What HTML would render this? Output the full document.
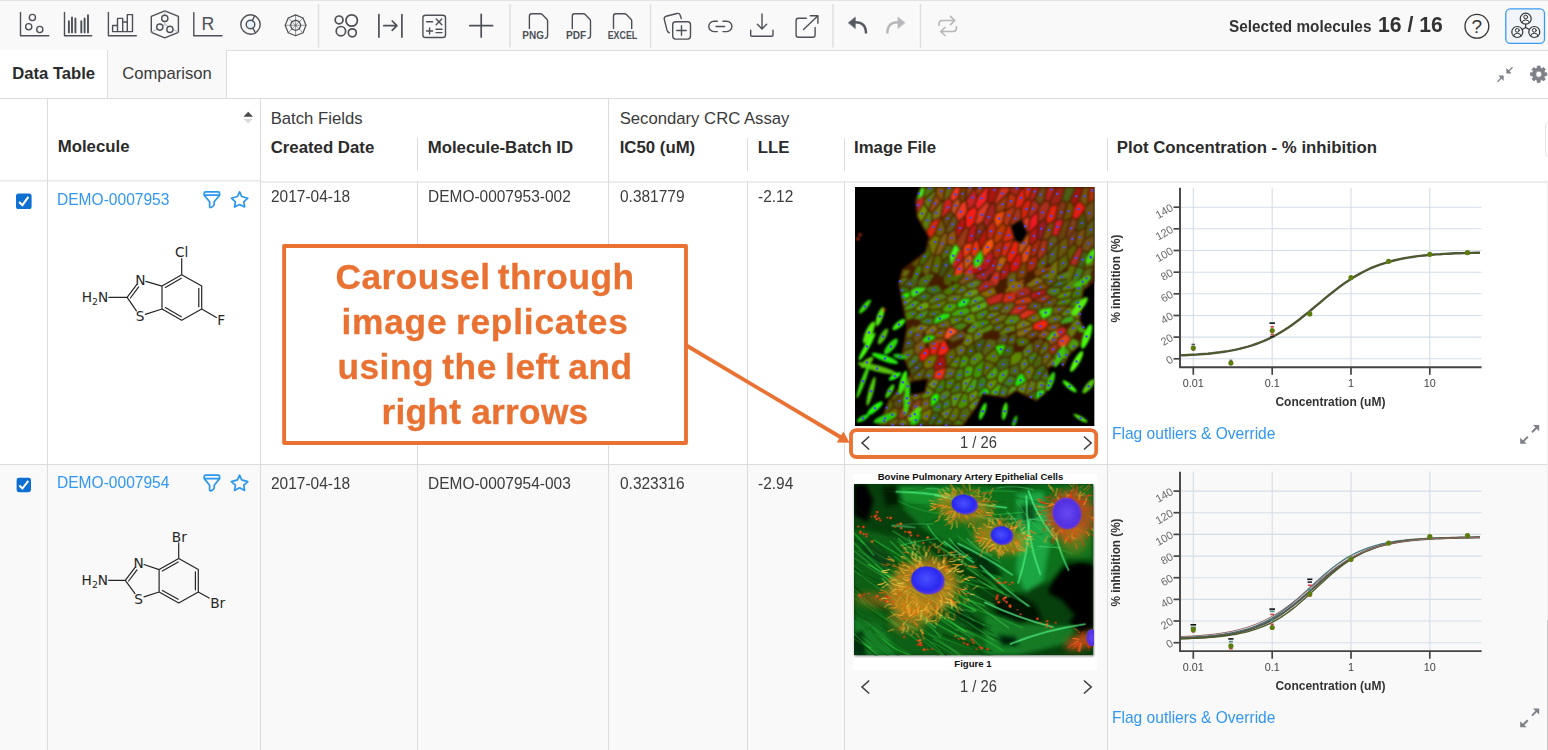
<!DOCTYPE html>
<html><head><meta charset="utf-8"><title>Data Table</title>
<style>
html,body{margin:0;padding:0;}
body{width:1548px;height:750px;overflow:hidden;position:relative;background:#fff;font-family:"Liberation Sans",sans-serif;color:#333;}
.abs{position:absolute;}
.t{position:absolute;white-space:nowrap;line-height:1;}
.vl{position:absolute;width:1px;background:#dcdcdc;}
.hl{position:absolute;height:1px;background:#dcdcdc;}
.hd{font-weight:bold;font-size:16.8px;color:#2b2b2b;}
.gh{font-size:16.7px;color:#3a3a3a;}
.dc{font-size:17px;color:#3c3c3c;transform:scaleX(0.91);transform-origin:0 0;}
.lk{font-size:17px;color:#3197f3;transform:scaleX(0.915);transform-origin:0 0;}
svg{position:absolute;overflow:visible;}
</style></head><body>
<!-- toolbar -->
<div class="abs" style="left:0;top:0;width:1548px;height:50px;background:#f9f9f9;"></div>
<div class="hl" style="left:0;top:0;width:1548px;background:#e3e3e3;"></div>
<!-- tabs -->
<div class="abs" style="left:0;top:50px;width:1548px;height:48px;background:#fff;"></div>
<div class="hl" style="left:226px;top:50px;width:1322px;background:#dedede;"></div>
<div class="abs" style="left:108px;top:50px;width:118px;height:48px;background:#f9f9f9;"></div>
<div class="vl" style="left:107px;top:50px;height:48px;"></div>
<div class="vl" style="left:226px;top:50px;height:48px;"></div>
<div class="hl" style="left:0;top:98px;width:1548px;"></div>
<div class="t hd" style="left:12.2px;top:66px;font-size:16.65px;">Data Table</div>
<div class="t" style="left:122.3px;top:66px;font-size:16.6px;color:#3a3a3a;">Comparison</div>
<!-- row backgrounds -->
<div class="abs" style="left:0;top:465px;width:1548px;height:285px;background:#f9f9f9;"></div>
<!-- grid lines -->
<div class="vl" style="left:47px;top:98px;height:652px;"></div>
<div class="vl" style="left:260px;top:98px;height:652px;"></div>
<div class="vl" style="left:608px;top:98px;height:652px;"></div>
<div class="vl" style="left:417px;top:138px;height:33px;"></div>
<div class="vl" style="left:417px;top:181px;height:569px;"></div>
<div class="vl" style="left:747px;top:138px;height:33px;"></div>
<div class="vl" style="left:747px;top:181px;height:569px;"></div>
<div class="vl" style="left:844px;top:138px;height:33px;"></div>
<div class="vl" style="left:844px;top:181px;height:569px;"></div>
<div class="vl" style="left:1107px;top:138px;height:33px;"></div>
<div class="vl" style="left:1107px;top:181px;height:569px;"></div>
<svg style="left:0;top:0;" width="1548" height="200" viewBox="0 0 1548 200"><path d="M0 180.9H260.5M260.5 182H1548" stroke="#dcdcdc" stroke-width="1" fill="none"/></svg>
<div class="hl" style="left:0;top:464px;width:1548px;"></div>
<div class="vl" style="left:1547px;top:183px;height:437px;background:#f0f0f0;"></div>
<!-- header texts -->
<div class="t hd" style="left:57.7px;top:139px;">Molecule</div>
<div class="t gh" style="left:270.7px;top:111px;">Batch Fields</div>
<div class="t hd" style="left:270.7px;top:140px;">Created Date</div>
<div class="t hd" style="left:427.7px;top:140px;">Molecule-Batch ID</div>
<div class="t gh" style="left:619.7px;top:111px;">Secondary CRC Assay</div>
<div class="t hd" style="left:619.7px;top:140px;">IC50 (uM)</div>
<div class="t hd" style="left:757.7px;top:140px;">LLE</div>
<div class="t hd" style="left:854px;top:140px;">Image File</div>
<div class="t hd" style="left:1116.8px;top:140px;">Plot Concentration - % inhibition</div>
<!-- row 1 texts -->
<div class="t lk" style="left:57px;top:191px;">DEMO-0007953</div>
<div class="t dc" style="left:270.5px;top:188px;">2017-04-18</div>
<div class="t dc" style="left:427.5px;top:188px;">DEMO-0007953-002</div>
<div class="t dc" style="left:619.5px;top:188px;">0.381779</div>
<div class="t dc" style="left:757.5px;top:188px;">-2.12</div>
<div class="t lk" style="left:1112px;top:425px;">Flag outliers &amp; Override</div>
<!-- row 2 texts -->
<div class="t lk" style="left:57px;top:474px;">DEMO-0007954</div>
<div class="t dc" style="left:270.5px;top:475px;">2017-04-18</div>
<div class="t dc" style="left:427.5px;top:475px;">DEMO-0007954-003</div>
<div class="t dc" style="left:619.5px;top:475px;">0.323316</div>
<div class="t dc" style="left:757.5px;top:475px;">-2.94</div>
<div class="t lk" style="left:1112px;top:709px;">Flag outliers &amp; Override</div>
<!-- selected -->
<div class="t" style="left:1229px;top:19.3px;font-size:16px;font-weight:bold;color:#333;transform:scaleX(0.959);transform-origin:0 0;">Selected molecules</div>
<div class="t" style="left:1378px;top:14px;font-size:22.4px;font-weight:bold;color:#333;transform:scaleX(0.945);transform-origin:0 0;">16 / 16</div>
<svg style="left:0;top:0;" width="1548" height="100" viewBox="0 0 1548 100" fill="none" stroke="#4d5056" stroke-width="1.4" stroke-linecap="round" stroke-linejoin="round">
<!-- separators -->
<g stroke="#dedede" stroke-width="1.4" stroke-linecap="butt">
<line x1="318.5" y1="4" x2="318.5" y2="47.6"/><line x1="510" y1="4" x2="510" y2="47.6"/><line x1="650.5" y1="4" x2="650.5" y2="47.6"/><line x1="833" y1="4" x2="833" y2="47.6"/><line x1="920.5" y1="4" x2="920.5" y2="47.6"/>
</g>
<!-- scatter -->
<path d="M20.5 12.5V35.7H48.8"/>
<circle cx="32.4" cy="17.5" r="3.1"/><circle cx="28.7" cy="26.7" r="3.1"/><circle cx="39.8" cy="29.5" r="3.1"/>
<!-- bars -->
<path d="M64.5 12.5V35.7H91.7"/>
<g stroke-width="1.9"><path d="M68.9 21.2V32.4M72 17.4V32.4M75.4 18.4V32.4M81.3 21.2V32.4M84.6 18.4V32.4M88 15.2V32.4"/></g>
<!-- histogram -->
<path d="M108.4 12.5V35.7H136.3"/>
<path d="M112.6 31.6V25.5H117.5V31.6M117.5 25.5V18.4H122.7V31.6M122.7 22H127.3V31.6M127.3 22V14.6H132.5V31.6H112.6"/>
<!-- hexagon -->
<path d="M164.8 10.8L178.4 16.4V32.3L164.8 37.8L151.3 32.3V16.4Z"/>
<g stroke="#aab4c0" stroke-width="0.9"><path d="M164.8 10.8V24.5M164.8 24.5L151.3 32.3M164.8 24.5L178.4 32.3"/></g>
<g fill="#f9f9f9"><circle cx="164.8" cy="18.4" r="3.1"/><circle cx="159.8" cy="27.1" r="3.1"/><circle cx="169.9" cy="29.4" r="3.1"/></g>
<!-- R -->
<path d="M193.8 12.6V35.8H222"/>
<text x="201.6" y="30" font-family="Liberation Sans, sans-serif" font-size="17.8" fill="#4d5056" stroke="none">R</text>
<!-- donut -->
<circle cx="250.5" cy="24.5" r="9.7"/><circle cx="250.5" cy="24.5" r="4.3" fill="#e6f2fb"/>
<path d="M252.4 20.6L254.6 15.8M252.7 28.2L255.6 33"/>
<!-- radar -->
<g stroke-width="1.2"><path d="M295.6 14.9L303 18L306 25.3L303 32.7L295.6 35.7L288.2 32.7L285.2 25.3L288.2 18Z"/>
<path d="M295.6 20.1L299.3 21.6L300.8 25.3L299.3 29L295.6 30.5L291.9 29L290.4 25.3L291.9 21.6Z"/></g>
<g stroke-width="0.6"><path d="M295.6 14.9V35.7M285.2 25.3H306M288.2 18L303 32.7M303 18L288.2 32.7"/></g>
<!-- four circles -->
<g stroke-width="1.7"><circle cx="339.1" cy="19.9" r="3.9"/><circle cx="351.7" cy="20.5" r="5.7"/><circle cx="340.9" cy="31.2" r="4.7"/><circle cx="352.3" cy="32.8" r="4"/></g>
<!-- |->| -->
<g stroke-width="1.7"><path d="M378.9 14.5V37.1M401.9 14.5V37.1M383.8 25.7H396.9M392.2 21L396.9 25.7L392.2 30.4"/></g>
<!-- calculator -->
<rect x="422.9" y="15.2" width="22.6" height="22.3" rx="2.6"/>
<path d="M426.6 21.8H432.6M436.2 18.9L441.8 24.7M441.8 18.9L436.2 24.7M426.6 31H432.6M429.6 28V34M436 29.3H442M436 32.6H442"/>
<!-- plus -->
<g stroke-width="1.7"><path d="M481.2 14.3V37.1M469.8 25.7H492.6"/></g>
<!-- file icons -->
<path d="M529.4 28.6V15.9Q529.4 13.7 531.6 13.7H540.6Q541.6 13.7 542.3 14.4L546.9 19.2Q547.6 19.9 547.6 21V35.6Q547.6 38.2 545.2 38.4"/>
<path d="M572.3 28.6V15.9Q572.3 13.7 574.5 13.7H583.5Q584.5 13.7 585.2 14.4L589.8 19.2Q590.5 19.9 590.5 21V35.6Q590.5 38.2 588.1 38.4"/>
<path d="M613.5 28.6V15.9Q613.5 13.7 615.7 13.7H624.7Q625.7 13.7 626.4 14.4L631 19.2Q631.7 19.9 631.7 21V28.6"/>
<g font-family="Liberation Sans, sans-serif" font-weight="bold" font-size="10.2" fill="#4d5056" stroke="none">
<text x="522.3" y="38.8" textLength="21.6" lengthAdjust="spacingAndGlyphs">PNG</text>
<text x="565.9" y="38.8" textLength="20.2" lengthAdjust="spacingAndGlyphs">PDF</text>
<text x="607.7" y="38.8" textLength="29.5" lengthAdjust="spacingAndGlyphs">EXCEL</text>
</g>
<!-- copy plus -->
<rect x="672.7" y="21.7" width="17.8" height="17.4" rx="3"/>
<path d="M681.5 25.8V35.2M676.8 30.5H686.2"/>
<path d="M669.4 32.8Q667.6 32.2 667 30.2L664.3 19.4Q663.7 17 666 16.3L677 13.5Q679.4 12.9 680.2 15.2L681.3 18.6"/>
<!-- link -->
<path d="M717.3 21.2H714A5.2 5.2 0 0 0 714 31.6H717.3M723 21.2H726.7A5.2 5.2 0 0 1 726.7 31.6H723M716 26.5H724.6"/>
<!-- download -->
<path d="M762 13.9V28.7M757.4 24.3L762 28.9L766.6 24.3M750.7 30.3V35.3Q750.7 36.3 751.7 36.3H772Q773 36.3 773 35.3V30.3"/>
<!-- external -->
<path d="M806.3 18.3H798.3Q796.1 18.3 796.1 20.5V35Q796.1 37.2 798.3 37.2H812.9Q815.1 37.2 815.1 35V27.4M803.5 29.4L817.7 15.9M810.3 15.8H817.9V23.3"/>
<!-- undo -->
<path d="M848.3 22.7L855.4 16.9V28.5Z" fill="#555960" stroke="#555960" stroke-width="0.4"/>
<path d="M855 22.2Q866 22 866 33.4" stroke="#555960" stroke-width="2.5" stroke-linecap="butt"/>
<!-- redo -->
<path d="M905 22.7L897.9 16.9V28.5Z" fill="#b6b8bb" stroke="#b6b8bb" stroke-width="0.4"/>
<path d="M898.3 22.2Q887.3 22 887.3 33.4" stroke="#b6b8bb" stroke-width="2.5" stroke-linecap="butt"/>
<!-- swap -->
<g stroke="#b6b8bb" stroke-width="1.7"><path d="M939 25.2V24Q939 20.5 942.5 20.5H954.6M950.5 16.4L954.8 20.5L950.5 24.6M956.4 26.9V28Q956.4 31.5 952.9 31.5H940.8M945 27.5L940.7 31.5L945 35.5"/></g>
<!-- help -->
<circle cx="1476.9" cy="26.3" r="11.9" stroke="#333" stroke-width="1.3"/>
<text x="1476.9" y="33" text-anchor="middle" font-family="Liberation Sans, sans-serif" font-size="19" fill="#333" stroke="none">?</text>
<!-- collab -->
<rect x="1505.8" y="8.8" width="38.7" height="34.6" rx="4.5" fill="#f1f5f9" stroke="#3a9bf0" stroke-width="1.3"/>
<g stroke="#333" stroke-width="1.2">
<path d="M1525.7 24.3V27.6M1525.7 27.6L1522.2 29.6M1525.7 27.6L1529.3 29.6"/>
<circle cx="1525.7" cy="18.7" r="5.5"/><circle cx="1517.3" cy="32" r="5.5"/><circle cx="1534.3" cy="32" r="5.5"/>
<g stroke-width="1"><circle cx="1525.7" cy="17" r="1.9"/><path d="M1522 22.6Q1522.4 19.9 1525.7 19.9Q1529 19.9 1529.4 22.6"/>
<circle cx="1517.3" cy="30.3" r="1.9"/><path d="M1513.6 35.9Q1514 33.2 1517.3 33.2Q1520.6 33.2 1521 35.9"/>
<circle cx="1534.3" cy="30.3" r="1.9"/><path d="M1530.6 35.9Q1531 33.2 1534.3 33.2Q1537.600 33.2 1538 35.9"/></g>
</g>
<!-- gear -->
<path d="M1537.20 68.08L1537.30 66.02L1540.10 66.02L1540.20 68.08L1541.97 68.81L1543.49 67.42L1545.48 69.41L1544.09 70.93L1544.82 72.70L1546.88 72.80L1546.88 75.60L1544.82 75.70L1544.09 77.47L1545.48 78.99L1543.49 80.98L1541.97 79.59L1540.20 80.32L1540.10 82.38L1537.30 82.38L1537.20 80.32L1535.43 79.59L1533.91 80.98L1531.92 78.99L1533.31 77.47L1532.58 75.70L1530.52 75.60L1530.52 72.80L1532.58 72.70L1533.31 70.93L1531.92 69.41L1533.91 67.42L1535.43 68.81ZM1535.60 74.20A3.1 3.1 0 1 0 1541.80 74.20A3.1 3.1 0 1 0 1535.60 74.20Z" fill="#7d8187" fill-rule="evenodd" stroke="#7d8187" stroke-width="0.8" stroke-linejoin="round"/>
<!-- collapse arrows -->
<g stroke="#7d8187" stroke-width="1.3" fill="#7d8187" stroke-linecap="butt">
<path d="M1512.5 67.3L1508 71.8M1497.5 81.7L1502 77.2"/>
<path d="M1506.6 68.6L1506.6 73.2L1511.2 73.2Z" stroke-width="0.5"/><path d="M1503.4 80.4L1503.4 75.8L1498.8 75.8Z" stroke-width="0.5"/>
</g>
</svg>
<svg style="left:0;top:0;" width="1548" height="750" viewBox="0 0 1548 750" fill="none">
<rect x="16" y="193.5" width="15.6" height="15.6" rx="2.6" fill="#0e6fd3" stroke="none"/>
<path d="M19.1 202L22.4 205.1L28.4 196.9" stroke="#fff" stroke-width="2.1" fill="none" stroke-linecap="butt" stroke-linejoin="miter"/>
<path d="M205.6 191.8H218.2Q219.6 191.8 219.6 193.2V195.2L214.2 201.8V204.6Q214.2 206 211.4 207.2Q209.6 208 209.6 206.4V201.8L204.2 195.2V193.2Q204.2 191.8 205.6 191.8ZM204.2 195.2H219.6" stroke="#2a97f0" stroke-width="1.7" fill="none" stroke-linejoin="round"/>
<path d="M239.6 191.8L241.7 196.5L247.8 198.2L243.8 201.8L244.6 207.0L239.6 204.4L234.6 207.0L235.4 201.8L231.4 198.2L237.5 196.5Z" stroke="#2a97f0" stroke-width="1.7" fill="none" stroke-linejoin="round"/>
<rect x="16.6" y="477.7" width="14.4" height="14.5" rx="2.4" fill="#0e6fd3" stroke="none"/>
<path d="M19.4 485.5L22.4 488.5L28.3 480.9" stroke="#fff" stroke-width="2" fill="none" stroke-linecap="butt" stroke-linejoin="miter"/>
<path d="M205.6 475.2H218.2Q219.6 475.2 219.6 476.59999999999997V478.59999999999997L214.2 485.2V488.0Q214.2 489.4 211.4 490.59999999999997Q209.6 491.4 209.6 489.79999999999995V485.2L204.2 478.59999999999997V476.59999999999997Q204.2 475.2 205.6 475.2ZM204.2 478.59999999999997H219.6" stroke="#2a97f0" stroke-width="1.7" fill="none" stroke-linejoin="round"/>
<path d="M239.6 475.2L241.7 479.9L247.8 481.6L243.8 485.2L244.6 490.4L239.6 487.8L234.6 490.4L235.4 485.2L231.4 481.6L237.5 479.9Z" stroke="#2a97f0" stroke-width="1.7" fill="none" stroke-linejoin="round"/>
<g stroke="#7d8187" fill="#7d8187" stroke-width="2" stroke-linecap="butt"><path d="M1532 432.2L1537 427.2M1527.8 436.8L1522.6 442"/><path d="M1533 425H1539.2V431.2Z" stroke="none"/><path d="M1520.2 437.8V443.8H1526.6Z" stroke="none"/></g>
<g stroke="#7d8187" fill="#7d8187" stroke-width="2" stroke-linecap="butt"><path d="M1532 715.6L1537 710.6M1527.8 720.2L1522.6 725.4"/><path d="M1533 708.4H1539.2V714.6Z" stroke="none"/><path d="M1520.2 721.2V727.2H1526.6Z" stroke="none"/></g>
<g stroke="#3a3a3a" stroke-width="1.5" fill="none" stroke-linecap="butt" stroke-linejoin="miter"><path d="M869.2 436.5L862 443L869.2 449.5"/><path d="M1084 436.5L1091.2 443L1084 449.5"/></g>
<g stroke="#3a3a3a" stroke-width="1.5" fill="none" stroke-linecap="butt" stroke-linejoin="miter"><path d="M869.2 680.5L862 687L869.2 693.5"/><path d="M1084 680.5L1091.2 687L1084 693.5"/></g>
<path d="M243.4 116.8L248.2 111.8L253 116.8Z" fill="#4a4a4a"/><path d="M243.6 119L248.2 123.4L252.8 119Z" fill="#dadada"/>
</svg>
<div class="t" style="left:960px;top:434.5px;font-size:15.6px;color:#3c3c3c;transform:scaleX(0.945);transform-origin:0 0;">1 / 26</div>
<div class="t" style="left:960px;top:678.5px;font-size:15.6px;color:#3c3c3c;transform:scaleX(0.945);transform-origin:0 0;">1 / 26</div>
<div class="abs" style="left:1545px;top:122px;width:10px;height:33px;border:1.5px solid #e4e4e4;border-radius:4px;"></div>
<div class="abs" style="left:1546.5px;top:620px;width:2px;height:130px;background:#c6c6c6;"></div>
<svg style="left:0;top:0;" width="300" height="750" viewBox="0 0 300 750">
<g fill="none" stroke="#262626" stroke-width="1.2" stroke-linecap="round">
<path d="M181.7 274.7L201.7 286.1M201.7 286.1L201.7 309.0M201.7 309.0L181.7 320.3M181.7 320.3L162.0 309.0M162.0 309.0L162.0 286.1M162.0 286.1L181.7 274.7M165.4 287.5L181.3 278.3M198.8 288.3L198.8 306.8M181.3 316.7L165.4 307.6M162.0 286.1L145.8 281.3M127.1 297.4L136.7 284.6M130.4 298.0L138.7 286.9M127.1 297.4L136.4 310.9M145.3 314.4L162.0 309.0M108.9 297.4L127.1 297.4M181.7 274.7L181.7 258.7M201.7 309.0L216.4 317.4"/>
<path d="M178.7 558.4L198.3 569.6M198.3 569.6L198.3 592.0M198.3 592.0L178.7 602.9M178.7 602.9L159.1 592.0M159.1 592.0L159.1 569.6M159.1 569.6L178.7 558.4M162.4 571.0L178.2 562.0M195.4 571.8L195.4 589.8M178.2 599.3L162.4 590.5M159.1 569.6L144.0 564.5M125.3 580.4L134.9 567.6M128.6 581.0L137.0 569.9M125.3 580.4L135.0 593.6M144.0 596.9L159.1 592.0M108.7 580.4L125.3 580.4M178.7 558.4L178.7 542.9M198.3 592.0L209.1 598.1"/>
</g>
<g font-family="DejaVu Sans, sans-serif" font-size="13.7" fill="#262626">
<text x="140.4" y="284.6" text-anchor="middle">N</text>
<text x="140.0" y="321.0" text-anchor="middle">S</text>
<text x="181.7" y="257.2" text-anchor="middle">Cl</text>
<text x="221.3" y="325.2" text-anchor="middle">F</text>
<text x="108.3" y="302.3" text-anchor="end">H<tspan font-size="9.4" dy="3">2</tspan><tspan dy="-3">N</tspan></text>
<text x="138.7" y="567.6" text-anchor="middle">N</text>
<text x="138.7" y="603.6" text-anchor="middle">S</text>
<text x="179.3" y="541.6" text-anchor="middle">Br</text>
<text x="217.7" y="608.2" text-anchor="middle">Br</text>
<text x="108.1" y="585.3" text-anchor="end">H<tspan font-size="9.4" dy="3">2</tspan><tspan dy="-3">N</tspan></text>
</g>
</svg>
<svg style="left:855.3px;top:186.6px;" width="239.6" height="239.2" viewBox="0 0 240 240" preserveAspectRatio="none" overflow="hidden">
<defs><filter id="b0" x="-5%" y="-5%" width="110%" height="110%"><feGaussianBlur stdDeviation="0.6"/></filter><filter id="b1" x="-5%" y="-5%" width="110%" height="110%"><feGaussianBlur stdDeviation="1.1"/></filter><clipPath id="c1"><rect x="0" y="0" width="240" height="240"/></clipPath></defs>
<g clip-path="url(#c1)">
<rect x="0" y="0" width="240" height="240" fill="#000"/>
<path d="M73.2 50.4L70.1 64.7L46.9 82.9L46.8 83.0L46.8 83.0L46.7 83.1L46.7 83.2L46.6 83.3L46.6 83.3L46.6 83.4L43.2 96.8L43.2 96.9L43.2 97.0L43.2 97.2L43.2 97.3L51.5 140.6L46.5 167.2L46.5 167.3L46.5 167.4L46.5 167.5L46.6 167.6L46.6 167.7L46.6 167.7L54.7 187.3L33.4 213.6L33.3 213.7L33.3 213.8L33.2 213.9L23.2 239.0L23.1 239.1L23.1 239.1L23.1 239.2L23.1 239.3L23.1 239.4L23.1 239.5L23.1 239.6L23.2 239.7L23.2 239.8L23.3 239.9L23.3 240.0L23.4 240.0L23.5 240.1L23.5 240.2L23.6 240.2L23.7 240.3L23.8 240.3L23.9 240.3L24.0 240.3L24.1 240.3L107.8 240.3L107.9 240.3L108.0 240.3L108.1 240.3L108.2 240.3L108.2 240.2L108.3 240.2L108.4 240.1L108.5 240.1L108.5 240.0L108.6 239.9L122.0 221.5L122.0 221.4L122.1 221.4L128.4 208.6L151.2 211.9L151.3 211.9L151.4 211.9L151.5 211.9L151.6 211.8L151.7 211.8L151.8 211.8L151.9 211.7L161.4 205.3L181.0 215.1L181.1 215.2L181.2 215.2L181.2 215.2L181.3 215.2L181.4 215.2L181.5 215.2L181.6 215.2L181.7 215.2L181.8 215.2L181.9 215.1L182.0 215.1L182.0 215.0L190.4 208.3L190.5 208.2L190.6 208.2L190.6 208.1L196.4 199.7L196.4 199.6L196.5 199.6L196.5 199.5L196.5 199.4L196.5 199.3L196.5 199.2L196.5 199.1L196.5 199.0L193.7 182.0L206.6 176.8L207.3 180.8L207.3 180.9L207.3 181.0L207.4 181.0L207.4 181.1L207.5 181.2L207.5 181.3L207.6 181.3L207.7 181.4L207.8 181.5L207.9 181.5L207.9 181.5L208.0 181.6L208.1 181.6L208.2 181.6L208.3 181.6L208.4 181.6L208.5 181.6L208.6 181.5L208.7 181.5L208.8 181.5L208.9 181.4L208.9 181.4L209.0 181.3L209.1 181.2L209.1 181.1L209.2 181.0L215.7 168.0L235.6 151.4L235.7 151.3L235.8 151.3L235.8 151.2L235.9 151.1L235.9 151.0L235.9 150.9L236.0 150.8L236.0 150.7L236.0 150.6L236.0 150.5L236.0 150.4L235.9 150.3L235.9 150.2L235.8 150.1L226.0 133.7L229.2 104.3L240.7 94.5L240.7 94.4L240.8 94.3L240.8 94.3L240.9 94.2L240.9 94.1L241.0 94.0L241.0 93.9L241.0 93.8L241.0 93.7L241.0 0.0L241.0 -0.1L241.0 -0.2L241.0 -0.3L240.9 -0.4L240.9 -0.5L240.8 -0.6L240.8 -0.6L240.7 -0.7L240.6 -0.8L240.6 -0.8L240.5 -0.9L240.4 -0.9L240.3 -1.0L240.2 -1.0L240.1 -1.0L240.0 -1.0L65.9 -1.0L65.8 -1.0L65.7 -1.0L65.6 -1.0L65.5 -0.9L65.5 -0.9L65.4 -0.8L65.3 -0.8L65.2 -0.7L65.2 -0.6L65.1 -0.5L65.0 -0.4L65.0 -0.4L60.0 13.0L60.0 13.1L59.9 13.2L59.9 13.3L59.9 13.4L59.9 13.5L61.6 30.2L61.6 30.3L61.6 30.4L61.7 30.5L61.7 30.6ZM166.5 55.2L161.0 53.3L157.0 39.4L166.4 33.7L171.8 46.7ZM71.8 193.2L69.3 205.8L53.4 208.4L55.9 195.9Z" fill="#451c06" fill-rule="evenodd" filter="url(#b1)"/>
<g filter="url(#b1)"><path d="M137.5 61.7L138.8 58.4L138.0 51.8L132.7 53.9L127.3 62.6L129.4 69.9Z" fill="#f3530c"/><path d="M220.8 56.2L223.5 59.9L226.4 58.4L229.3 52.1L230.5 41.7L223.6 45.5Z" fill="#71530b"/><path d="M140.1 59.0L138.9 62.2L139.2 70.4L143.8 70.5L144.8 69.4L148.0 56.0L147.1 53.8Z" fill="#b42c0d"/><path d="M77.0 67.2L79.1 67.2L85.2 50.6L79.7 48.4L74.0 54.9L73.9 55.1Z" fill="#6f7400"/><path d="M169.8 90.4L171.6 86.9L171.4 76.4L167.2 77.5L163.2 84.9L162.5 93.1Z" fill="#7b4501"/><path d="M66.3 85.4L66.9 79.9L64.3 78.3L61.0 81.9L56.5 93.3L58.8 98.1Z" fill="#467904"/><path d="M184.4 0.7L178.7 0.7L174.6 11.4L177.2 13.5L179.6 11.8Z" fill="#b0221b"/><path d="M167.4 76.0L171.6 74.9L174.0 71.1L176.3 58.7L174.2 57.9L167.3 67.6Z" fill="#dc4c12"/><path d="M69.3 8.6L70.0 11.1L80.6 1.5L80.8 0.7L70.9 0.7Z" fill="#4e7508"/><path d="M140.0 15.6L141.0 17.4L153.7 5.1L153.8 4.8L154.8 0.7L146.0 0.7Z" fill="#d23023"/><path d="M86.9 15.0L77.9 25.8L77.7 33.2L85.3 30.0L88.0 14.9L87.9 14.7Z" fill="#776e16"/><path d="M138.9 16.5L135.7 17.7L128.8 35.2L131.3 40.0L131.9 39.9L137.7 32.7L140.1 26.1L140.1 18.7Z" fill="#a42020"/><path d="M212.7 79.6L213.6 77.8L213.8 77.0L211.2 67.5L204.4 73.3L204.0 86.8L204.0 86.8Z" fill="#57630d"/><path d="M109.8 28.6L112.0 23.5L110.6 14.0L106.7 16.7L101.1 27.3L103.5 33.8Z" fill="#eb3921"/><path d="M95.5 10.0L98.0 14.6L102.6 10.3L105.4 0.7L100.2 0.7Z" fill="#f13824"/><path d="M187.8 52.3L192.9 52.3L196.5 47.8L199.1 35.1L192.8 38.3Z" fill="#7b490b"/><path d="M204.5 54.3L204.7 54.4L210.0 49.9L215.3 32.6L209.4 34.7L203.9 49.3Z" fill="#694510"/><path d="M238.2 80.4L230.2 83.4L227.4 90.6L229.7 101.6L232.8 99.0Z" fill="#596814"/><path d="M230.9 51.1L239.3 46.8L239.3 31.5L233.2 38.1L232.0 40.6Z" fill="#575915"/><path d="M196.3 19.4L191.5 31.3L192.7 36.8L199.6 33.3L203.0 18.1Z" fill="#e1210a"/><path d="M63.0 27.3L63.3 29.9L66.5 35.4L72.6 23.8L68.8 17.6Z" fill="#759301"/><path d="M62.0 12.6L68.0 8.2L69.4 0.7L66.4 0.7Z" fill="#44fc1b"/><path d="M154.2 39.0L152.7 40.4L148.2 52.6L149.1 55.1L158.8 51.9L155.3 39.6Z" fill="#d72a0f"/><path d="M85.0 68.6L80.5 69.4L76.3 84.9L83.1 86.8L86.7 74.9Z" fill="#556902"/><path d="M65.0 77.1L67.5 78.6L75.7 67.8L73.3 58.1L71.6 65.4L71.6 65.5L71.6 65.6L71.6 65.6L71.5 65.7L71.5 65.7L71.4 65.8L71.4 65.8L66.5 69.7Z" fill="#456d01"/><path d="M86.6 32.0L86.6 31.9L80.4 47.2L85.9 49.4L89.8 44.6L90.3 42.4Z" fill="#6f5c0b"/><path d="M86.3 67.9L87.8 73.7L93.3 69.2L97.6 59.5L92.1 58.2Z" fill="#536509"/><path d="M111.7 55.6L118.4 54.6L119.0 53.8L121.5 38.7L119.8 37.3L115.4 41.9Z" fill="#bf161e"/><path d="M152.8 91.4L152.3 98.9L157.1 102.5L161.0 93.9L161.8 85.5L155.2 86.9Z" fill="#645d16"/><path d="M74.5 23.4L77.1 24.7L85.6 14.4L81.0 8.9Z" fill="#964d12"/><path d="M216.1 97.5L220.3 97.1L226.1 90.2L228.9 82.8L228.9 82.4L222.6 80.6L216.0 97.1Z" fill="#407e1e"/><path d="M95.3 23.0L97.1 15.8L94.5 11.1L89.4 15.1L86.7 30.5L86.7 30.5L86.9 30.6Z" fill="#c9221e"/><path d="M212.4 66.4L214.7 75.1L222.4 60.9L220.0 57.4L214.3 62.0Z" fill="#5c5c05"/><path d="M123.1 22.5L131.6 14.0L133.3 0.7L131.4 0.7L123.0 10.8L120.4 18.6Z" fill="#f02226"/><path d="M96.9 79.6L96.3 79.9L88.7 90.9L89.5 97.1L95.1 99.4L98.1 92.8L99.2 82.9Z" fill="#4e5b03"/><path d="M155.7 38.2L165.6 32.2L165.8 21.6L161.3 22.7L155.0 37.8Z" fill="#a3341b"/><path d="M217.7 30.4L222.8 31.7L228.7 23.8L230.3 19.7L224.6 14.5L220.4 19.7Z" fill="#e31d15"/><path d="M77.5 34.8L72.2 45.2L74.9 49.9L74.9 49.9L75.0 50.0L75.0 50.0L75.0 50.1L75.0 50.2L75.0 50.2L75.0 50.3L75.0 50.4L74.6 52.0L78.9 47.2L85.2 31.5Z" fill="#d52811"/><path d="M151.2 22.7L159.2 18.4L161.2 9.9L154.9 6.1Z" fill="#ba3010"/><path d="M230.2 81.9L238.8 78.6L239.3 78.0L239.3 59.6L234.5 65.5L230.2 81.9Z" fill="#5a7208"/><path d="M183.3 53.3L177.8 58.6L175.6 70.2L181.7 67.6L186.0 53.5Z" fill="#a62c0a"/><path d="M139.6 84.3L143.2 71.9L139.0 71.8L134.1 81.8L136.5 88.3Z" fill="#ae1d1b"/><path d="M183.9 74.7L182.1 80.5L186.2 83.6L192.4 77.0L192.5 67.4L191.7 67.0Z" fill="#615a10"/><path d="M109.8 83.9L117.2 74.6L118.0 71.9L115.4 67.2L109.5 72.6Z" fill="#cb5b14"/><path d="M159.4 54.1L152.5 69.9L152.5 73.8L155.5 75.9L162.9 66.0L163.3 55.9L159.9 54.8L159.9 54.8L159.8 54.7L159.7 54.7L159.7 54.6L159.6 54.6L159.6 54.5L159.6 54.5L159.5 54.4L159.5 54.4L159.5 54.3Z" fill="#ea230c"/><path d="M183.7 38.0L183.7 51.9L186.3 52.2L191.5 37.8L190.3 32.5L184.1 37.3Z" fill="#971c28"/><path d="M187.4 53.8L183.0 68.1L183.8 72.9L190.9 65.8L192.4 53.7Z" fill="#a6341d"/><path d="M168.0 102.3L169.5 92.0L162.2 94.7L158.0 103.8L157.5 107.3L165.5 107.3Z" fill="#894c0a"/><path d="M88.8 13.7L88.9 13.8L94.2 9.6L98.6 0.7L91.5 0.7Z" fill="#65660d"/><path d="M105.7 62.6L97.9 78.7L100.0 81.5L107.7 71.9L107.0 62.1Z" fill="#cf1e24"/><path d="M227.0 64.0L226.4 60.0L223.8 61.4L215.1 77.3L215.1 77.4L221.7 78.3Z" fill="#b02d27"/><path d="M211.4 49.9L213.1 50.3L220.7 41.7L222.3 33.0L217.1 31.7L217.0 31.8Z" fill="#7d3f1c"/><path d="M212.6 15.0L214.6 13.4L220.5 0.7L210.9 0.7L207.6 13.1Z" fill="#4e5d13"/><path d="M204.6 17.5L201.2 32.7L207.7 31.5L211.9 16.2L207.0 14.3Z" fill="#7d3818"/><path d="M182.6 23.0L184.3 18.8L180.0 13.2L177.8 14.8L173.5 29.2L175.4 30.3Z" fill="#ac2d21"/><path d="M91.3 44.7L93.1 46.7L99.8 41.1L102.4 35.0L99.9 28.3L99.1 28.7L91.7 42.5Z" fill="#65541e"/><path d="M216.0 13.8L219.8 18.3L223.9 13.1L227.8 0.7L222.0 0.7Z" fill="#9d150f"/><path d="M214.8 96.3L221.5 79.7L214.7 78.8L213.9 80.2L212.2 95.7Z" fill="#606e04"/><path d="M167.0 31.6L167.0 31.6L167.0 31.6L167.1 31.6L167.2 31.6L167.2 31.6L167.3 31.7L167.3 31.7L167.4 31.8L167.4 31.8L167.5 31.9L167.5 31.9L167.5 32.0L167.7 32.4L172.1 29.1L176.4 14.6L173.7 12.5L171.3 14.2L167.2 20.9Z" fill="#d2230a"/><path d="M154.9 77.2L152.0 75.2L146.3 84.9L145.4 93.9L151.6 90.6L154.0 86.0Z" fill="#a91e0d"/><path d="M133.0 14.0L135.3 16.3L138.7 15.1L144.5 0.7L134.7 0.7Z" fill="#a91511"/><path d="M209.5 0.7L202.3 0.7L195.7 14.9L196.3 17.9L203.5 16.6L206.1 13.2Z" fill="#982017"/><path d="M145.8 70.4L144.7 71.6L141.1 83.9L145.2 84.0L151.1 74.0L151.1 70.5Z" fill="#b8600a"/><path d="M225.3 13.3L231.0 18.5L232.3 16.8L233.6 0.7L229.3 0.7Z" fill="#755308"/><path d="M90.5 46.0L86.7 50.5L80.4 67.9L80.4 68.0L85.1 67.2L91.1 57.2L92.3 47.9Z" fill="#815e16"/><path d="M164.3 65.8L166.3 66.5L173.3 56.8L174.1 46.5L173.4 46.1L173.6 46.5L173.6 46.6L173.6 46.6L173.6 46.7L173.6 46.8L173.6 46.8L173.6 46.9L173.6 47.0L173.6 47.0L173.6 47.1L173.5 47.1L167.5 56.7L167.5 56.8L167.4 56.9L167.4 56.9L167.3 56.9L167.3 57.0L167.2 57.0L167.2 57.0L167.1 57.1L167.0 57.1L167.0 57.1L166.9 57.1L166.8 57.1L166.8 57.1L166.7 57.0L164.7 56.4Z" fill="#c3571f"/><path d="M211.0 65.9L213.0 61.4L212.6 51.6L210.7 51.1L205.4 55.7L203.2 71.7L203.7 72.1Z" fill="#67590b"/><path d="M102.4 50.7L109.9 40.0L109.7 30.5L103.7 35.4L101.1 41.7Z" fill="#b2140e"/><path d="M230.5 52.8L227.7 59.1L228.3 63.5L233.5 64.5L239.3 57.4L239.3 48.3Z" fill="#6e5018"/><path d="M93.7 48.0L92.5 56.9L98.4 58.3L100.1 56.4L101.3 52.5L99.9 42.9Z" fill="#8e560c"/><path d="M190.5 12.9L194.6 14.0L200.8 0.7L192.8 0.7Z" fill="#b4221b"/><path d="M174.0 44.8L174.7 45.2L182.4 37.4L182.8 36.7L182.5 25.1L176.1 31.5Z" fill="#ee1721"/><path d="M141.5 25.3L149.8 22.6L153.1 7.7L141.5 18.8Z" fill="#a03c0d"/><path d="M93.4 70.9L88.1 75.3L84.3 87.7L84.4 89.5L87.6 89.9L95.1 79.2Z" fill="#435213"/><path d="M127.2 74.9L128.3 71.2L126.1 63.4L126.0 63.4L119.4 72.2L118.5 74.9L120.9 83.2Z" fill="#2be017"/><path d="M110.1 56.2L114.0 42.0L110.9 41.0L102.6 52.9L101.5 56.6L105.4 61.2L107.2 60.5Z" fill="#9a3818"/><path d="M151.3 40.2L147.9 36.9L142.5 42.4L139.4 51.0L140.1 57.2L146.9 52.2Z" fill="#be3805"/><path d="M166.7 0.7L156.2 0.7L155.3 4.7L161.7 8.6Z" fill="#aa251b"/><path d="M189.0 13.1L191.3 0.7L185.9 0.7L181.0 12.2L185.2 17.5Z" fill="#6f4714"/><path d="M111.8 13.0L113.2 22.4L119.0 18.3L121.7 10.4L120.0 2.2Z" fill="#c82426"/><path d="M111.3 39.7L114.6 40.8L119.2 35.9L122.2 23.7L119.5 19.7L113.3 24.1L111.0 29.1Z" fill="#f31f17"/><path d="M126.1 61.9L131.5 53.1L131.6 41.4L131.3 41.5L124.2 53.3Z" fill="#b6160b"/><path d="M239.3 29.4L239.3 13.8L233.5 17.5L231.8 19.9L230.0 24.2L233.0 36.3Z" fill="#694e13"/><path d="M193.9 53.2L192.3 65.8L193.0 66.1L203.1 54.4L202.6 49.8L197.4 48.9Z" fill="#5f5415"/><path d="M194.4 15.4L189.9 14.2L185.7 19.0L183.9 23.5L184.2 35.4L190.2 30.8L195.1 18.7Z" fill="#a62f1c"/><path d="M193.8 76.9L195.6 77.8L201.8 71.8L204.0 55.6L204.0 55.6L193.9 67.3Z" fill="#565f19"/><path d="M162.6 9.9L160.5 18.8L161.2 21.2L166.0 20.1L170.1 13.5L168.7 0.7L168.4 0.7Z" fill="#df2412"/><path d="M60.4 80.5L63.6 77.1L64.8 71.0L57.1 77.0Z" fill="#5b5601"/><path d="M122.3 37.6L127.5 34.7L134.3 17.3L132.3 15.3L123.6 23.9L120.6 36.0Z" fill="#dc3724"/><path d="M200.8 34.2L198.0 47.6L202.7 48.4L208.1 34.1L207.8 32.9Z" fill="#d71c26"/><path d="M226.3 92.1L221.4 98.0L220.8 107.3L227.2 107.3L227.6 103.7L227.6 103.6L227.6 103.6L227.6 103.5L227.7 103.4L227.7 103.4L227.7 103.3L227.8 103.3L227.8 103.2L228.5 102.7Z" fill="#418316"/><path d="M149.3 56.5L146.3 69.0L151.3 69.1L158.1 53.6Z" fill="#d42b18"/><path d="M76.8 68.6L68.3 79.8L67.7 85.3L72.0 88.8L74.8 85.1L79.2 68.8L79.1 68.6Z" fill="#61600d"/><path d="M179.8 81.8L180.7 80.5L182.6 74.3L181.7 69.1L175.1 71.9L172.8 75.7L173.0 85.9Z" fill="#a52a0b"/><path d="M73.4 22.4L80.1 7.4L80.3 3.6L70.3 12.8L69.6 16.1Z" fill="#617415"/><path d="M160.0 22.0L159.4 19.9L151.3 24.2L148.6 35.7L152.1 39.0L153.6 37.7Z" fill="#b43615"/><path d="M141.2 42.0L138.1 34.4L133.0 40.7L132.9 52.3L138.1 50.3Z" fill="#c02815"/><path d="M104.0 10.6L106.4 15.2L110.4 12.4L111.0 0.7L106.9 0.7Z" fill="#753d04"/><path d="M100.7 57.8L99.2 59.4L94.6 69.8L96.3 78.3L96.6 78.2L104.4 62.1Z" fill="#44f61c"/><path d="M233.8 15.7L239.3 12.2L239.3 0.7L235.0 0.7Z" fill="#b1300f"/><path d="M203.0 73.3L202.5 73.0L196.4 79.0L193.2 91.5L195.4 95.0L202.6 87.0Z" fill="#707208"/><path d="M162.1 84.0L166.0 76.8L165.9 67.8L163.8 67.1L156.3 77.1L155.5 85.4Z" fill="#d2190c"/><path d="M73.8 24.6L67.3 36.8L71.4 43.8L76.3 34.1L76.5 26.0Z" fill="#5a7d0d"/><path d="M213.4 16.2L209.0 32.1L209.3 33.3L216.0 30.8L216.2 30.6L219.0 19.6L215.0 14.8Z" fill="#6e4f06"/><path d="M86.7 13.6L87.5 13.4L90.1 0.7L82.3 0.7L81.8 2.0L81.5 7.4Z" fill="#885307"/><path d="M127.8 36.2L122.8 38.9L120.5 53.2L123.1 52.6L130.1 40.8Z" fill="#7f2d14"/><path d="M175.5 46.4L174.7 56.5L177.0 57.4L182.3 52.2L182.3 39.5Z" fill="#b61714"/><path d="M139.1 33.1L142.2 40.8L147.2 35.6L149.9 24.0L141.3 26.8Z" fill="#e94a0d"/><path d="M121.1 0.7L122.8 8.9L129.5 0.7Z" fill="#a93b0c"/><path d="M118.8 70.6L124.8 62.7L123.0 54.1L120.0 54.7L119.4 55.6L116.4 65.9Z" fill="#ef310c"/><path d="M117.5 76.4L110.2 85.6L110.2 94.2L119.7 85.5L119.9 84.8Z" fill="#e92a26"/><path d="M100.6 83.0L99.7 91.5L108.4 84.8L108.1 73.6Z" fill="#ee3823"/><path d="M99.8 26.8L105.4 16.3L103.1 11.9L98.4 16.1L96.7 23.3L98.8 27.3Z" fill="#bf5121"/><path d="M97.8 28.2L95.7 24.5L88.0 31.5L91.2 40.6Z" fill="#654807"/><path d="M221.2 43.2L214.0 51.3L214.4 60.1L219.5 56.0L222.2 45.2Z" fill="#73431b"/><path d="M230.8 39.9L231.9 37.6L229.0 25.7L223.8 32.8L222.1 41.9L223.3 44.1Z" fill="#4c5108"/><path d="M68.2 16.0L68.9 12.4L68.2 9.8L61.7 14.5L62.8 25.0Z" fill="#c42725"/><path d="M172.7 44.4L174.7 31.5L172.8 30.3L168.3 33.7Z" fill="#dc3b27"/><path d="M132.9 81.2L137.9 70.9L137.5 63.7L129.7 71.6L128.5 75.2L131.3 82.0Z" fill="#c51a28"/><path d="M111.9 10.5L119.3 0.7L112.4 0.7Z" fill="#92421c"/><path d="M135.4 94.5L141.0 99.7L143.9 94.9L144.8 85.4L140.5 85.3L136.9 90.1Z" fill="#cd3324"/><path d="M222.9 79.2L229.0 81.0L233.0 65.8L228.2 64.9Z" fill="#455f13"/><path d="M109.0 71.2L115.0 65.6L117.8 56.1L111.1 57.1L108.4 61.3Z" fill="#ef3a0f"/><path d="M171.3 12.4L173.1 11.2L177.2 0.7L170.1 0.7Z" fill="#e32a0c"/><path d="M91.4 152.5L92.8 152.4L103.2 144.7L96.2 140.7L93.5 142.1L88.4 151.0Z" fill="#ee5926"/><path d="M134.1 125.4L131.7 122.3L120.9 126.9L122.2 133.6L128.6 131.7Z" fill="#4a880a"/><path d="M70.3 105.5L60.4 111.9L60.4 112.2L67.1 114.7L71.9 113.8L77.3 108.9Z" fill="#3d6e0c"/><path d="M160.5 144.3L160.3 138.6L151.7 139.9L145.2 145.9L145.1 148.4Z" fill="#60820d"/><path d="M204.5 136.4L194.8 138.5L191.2 142.5L196.6 144.7L202.5 142.8L205.9 138.1Z" fill="#7b5309"/><path d="M150.0 116.2L158.5 114.6L161.1 112.5L160.3 105.4L150.7 107.2L147.4 115.2Z" fill="#cc2f17"/><path d="M113.0 149.5L113.5 149.1L107.5 144.4L104.8 145.2L94.2 153.1L96.6 155.0L98.7 154.9Z" fill="#63561e"/><path d="M56.9 132.1L63.4 125.4L58.1 123.4L50.4 125.6L51.9 133.5Z" fill="#468303"/><path d="M181.0 91.0L170.9 98.5L170.8 98.9L176.3 100.9L188.2 95.2L189.0 93.9L183.6 90.8Z" fill="#7b6e17"/><path d="M108.3 112.0L102.7 116.3L103.1 121.2L111.7 119.5L116.0 111.8Z" fill="#23e513"/><path d="M179.5 137.5L178.5 138.6L179.0 142.8L186.2 143.6L189.6 142.2L193.6 137.8L190.4 133.2L187.5 133.6Z" fill="#ef2610"/><path d="M167.8 159.9L172.9 157.2L175.4 153.5L168.6 150.9L162.9 152.1L161.7 153.0L163.3 159.5Z" fill="#4f6d01"/><path d="M90.8 111.9L92.4 109.5L86.5 106.3L78.9 109.3L73.2 114.5L75.7 117.6Z" fill="#537a1e"/><path d="M198.5 79.8L182.6 82.2L179.4 84.4L181.2 89.6L183.6 89.3L196.0 83.0Z" fill="#7b4a0f"/><path d="M130.6 114.3L115.4 121.2L116.5 125.7L120.0 125.8L131.5 120.9L133.0 119.2Z" fill="#5aa619"/><path d="M110.4 98.0L114.4 102.1L121.6 100.5L127.2 94.7L120.2 93.0Z" fill="#5c7d1b"/><path d="M159.7 115.4L161.0 118.2L174.0 116.6L177.7 113.8L177.7 113.8L174.2 109.5L162.2 113.4Z" fill="#be3c10"/><path d="M171.2 132.7L179.1 136.2L186.3 132.6L182.8 125.9Z" fill="#726f06"/><path d="M134.2 120.0L132.8 121.5L135.3 124.7L143.8 124.0L148.8 117.2L146.4 116.3Z" fill="#5b6c10"/><path d="M60.9 99.3L63.5 92.1L54.6 92.6L47.7 98.7L57.0 101.2Z" fill="#4a5f1a"/><path d="M195.0 101.4L193.8 102.4L192.3 106.6L198.5 109.3L200.7 109.0L205.9 105.0L206.0 101.3Z" fill="#4d7c1e"/><path d="M190.8 106.5L192.1 102.9L177.4 105.8L175.4 108.6L178.7 112.8Z" fill="#a91c1c"/><path d="M109.8 129.0L115.2 126.0L114.0 121.3L112.1 120.8L102.7 122.7L96.7 126.7L96.3 129.7Z" fill="#43a50a"/><path d="M216.7 94.1L207.4 100.9L207.3 104.5L218.5 102.7L219.4 102.1L221.0 93.9Z" fill="#558010"/><path d="M80.3 137.3L93.6 131.4L94.9 130.1L95.2 126.9L88.5 126.6L80.3 131.3L78.9 137.4Z" fill="#28e017"/><path d="M161.6 105.0L162.4 111.8L174.1 108.1L176.3 105.0L175.7 102.2L170.0 100.1Z" fill="#a12c1e"/><path d="M71.1 100.7L61.6 100.5L57.5 102.5L55.6 104.5L56.2 109.9L59.5 110.7L69.7 104.2Z" fill="#37d915"/><path d="M186.5 121.4L187.2 117.1L178.4 115.1L174.8 117.7L173.0 122.0L183.5 123.3Z" fill="#5e5714"/><path d="M102.2 96.7L100.3 97.1L88.2 104.3L87.6 105.3L93.4 108.5L97.3 107.1L105.8 98.3Z" fill="#4b7c01"/><path d="M84.6 142.1L92.8 140.9L95.6 139.4L93.6 132.9L81.6 138.3Z" fill="#66690a"/><path d="M77.5 87.1L71.0 88.4L65.0 91.8L62.4 99.1L71.9 99.3L72.2 99.2L79.0 89.1Z" fill="#486b0e"/><path d="M78.8 131.6L71.5 131.3L65.9 134.4L65.5 136.8L76.2 138.1L77.4 137.6Z" fill="#427913"/><path d="M107.3 98.7L99.3 107.0L107.1 107.0L113.1 102.7L109.0 98.5Z" fill="#5c790f"/><path d="M97.8 108.4L93.8 109.8L92.0 112.6L92.9 115.5L101.7 115.3L107.3 111.0L106.8 108.4Z" fill="#5f7816"/><path d="M197.8 127.8L204.6 126.7L213.1 119.4L200.0 120.1L199.2 120.6Z" fill="#66650f"/><path d="M202.6 93.5L213.7 91.4L214.5 83.8L214.5 83.7L201.3 89.9Z" fill="#557e1d"/><path d="M219.1 113.3L214.5 118.8L214.5 119.0L224.0 121.1L225.7 120.5L226.8 111.0Z" fill="#3e830b"/><path d="M114.1 84.7L120.6 86.9L133.7 81.2L134.5 76.7L127.4 76.7Z" fill="#b21719"/><path d="M54.8 110.0L54.3 105.2L47.0 107.9L47.9 112.7Z" fill="#23f000"/><path d="M65.6 115.7L59.8 113.5L49.6 121.5L50.1 124.2L57.8 122.0Z" fill="#48a019"/><path d="M153.4 128.4L146.3 128.1L136.0 133.9L135.8 136.6L140.1 137.4L147.8 134.8Z" fill="#646e0f"/><path d="M79.5 130.2L87.4 125.6L85.8 123.1L75.5 124.0L72.4 130.0Z" fill="#497404"/><path d="M129.1 133.0L121.9 135.1L120.2 136.6L124.7 142.0L134.4 136.8L134.6 134.1Z" fill="#458b04"/><path d="M190.4 94.2L189.6 95.6L194.8 99.7L201.3 94.0L199.9 90.2L199.5 90.2Z" fill="#5d590d"/><path d="M149.3 107.0L148.7 106.7L142.7 107.5L132.3 112.5L131.7 113.4L134.2 118.5L145.9 115.0Z" fill="#c1251b"/><path d="M155.0 127.5L163.3 127.2L171.5 122.1L173.1 118.1L160.9 119.6Z" fill="#c42e24"/><path d="M64.9 138.2L57.5 144.0L60.5 146.1L68.6 144.9L74.7 139.4Z" fill="#747c1b"/><path d="M159.8 93.9L156.1 95.8L149.8 105.6L150.3 105.9L160.6 103.9L169.4 98.8L169.5 98.4Z" fill="#8a6910"/><path d="M216.7 127.7L222.6 122.2L214.2 120.4L206.0 127.3L209.4 129.8Z" fill="#5a830d"/><path d="M125.4 106.9L125.1 107.4L131.8 111.2L141.6 106.5L139.0 100.4Z" fill="#876805"/><path d="M149.1 135.4L151.7 138.4L160.7 137.1L165.8 133.1L163.1 128.6L154.8 128.9Z" fill="#55860a"/><path d="M187.7 132.2L190.4 131.7L196.3 128.2L197.7 121.0L187.4 122.5L184.2 124.6L183.9 124.9Z" fill="#39e718"/><path d="M110.9 85.9L93.1 90.6L92.8 91.2L100.2 95.7L102.0 95.3Z" fill="#496601"/><path d="M81.9 152.5L73.5 157.0L75.5 162.8L89.9 153.3L87.3 152.1Z" fill="#8b4d11"/><path d="M216.5 135.8L220.3 132.8L216.8 129.1L209.7 131.2L205.7 135.7L207.1 137.4Z" fill="#3ea41d"/><path d="M161.8 145.2L163.1 150.6L168.4 149.5L177.7 143.1L177.2 139.4Z" fill="#806e19"/><path d="M130.8 112.2L124.2 108.5L117.7 111.6L113.2 119.7L114.5 120.0L130.4 112.9Z" fill="#569c1b"/><path d="M103.5 95.7L107.1 97.3L109.1 97.1L119.4 91.8L119.8 88.2L113.0 85.8Z" fill="#75591e"/><path d="M114.4 103.5L108.1 108.0L108.7 110.6L117.1 110.3L123.7 107.2L124.1 106.3L121.6 101.9Z" fill="#689415"/><path d="M120.8 91.7L128.5 93.6L131.7 92.5L137.2 84.0L134.3 82.4L121.3 88.2Z" fill="#9d2521"/><path d="M150.3 117.5L145.1 124.7L146.5 126.7L153.6 127.0L159.7 118.9L158.4 116.0Z" fill="#65641a"/><path d="M139.8 94.6L132.2 93.8L129.0 94.9L122.9 101.3L125.2 105.4L138.9 98.9L140.8 96.6Z" fill="#a52a1d"/><path d="M216.3 110.3L218.8 112.0L226.9 109.5L227.6 103.7L227.6 103.6L227.6 103.6L227.6 103.5L227.7 103.4L227.7 103.4L227.7 103.3L227.8 103.3L227.8 103.2L228.9 102.3L220.3 103.2L219.3 103.8Z" fill="#447506"/><path d="M78.1 148.4L71.2 149.3L66.9 153.9L68.2 156.2L72.4 156.0L80.7 151.6Z" fill="#2adf07"/><path d="M179.6 113.9L187.8 115.8L196.9 110.1L191.4 107.8Z" fill="#973c16"/><path d="M52.3 89.4L55.4 83.8L49.4 83.1L48.2 84.1L46.6 90.4Z" fill="#63690c"/><path d="M150.4 139.1L147.9 136.2L140.6 138.7L138.1 143.4L144.3 144.8Z" fill="#556d11"/><path d="M182.6 150.4L191.0 151.7L195.5 145.8L190.0 143.6L186.7 144.9Z" fill="#835d13"/><path d="M72.9 100.4L72.6 100.5L71.2 104.4L78.5 107.9L86.1 105.0L86.8 103.8L83.1 98.7Z" fill="#3d7017"/><path d="M206.8 106.0L201.9 109.8L203.9 112.4L215.0 110.0L217.5 104.2Z" fill="#588a06"/><path d="M170.2 150.0L176.4 152.4L180.9 150.3L185.0 144.9L178.6 144.2Z" fill="#6b5108"/><path d="M213.4 118.0L217.6 112.9L215.3 111.3L204.1 113.8L201.1 118.6Z" fill="#4c8304"/><path d="M70.8 130.1L74.2 123.5L73.7 123.1L65.0 125.7L58.8 132.3L65.2 133.3Z" fill="#468c1e"/><path d="M107.9 134.5L114.8 137.3L118.8 135.9L120.9 134.2L119.6 127.1L116.1 127.1L110.5 130.2Z" fill="#589005"/><path d="M208.3 130.7L204.7 128.1L197.1 129.3L191.7 132.6L194.8 137.1L204.4 135.0Z" fill="#606e18"/><path d="M87.1 122.5L88.8 125.2L95.8 125.6L101.7 121.7L101.3 116.7L92.7 116.9Z" fill="#47a206"/><path d="M182.3 124.6L172.2 123.3L164.5 128.1L167.1 132.5L169.4 132.1Z" fill="#d8301d"/><path d="M224.7 146.1L231.1 145.5L227.2 138.9L222.9 141.5Z" fill="#43a90a"/><path d="M91.7 142.5L84.5 143.5L79.4 147.8L82.0 151.1L87.0 150.7Z" fill="#7d6104"/><path d="M85.9 121.7L91.6 116.0L90.8 113.4L76.0 118.9L74.7 122.1L75.3 122.6Z" fill="#5a7f04"/><path d="M198.3 119.5L199.3 118.9L202.8 113.2L200.6 110.4L198.6 110.7L188.6 117.0L188.0 121.0Z" fill="#60550b"/><path d="M169.5 133.5L167.0 133.9L161.7 138.1L161.9 143.7L177.4 137.8L177.9 137.2Z" fill="#747e0c"/><path d="M74.7 118.5L71.9 115.2L67.3 116.1L59.5 122.5L64.7 124.4L73.3 121.7Z" fill="#65a207"/><path d="M197.0 146.1L192.1 152.6L192.4 153.3L195.6 153.8L206.9 148.9L207.8 146.5L202.9 144.1Z" fill="#34d819"/><path d="M97.6 139.9L104.6 143.8L107.3 143.0L113.4 138.3L106.9 135.6Z" fill="#458316"/><path d="M185.2 90.1L190.0 92.8L198.4 89.1L196.2 84.5Z" fill="#647104"/><path d="M76.7 139.5L69.8 145.7L71.3 147.9L78.1 147.0L83.3 142.7L80.1 138.7L78.2 138.8Z" fill="#827519"/><path d="M217.8 140.4L221.9 140.5L226.4 137.7L224.3 134.3L224.3 134.2L224.3 134.1L224.3 134.1L224.2 134.0L224.2 133.9L224.2 133.9L224.2 133.8L224.3 132.9L221.6 133.5L217.6 136.8Z" fill="#61ad19"/><path d="M224.4 122.4L218.1 128.3L221.5 132.1L224.5 131.4L225.5 122.0Z" fill="#65780e"/><path d="M54.5 103.7L55.7 102.3L46.3 99.8L45.5 100.1L46.7 106.5Z" fill="#38780a"/><path d="M96.8 138.7L106.4 134.3L108.7 130.5L95.8 131.1L94.9 132.2Z" fill="#578c02"/><path d="M139.1 138.6L135.2 137.9L125.1 143.4L123.9 145.4L128.0 146.9L136.6 143.4Z" fill="#52880e"/><path d="M177.6 104.4L192.9 101.3L193.7 100.6L188.6 96.6L177.1 102.1Z" fill="#7d5501"/><path d="M135.3 126.1L130.4 131.8L135.2 132.7L145.1 127.1L143.9 125.4Z" fill="#64880a"/><path d="M59.0 112.4L59.0 112.0L55.6 111.2L48.2 114.1L49.3 119.9Z" fill="#5a9f17"/><path d="M45.9 98.5L53.3 91.8L52.5 90.8L46.2 91.9L44.9 97.1L45.2 98.7Z" fill="#577513"/><path d="M196.5 100.0L206.5 99.9L215.2 93.5L214.1 92.7L202.4 94.9Z" fill="#3f6f0a"/><path d="M188.8 154.9L186.2 151.6L178.6 155.7L179.3 164.7L183.0 165.4Z" fill="#5b500d"/><path d="M166.6 165.4L159.7 166.5L156.1 170.9L155.7 179.3L163.7 176.7L167.4 171.4Z" fill="#5a8905"/><path d="M108.8 205.6L117.8 191.5L117.1 190.5L108.7 193.1L107.5 194.5L107.2 204.9L108.4 205.7Z" fill="#5ea10a"/><path d="M112.2 143.7L113.0 146.2L117.9 146.9L123.8 140.7L124.0 134.7L120.2 134.7Z" fill="#568d14"/><path d="M158.5 159.1L152.3 159.3L147.1 170.5L155.1 169.9L158.6 165.6Z" fill="#406510"/><path d="M139.6 162.8L130.2 171.4L130.1 171.8L130.7 173.0L140.8 176.8L144.8 171.4Z" fill="#567a06"/><path d="M74.7 221.1L74.7 212.0L67.7 213.9L65.5 224.8L66.7 225.4Z" fill="#716207"/><path d="M129.9 190.6L127.4 190.7L124.1 192.8L121.8 202.7L124.2 204.9L130.2 200.1L132.1 194.5Z" fill="#397b13"/><path d="M216.7 151.3L217.8 150.7L226.4 137.7L224.6 134.7L220.2 134.7L213.1 143.2L212.6 146.5Z" fill="#65780b"/><path d="M92.4 179.6L92.7 179.5L101.2 169.2L99.6 161.7L95.5 163.9L91.1 168.9Z" fill="#5e6203"/><path d="M106.4 206.0L96.7 209.0L96.1 210.2L96.9 219.7L98.8 220.5L101.1 219.7L107.4 206.8Z" fill="#549014"/><path d="M204.7 152.4L202.9 156.4L204.8 160.3L210.7 159.8L211.3 159.3L215.7 152.2L211.7 147.6Z" fill="#dd411d"/><path d="M128.8 171.1L126.3 166.1L121.4 166.4L115.7 171.7L114.2 177.7L119.5 179.6L128.7 171.5Z" fill="#538611"/><path d="M204.7 161.8L198.5 169.7L198.3 170.6L204.9 172.8L204.9 172.7L209.9 161.3Z" fill="#486708"/><path d="M35.4 213.8L34.8 214.6L29.5 227.7L31.9 227.1L37.6 220.6L37.3 215.4Z" fill="#526502"/><path d="M168.5 186.0L173.1 193.6L174.3 193.6L175.9 192.6L180.1 182.7L176.6 179.2L175.3 179.4Z" fill="#5e7607"/><path d="M61.0 142.9L59.2 138.6L52.6 143.9L51.2 151.4L56.9 150.2Z" fill="#5b6d11"/><path d="M168.5 172.2L164.9 177.4L166.5 185.4L167.2 185.2L174.1 178.6L172.0 172.0Z" fill="#5b8114"/><path d="M48.6 165.5L48.3 167.3L51.7 175.6L58.9 167.1L58.4 161.3Z" fill="#596f08"/><path d="M84.8 228.1L84.9 227.1L78.1 226.6L73.2 236.7L73.4 238.6L77.6 238.6Z" fill="#3b6413"/><path d="M119.0 190.9L123.4 191.6L126.5 189.6L129.5 173.7L129.1 173.0L120.3 180.8L118.2 189.6Z" fill="#3c9406"/><path d="M102.4 220.1L106.0 222.7L112.5 219.6L113.2 218.2L112.8 208.0L109.3 206.9L108.8 207.1Z" fill="#4a9100"/><path d="M176.5 193.9L175.1 194.8L170.6 208.0L171.4 208.4L180.2 203.4L181.3 195.8Z" fill="#627614"/><path d="M67.4 153.6L60.9 158.3L59.7 160.4L60.3 166.8L63.6 167.7L70.2 160.5L69.8 154.4Z" fill="#765c19"/><path d="M85.4 193.1L87.8 191.6L91.1 181.3L80.6 185.0L78.8 191.3Z" fill="#e9301b"/><path d="M192.1 180.8L192.1 180.8L192.2 180.8L192.3 180.8L192.3 180.7L203.0 176.5L204.1 174.0L197.7 171.8L191.8 179.1Z" fill="#667617"/><path d="M153.4 188.3L154.0 181.6L144.8 185.7L142.5 191.6L143.9 196.5L146.9 196.9Z" fill="#4ea108"/><path d="M64.3 173.5L63.2 169.1L59.9 168.1L52.3 177.0L54.6 182.4Z" fill="#47711e"/><path d="M56.9 151.6L51.0 152.9L48.9 163.9L58.5 159.7L59.6 157.8Z" fill="#495616"/><path d="M66.9 232.7L72.2 235.6L77.0 225.9L75.9 222.4L75.5 222.3L67.4 226.6Z" fill="#717802"/><path d="M143.5 185.2L140.7 179.6L131.2 190.0L133.1 193.5L141.2 191.0Z" fill="#49a011"/><path d="M162.4 190.6L159.9 198.3L162.8 200.2L171.7 194.1L167.2 186.6L166.2 186.8Z" fill="#1ee30d"/><path d="M77.3 191.4L79.3 184.5L77.7 181.8L71.8 184.0L68.6 192.1L72.9 191.3L73.0 191.3L73.1 191.3L73.1 191.3L73.2 191.3L73.3 191.4L73.3 191.4L73.4 191.4L73.4 191.4L73.5 191.5L73.5 191.5L73.6 191.6L73.6 191.6L73.7 191.7L73.7 191.8L73.7 191.8L73.7 191.9L73.7 192.0L73.7 192.0L73.7 192.1L73.7 192.2L73.0 196.0Z" fill="#55650f"/><path d="M59.6 216.0L55.9 222.6L55.9 223.1L61.9 225.8L64.1 224.7L66.3 213.5L65.9 212.9Z" fill="#804b1e"/><path d="M85.0 156.0L82.4 154.9L75.2 162.0L75.5 168.1L81.4 167.7Z" fill="#e2230d"/><path d="M177.7 178.3L181.0 181.6L186.8 178.0L186.9 169.1L184.1 168.2Z" fill="#4b6510"/><path d="M112.8 221.0L106.5 224.0L103.8 232.0L109.7 235.5L116.2 226.5Z" fill="#506a0b"/><path d="M91.6 194.5L90.8 202.6L95.0 203.3L100.4 195.4L98.7 191.2Z" fill="#477f03"/><path d="M193.7 154.6L195.7 158.6L201.6 155.9L203.3 152.0L200.1 147.1Z" fill="#8f511c"/><path d="M160.8 154.8L161.1 146.5L155.1 149.6L152.3 157.8L152.3 157.9L158.8 157.7Z" fill="#556207"/><path d="M201.8 157.3L195.9 160.0L194.3 164.0L197.8 168.2L203.5 161.0Z" fill="#9b3b17"/><path d="M216.8 164.9L224.3 158.6L224.0 154.7L218.3 152.0L217.1 152.7L212.7 159.7Z" fill="#4e9a0a"/><path d="M146.5 198.3L143.6 197.9L136.3 205.2L135.5 207.9L142.7 208.9Z" fill="#46b30a"/><path d="M112.4 160.0L118.2 155.6L117.5 148.3L112.8 147.6L107.7 156.9Z" fill="#6a8107"/><path d="M191.9 182.6L185.7 193.1L191.9 193.8L193.7 192.3L192.1 182.7Z" fill="#487605"/><path d="M91.0 179.8L89.7 169.5L83.6 170.8L78.8 180.9L80.4 183.6Z" fill="#a3140a"/><path d="M121.0 203.8L114.2 207.9L114.5 216.9L122.8 209.8L123.4 206.0Z" fill="#61940a"/><path d="M112.8 177.7L114.2 171.6L109.7 168.6L107.2 170.5L104.0 181.3L109.0 180.8Z" fill="#469300"/><path d="M70.5 183.6L68.2 181.5L57.6 190.7L59.2 193.6L67.0 192.3Z" fill="#59620d"/><path d="M49.5 231.5L54.6 223.4L54.5 223.1L46.7 222.0L45.4 223.1L43.4 230.9L44.5 232.9Z" fill="#86471b"/><path d="M93.7 232.6L97.9 235.9L102.3 231.9L105.1 223.8L101.4 221.1L99.3 221.8Z" fill="#5a7304"/><path d="M200.9 145.9L204.3 150.9L211.2 146.3L211.6 143.2L207.7 140.2L201.4 144.1Z" fill="#c12623"/><path d="M102.4 181.5L105.7 170.6L102.2 170.1L94.4 179.7Z" fill="#558401"/><path d="M148.2 197.6L154.6 200.8L158.4 198.2L160.9 190.8L154.3 189.4Z" fill="#3d7c1e"/><path d="M43.3 238.6L53.2 238.6L53.4 237.6L49.7 232.9L44.8 234.3Z" fill="#64750b"/><path d="M83.5 169.4L90.0 168.1L94.2 163.2L89.9 154.1L86.5 156.1L82.7 168.3Z" fill="#f32018"/><path d="M87.5 223.9L95.5 219.7L94.8 211.4L88.3 216.3Z" fill="#41860e"/><path d="M140.2 178.0L130.7 174.5L128.0 189.3L130.0 189.2Z" fill="#576f03"/><path d="M80.0 205.7L84.9 206.5L89.3 202.8L90.2 194.4L88.4 192.9L86.0 194.3L80.0 204.5Z" fill="#3d7e03"/><path d="M118.8 180.8L113.5 178.9L110.0 181.8L109.1 191.5L116.8 189.1Z" fill="#42aa05"/><path d="M103.0 233.2L98.5 237.2L98.1 238.6L107.4 238.6L108.9 236.6Z" fill="#467a0d"/><path d="M82.3 170.3L81.6 169.1L75.1 169.5L69.1 175.4L69.0 180.2L71.5 182.6L77.5 180.4Z" fill="#757102"/><path d="M66.8 211.8L67.3 212.5L75.1 210.5L78.6 206.1L78.6 204.7L72.1 200.1L70.8 206.8L70.8 206.9L70.8 206.9L70.7 207.0L70.7 207.1L70.7 207.1L70.6 207.2L70.6 207.2L70.5 207.2L70.4 207.3L70.4 207.3L70.3 207.3L70.2 207.3L67.7 207.8Z" fill="#608a0b"/><path d="M146.2 171.9L146.2 171.9L141.7 177.9L141.7 178.2L144.6 184.3L154.2 180.0L154.7 171.4Z" fill="#426616"/><path d="M134.0 152.6L132.3 153.6L127.5 165.4L129.8 169.8L139.2 161.3L141.0 157.9L141.3 154.1Z" fill="#566314"/><path d="M65.5 232.8L66.0 226.6L64.7 226.0L62.4 227.1L54.8 237.6L54.6 238.6L60.8 238.6Z" fill="#1fd708"/><path d="M47.5 220.7L54.8 221.7L58.3 215.6L53.9 210.1L52.8 210.3Z" fill="#72511c"/><path d="M106.0 195.1L101.6 196.1L96.1 204.2L96.7 207.5L105.8 204.8Z" fill="#457408"/><path d="M56.3 191.1L54.2 190.7L47.4 199.1L49.3 206.7L51.8 207.7L54.4 194.9L54.4 194.8L54.4 194.7L54.5 194.7L54.5 194.6L54.5 194.6L54.6 194.5L54.6 194.5L54.7 194.4L54.8 194.4L54.8 194.4L54.9 194.3L55.0 194.3L57.8 193.9Z" fill="#59630f"/><path d="M56.5 189.7L67.6 180.2L67.7 175.6L65.2 174.6L55.1 183.8L56.5 187.2L56.6 187.2L56.6 187.3L56.6 187.4L56.6 187.4L56.6 187.5L56.6 187.6L56.6 187.6L56.5 187.7L56.5 187.8L56.5 187.8L56.4 187.9L55.2 189.4Z" fill="#475712"/><path d="M84.3 215.4L77.2 222.0L78.2 225.2L85.3 225.7L86.0 224.8L86.9 216.4Z" fill="#3a801a"/><path d="M177.2 156.2L172.1 159.2L167.9 164.8L168.7 170.8L172.2 170.6L178.0 165.0Z" fill="#587613"/><path d="M33.4 235.2L31.8 228.6L28.9 229.3L25.1 238.6L31.4 238.6Z" fill="#536508"/><path d="M192.7 194.9L189.9 202.4L191.2 204.3L194.8 199.0L194.0 193.9Z" fill="#5e7209"/><path d="M153.7 201.9L147.7 198.9L144.1 209.1L150.5 210.1Z" fill="#467a1b"/><path d="M123.4 211.1L114.5 218.8L113.8 220.1L117.1 225.3L120.6 220.6L124.7 212.3Z" fill="#5e9317"/><path d="M181.6 203.7L181.9 204.0L188.6 201.9L191.2 195.1L184.7 194.4L182.7 195.8Z" fill="#599511"/><path d="M152.2 209.4L161.0 203.6L161.0 203.6L161.1 203.5L161.1 203.5L161.2 203.5L161.3 203.5L161.3 203.5L161.4 203.5L161.5 203.5L161.5 203.5L161.6 203.5L161.7 203.6L161.9 203.7L162.1 201.4L159.0 199.5L155.2 202.0Z" fill="#5a981a"/><path d="M73.8 162.2L71.1 161.6L64.6 168.7L65.6 173.3L68.3 174.3L74.1 168.6Z" fill="#f01b0f"/><path d="M148.7 145.8L142.7 153.7L142.4 157.4L151.0 157.2L153.7 149.4Z" fill="#535b1d"/><path d="M184.0 193.2L190.9 181.5L190.4 179.5L187.7 179.1L181.5 183.0L177.4 192.7L181.9 194.6Z" fill="#3e6819"/><path d="M211.7 160.8L211.6 160.9L206.6 172.5L211.5 172.6L214.3 167.1L214.3 167.0L214.3 166.9L214.4 166.9L214.4 166.8L215.7 165.8Z" fill="#47990a"/><path d="M119.8 156.3L121.7 165.0L126.3 164.7L130.9 153.4L128.1 151.9Z" fill="#405b15"/><path d="M51.5 209.8L51.5 209.8L51.4 209.7L51.4 209.7L51.4 209.6L51.5 209.5L51.5 209.1L48.8 208.0L38.7 215.4L39.0 220.3L44.6 221.9L45.9 220.8Z" fill="#544e15"/><path d="M59.3 214.6L65.4 211.5L66.2 208.0L55.5 209.8Z" fill="#6d6c01"/><path d="M89.4 234.1L85.5 229.5L79.3 238.6L86.4 238.6Z" fill="#427506"/><path d="M184.3 166.8L187.4 167.8L192.9 163.7L194.6 159.5L192.4 155.3L190.0 155.5L184.2 166.3Z" fill="#606a08"/><path d="M205.8 173.8L205.6 174.0L204.9 175.7L207.2 174.8L207.2 174.8L207.3 174.8L207.4 174.8L207.4 174.7L207.5 174.8L207.6 174.8L207.6 174.8L207.7 174.8L207.8 174.8L207.8 174.9L207.9 174.9L207.9 175.0L208.0 175.0L208.0 175.1L208.0 175.1L208.1 175.2L208.1 175.3L208.1 175.3L208.6 178.4L210.8 174.0Z" fill="#3b831d"/><path d="M46.3 200.4L36.3 212.7L38.0 214.2L47.9 207.0Z" fill="#516106"/><path d="M102.5 168.8L106.4 169.3L109.2 167.3L111.6 161.2L106.7 157.9L100.9 161.2Z" fill="#616d18"/><path d="M118.9 147.9L119.5 154.9L127.4 150.6L128.4 142.8L124.7 141.8Z" fill="#607e15"/><path d="M68.7 142.8L62.3 143.6L58.1 150.8L60.6 156.7L66.6 152.4Z" fill="#665216"/><path d="M44.0 223.2L38.5 221.7L33.0 227.9L34.6 234.3L42.0 230.5Z" fill="#686305"/><path d="M79.1 203.3L84.4 194.3L78.2 192.6L72.4 198.6L72.4 198.6Z" fill="#678e1b"/><path d="M90.2 203.9L85.7 207.6L84.9 214.1L87.5 215.1L94.9 209.6L95.5 208.3L94.7 204.7Z" fill="#4d811d"/><path d="M173.5 195.0L172.9 195.0L163.5 201.4L163.2 204.3L169.3 207.4Z" fill="#638d0a"/><path d="M101.7 182.8L93.2 180.8L92.6 181.1L89.2 191.8L91.0 193.2L98.5 189.8Z" fill="#5d6d1a"/><path d="M155.5 180.9L154.8 188.0L161.6 189.5L165.2 185.9L163.6 178.2Z" fill="#4c6918"/><path d="M142.5 197.0L141.3 192.4L133.4 194.9L131.6 200.2L135.7 203.9Z" fill="#5e9303"/><path d="M113.3 206.7L120.4 202.5L122.7 192.9L118.9 192.3L110.3 205.8Z" fill="#45a416"/><path d="M43.4 233.8L42.4 231.9L34.7 235.8L33.0 238.6L41.8 238.6Z" fill="#666007"/><path d="M118.5 157.1L113.0 161.3L110.6 167.5L115.0 170.5L120.4 165.5Z" fill="#446106"/><path d="M76.1 221.0L76.2 221.1L83.5 214.3L84.3 207.8L79.6 207.1L76.2 211.4Z" fill="#1ff105"/><path d="M180.9 205.0L180.7 204.8L172.9 209.2L179.8 212.6Z" fill="#3a6a11"/><path d="M181.1 213.3L181.3 213.4L189.3 207.0L190.3 205.5L188.8 203.3L182.3 205.3Z" fill="#20eb1a"/><path d="M178.9 166.0L173.3 171.4L175.4 178.0L176.4 177.8L183.0 167.3L182.9 166.8Z" fill="#458600"/><path d="M50.8 232.0L54.1 236.2L60.9 226.8L55.6 224.5Z" fill="#845607"/><path d="M86.3 226.7L86.2 228.1L90.4 233.1L92.3 232.2L97.8 221.6L96.3 220.9L87.1 225.6Z" fill="#5f8319"/><path d="M97.1 237.1L92.7 233.6L90.7 234.6L88.0 238.6L96.6 238.6Z" fill="#3e5d19"/><path d="M108.5 182.3L103.3 182.7L103.3 182.7L99.8 190.3L101.6 194.7L106.4 193.6L107.7 192.2Z" fill="#438411"/><path d="M134.9 205.0L130.7 201.4L124.8 206.2L124.2 209.9L125.3 211.0L127.2 207.2L127.3 207.2L127.3 207.1L127.4 207.1L127.4 207.0L127.5 207.0L127.5 206.9L127.6 206.9L127.6 206.9L127.7 206.9L127.8 206.8L127.8 206.8L127.9 206.8L128.0 206.8L134.1 207.7Z" fill="#1fde12"/><path d="M145.7 170.1L151.1 158.6L142.1 158.8L140.6 161.7Z" fill="#2be301"/><path d="M188.3 169.0L188.2 177.8L190.7 178.1L196.9 170.7L197.1 169.6L193.4 165.1Z" fill="#626409"/><path d="M71.9 237.0L66.4 234.0L62.6 238.6L72.0 238.6Z" fill="#3f5a15"/><ellipse cx="22" cy="182" rx="20" ry="3.2" fill="#58c010" transform="rotate(15 22 182)"/><ellipse cx="14" cy="146" rx="12" ry="3.5" fill="#58e910" transform="rotate(-65 14 146)"/><ellipse cx="36" cy="160" rx="10" ry="3.5" fill="#2ada10" transform="rotate(-50 36 160)"/><ellipse cx="30" cy="232" rx="12" ry="3.5" fill="#28cf10" transform="rotate(-20 30 232)"/><ellipse cx="48" cy="196" rx="12" ry="3" fill="#38f110" transform="rotate(-75 48 196)"/><ellipse cx="12" cy="176" rx="8" ry="3" fill="#59c810" transform="rotate(-40 12 176)"/><ellipse cx="12" cy="160" rx="16" ry="2.5" fill="#45fe10" transform="rotate(-60 12 160)"/><ellipse cx="30" cy="172" rx="14" ry="3" fill="#25ed10" transform="rotate(20 30 172)"/><ellipse cx="25" cy="130" rx="10" ry="3" fill="#51e910" transform="rotate(-70 25 130)"/><ellipse cx="10" cy="120" rx="9" ry="2.5" fill="#37de10" transform="rotate(-50 10 120)"/><ellipse cx="44" cy="138" rx="8" ry="3" fill="#3bef10" transform="rotate(-40 44 138)"/><ellipse cx="52" cy="212" rx="17" ry="2.6" fill="#32df10" transform="rotate(-85 52 212)"/><ellipse cx="28" cy="150" rx="9" ry="3" fill="#4ebe10" transform="rotate(-60 28 150)"/><ellipse cx="8" cy="195" rx="18" ry="2.2" fill="#3edd10" transform="rotate(-70 8 195)"/><ellipse cx="16" cy="205" rx="15" ry="2.5" fill="#55cd10" transform="rotate(-75 16 205)"/><ellipse cx="40" cy="190" rx="7" ry="2.5" fill="#29f810" transform="rotate(-30 40 190)"/><ellipse cx="20" cy="222" rx="10" ry="3" fill="#24fc10" transform="rotate(-40 20 222)"/><ellipse cx="60" cy="228" rx="9" ry="3" fill="#4ee310" transform="rotate(-50 60 228)"/><ellipse cx="8" cy="232" rx="7" ry="2.5" fill="#20dd10" transform="rotate(-30 8 232)"/><ellipse cx="45" cy="170" rx="7" ry="2.5" fill="#1fc310" transform="rotate(10 45 170)"/><ellipse cx="35" cy="205" rx="8" ry="2.5" fill="#43d310" transform="rotate(-60 35 205)"/><ellipse cx="225" cy="120" rx="12" ry="3.5" fill="#55ee10" transform="rotate(-50 225 120)"/><ellipse cx="232" cy="150" rx="13" ry="3.5" fill="#44fa10" transform="rotate(-70 232 150)"/><ellipse cx="222" cy="175" rx="12" ry="3" fill="#58fd10" transform="rotate(-60 222 175)"/><ellipse cx="234" cy="200" rx="9" ry="3" fill="#56c910" transform="rotate(-50 234 200)"/><ellipse cx="215" cy="200" rx="9" ry="2.5" fill="#3ff910" transform="rotate(40 215 200)"/><ellipse cx="228" cy="95" rx="10" ry="3" fill="#3fc410" transform="rotate(-30 228 95)"/><ellipse cx="236" cy="70" rx="8" ry="3" fill="#3fe510" transform="rotate(-60 236 70)"/><ellipse cx="205" cy="170" rx="12" ry="3" fill="#3ec610" transform="rotate(-65 205 170)"/><ellipse cx="196" cy="195" rx="10" ry="3" fill="#36d010" transform="rotate(-70 196 195)"/><ellipse cx="226" cy="232" rx="8" ry="2" fill="#4fe310" transform="rotate(30 226 232)"/><ellipse cx="150" cy="225" rx="9" ry="2.5" fill="#3de910" transform="rotate(-80 150 225)"/><ellipse cx="128" cy="225" rx="9" ry="2.5" fill="#36eb10" transform="rotate(-70 128 225)"/><ellipse cx="160" cy="235" rx="6" ry="2" fill="#2cc010" transform="rotate(-70 160 235)"/><circle cx="3" cy="52" r="1.6" fill="#c03010"/><circle cx="5" cy="48" r="1.6" fill="#c03010"/><circle cx="29" cy="123" r="1.6" fill="#c03010"/><circle cx="90" cy="150" r="1.6" fill="#c03010"/></g>
<g fill="#4848e8" filter="url(#b0)"><circle cx="132.8" cy="60.5" r="1.25"/><circle cx="225.2" cy="50.3" r="1.25"/><circle cx="143.6" cy="63.4" r="1.25"/><circle cx="80.3" cy="55.3" r="1.25"/><circle cx="167.5" cy="85.6" r="1.25"/><circle cx="61.9" cy="87.4" r="1.25"/><circle cx="180.0" cy="4.5" r="1.25"/><circle cx="172.2" cy="66.5" r="1.25"/><circle cx="75.0" cy="1.6" r="1.25"/><circle cx="147.6" cy="6.4" r="1.25"/><circle cx="81.4" cy="26.1" r="1.25"/><circle cx="133.7" cy="30.0" r="1.25"/><circle cx="208.7" cy="76.4" r="1.25"/><circle cx="105.9" cy="24.8" r="1.25"/><circle cx="100.8" cy="7.6" r="1.25"/><circle cx="194.2" cy="43.2" r="1.25"/><circle cx="231.8" cy="91.5" r="1.25"/><circle cx="236.2" cy="42.9" r="1.25"/><circle cx="196.6" cy="29.1" r="1.25"/><circle cx="67.3" cy="26.6" r="1.25"/><circle cx="64.0" cy="6.5" r="1.25"/><circle cx="153.7" cy="48.3" r="1.25"/><circle cx="81.5" cy="79.0" r="1.25"/><circle cx="69.8" cy="69.5" r="1.25"/><circle cx="85.4" cy="42.6" r="1.25"/><circle cx="91.8" cy="64.9" r="1.25"/><circle cx="117.0" cy="48.9" r="1.25"/><circle cx="156.7" cy="93.6" r="1.25"/><circle cx="80.0" cy="16.6" r="1.25"/><circle cx="222.1" cy="88.3" r="1.25"/><circle cx="93.0" cy="20.5" r="1.25"/><circle cx="126.7" cy="11.2" r="1.25"/><circle cx="94.5" cy="89.0" r="1.25"/><circle cx="161.0" cy="31.7" r="1.25"/><circle cx="223.8" cy="22.0" r="1.25"/><circle cx="78.7" cy="39.8" r="1.25"/><circle cx="156.2" cy="14.2" r="1.25"/><circle cx="236.2" cy="70.9" r="1.25"/><circle cx="179.5" cy="63.1" r="1.25"/><circle cx="138.6" cy="78.9" r="1.25"/><circle cx="188.5" cy="76.0" r="1.25"/><circle cx="113.1" cy="74.0" r="1.25"/><circle cx="158.3" cy="65.8" r="1.25"/><circle cx="186.8" cy="42.0" r="1.25"/><circle cx="188.1" cy="62.7" r="1.25"/><circle cx="164.5" cy="99.4" r="1.25"/><circle cx="94.3" cy="1.2" r="1.25"/><circle cx="103.1" cy="73.2" r="1.25"/><circle cx="221.5" cy="71.3" r="1.25"/><circle cx="216.6" cy="41.5" r="1.25"/><circle cx="206.6" cy="25.6" r="1.25"/><circle cx="178.2" cy="21.5" r="1.25"/><circle cx="97.5" cy="37.3" r="1.25"/><circle cx="221.6" cy="9.4" r="1.25"/><circle cx="171.7" cy="22.1" r="1.25"/><circle cx="149.3" cy="85.4" r="1.25"/><circle cx="139.6" cy="3.1" r="1.25"/><circle cx="202.6" cy="6.9" r="1.25"/><circle cx="145.3" cy="78.1" r="1.25"/><circle cx="230.0" cy="9.3" r="1.25"/><circle cx="87.5" cy="56.9" r="1.25"/><circle cx="169.3" cy="56.5" r="1.25"/><circle cx="209.4" cy="60.5" r="1.25"/><circle cx="105.2" cy="41.2" r="1.25"/><circle cx="233.8" cy="56.6" r="1.25"/><circle cx="96.9" cy="51.1" r="1.25"/><circle cx="196.8" cy="2.5" r="1.25"/><circle cx="147.8" cy="17.3" r="1.25"/><circle cx="91.1" cy="78.5" r="1.25"/><circle cx="123.1" cy="74.0" r="1.25"/><circle cx="145.1" cy="46.4" r="1.25"/><circle cx="161.9" cy="1.4" r="1.25"/><circle cx="185.7" cy="7.6" r="1.25"/><circle cx="117.7" cy="10.6" r="1.25"/><circle cx="115.8" cy="30.9" r="1.25"/><circle cx="234.7" cy="26.3" r="1.25"/><circle cx="196.5" cy="57.3" r="1.25"/><circle cx="188.0" cy="25.7" r="1.25"/><circle cx="197.8" cy="67.5" r="1.25"/><circle cx="166.2" cy="11.1" r="1.25"/><circle cx="127.3" cy="27.9" r="1.25"/><circle cx="202.8" cy="39.8" r="1.25"/><circle cx="224.1" cy="101.5" r="1.25"/><circle cx="150.7" cy="61.3" r="1.25"/><circle cx="72.4" cy="80.5" r="1.25"/><circle cx="176.9" cy="76.5" r="1.25"/><circle cx="74.9" cy="13.4" r="1.25"/><circle cx="153.9" cy="28.6" r="1.25"/><circle cx="136.2" cy="44.4" r="1.25"/><circle cx="107.8" cy="6.8" r="1.25"/><circle cx="98.4" cy="69.1" r="1.25"/><circle cx="237.6" cy="3.6" r="1.25"/><circle cx="198.2" cy="85.4" r="1.25"/><circle cx="161.1" cy="77.2" r="1.25"/><circle cx="72.8" cy="33.6" r="1.25"/><circle cx="213.8" cy="24.4" r="1.25"/><circle cx="86.4" cy="4.4" r="1.25"/><circle cx="124.7" cy="44.9" r="1.25"/><circle cx="179.3" cy="48.9" r="1.25"/><circle cx="144.5" cy="31.7" r="1.25"/><circle cx="125.1" cy="1.2" r="1.25"/><circle cx="120.3" cy="62.0" r="1.25"/><circle cx="115.2" cy="85.0" r="1.25"/><circle cx="104.8" cy="82.2" r="1.25"/><circle cx="100.7" cy="18.5" r="1.25"/><circle cx="92.9" cy="31.6" r="1.25"/><circle cx="217.6" cy="52.2" r="1.25"/><circle cx="227.4" cy="36.2" r="1.25"/><circle cx="62.9" cy="18.3" r="1.25"/><circle cx="170.4" cy="39.4" r="1.25"/><circle cx="133.3" cy="74.0" r="1.25"/><circle cx="115.3" cy="0.5" r="1.25"/><circle cx="141.2" cy="91.1" r="1.25"/><circle cx="228.0" cy="72.8" r="1.25"/><circle cx="113.1" cy="62.7" r="1.25"/><circle cx="173.8" cy="2.5" r="1.25"/><circle cx="95.7" cy="145.5" r="1.25"/><circle cx="127.8" cy="128.0" r="1.25"/><circle cx="68.9" cy="109.9" r="1.25"/><circle cx="153.2" cy="143.0" r="1.25"/><circle cx="199.0" cy="140.8" r="1.25"/><circle cx="155.2" cy="110.9" r="1.25"/><circle cx="105.5" cy="149.4" r="1.25"/><circle cx="57.5" cy="127.3" r="1.25"/><circle cx="182.4" cy="95.6" r="1.25"/><circle cx="109.3" cy="115.4" r="1.25"/><circle cx="185.7" cy="139.7" r="1.25"/><circle cx="167.9" cy="155.5" r="1.25"/><circle cx="82.2" cy="112.7" r="1.25"/><circle cx="188.5" cy="84.2" r="1.25"/><circle cx="124.0" cy="120.0" r="1.25"/><circle cx="117.2" cy="97.9" r="1.25"/><circle cx="168.4" cy="114.7" r="1.25"/><circle cx="178.9" cy="131.1" r="1.25"/><circle cx="141.1" cy="121.6" r="1.25"/><circle cx="55.0" cy="96.8" r="1.25"/><circle cx="199.7" cy="104.4" r="1.25"/><circle cx="184.1" cy="106.9" r="1.25"/><circle cx="106.4" cy="126.5" r="1.25"/><circle cx="213.6" cy="100.5" r="1.25"/><circle cx="85.0" cy="131.9" r="1.25"/><circle cx="167.5" cy="106.8" r="1.25"/><circle cx="61.9" cy="105.6" r="1.25"/><circle cx="180.5" cy="119.5" r="1.25"/><circle cx="98.0" cy="102.2" r="1.25"/><circle cx="88.7" cy="138.5" r="1.25"/><circle cx="70.9" cy="94.2" r="1.25"/><circle cx="73.3" cy="134.4" r="1.25"/><circle cx="106.8" cy="103.3" r="1.25"/><circle cx="100.3" cy="112.1" r="1.25"/><circle cx="204.4" cy="122.8" r="1.25"/><circle cx="207.1" cy="90.2" r="1.25"/><circle cx="223.4" cy="115.9" r="1.25"/><circle cx="125.2" cy="81.9" r="1.25"/><circle cx="48.6" cy="110.0" r="1.25"/><circle cx="57.9" cy="118.3" r="1.25"/><circle cx="142.4" cy="133.3" r="1.25"/><circle cx="79.1" cy="127.2" r="1.25"/><circle cx="128.0" cy="137.2" r="1.25"/><circle cx="195.8" cy="94.6" r="1.25"/><circle cx="165.2" cy="121.7" r="1.25"/><circle cx="66.3" cy="141.7" r="1.25"/><circle cx="158.5" cy="99.8" r="1.25"/><circle cx="213.2" cy="125.2" r="1.25"/><circle cx="135.1" cy="105.1" r="1.25"/><circle cx="156.8" cy="134.3" r="1.25"/><circle cx="191.0" cy="125.9" r="1.25"/><circle cx="79.1" cy="157.2" r="1.25"/><circle cx="170.8" cy="144.5" r="1.25"/><circle cx="120.7" cy="114.5" r="1.25"/><circle cx="112.1" cy="92.1" r="1.25"/><circle cx="115.1" cy="106.9" r="1.25"/><circle cx="128.6" cy="87.9" r="1.25"/><circle cx="151.9" cy="121.5" r="1.25"/><circle cx="131.3" cy="99.7" r="1.25"/><circle cx="222.9" cy="106.8" r="1.25"/><circle cx="73.9" cy="152.0" r="1.25"/><circle cx="188.9" cy="112.1" r="1.25"/><circle cx="143.5" cy="141.1" r="1.25"/><circle cx="189.2" cy="148.1" r="1.25"/><circle cx="78.9" cy="103.0" r="1.25"/><circle cx="210.7" cy="108.4" r="1.25"/><circle cx="177.9" cy="148.0" r="1.25"/><circle cx="209.2" cy="115.2" r="1.25"/><circle cx="66.5" cy="128.4" r="1.25"/><circle cx="113.9" cy="132.8" r="1.25"/><circle cx="200.8" cy="132.6" r="1.25"/><circle cx="94.9" cy="120.0" r="1.25"/><circle cx="228.7" cy="140.7" r="1.25"/><circle cx="85.3" cy="146.4" r="1.25"/><circle cx="83.9" cy="118.4" r="1.25"/><circle cx="195.0" cy="116.0" r="1.25"/><circle cx="168.9" cy="138.3" r="1.25"/><circle cx="66.1" cy="120.8" r="1.25"/><circle cx="200.0" cy="148.2" r="1.25"/><circle cx="192.7" cy="88.9" r="1.25"/><circle cx="77.4" cy="144.0" r="1.25"/><circle cx="223.4" cy="136.9" r="1.25"/><circle cx="225.2" cy="127.5" r="1.25"/><circle cx="46.8" cy="103.8" r="1.25"/><circle cx="101.9" cy="133.5" r="1.25"/><circle cx="185.9" cy="100.3" r="1.25"/><circle cx="137.1" cy="128.7" r="1.25"/><circle cx="50.5" cy="115.7" r="1.25"/><circle cx="45.1" cy="94.6" r="1.25"/><circle cx="205.0" cy="96.9" r="1.25"/><circle cx="183.1" cy="159.5" r="1.25"/><circle cx="111.1" cy="197.2" r="1.25"/><circle cx="119.0" cy="140.5" r="1.25"/><circle cx="153.1" cy="164.1" r="1.25"/><circle cx="139.0" cy="169.8" r="1.25"/><circle cx="71.0" cy="217.5" r="1.25"/><circle cx="126.9" cy="198.4" r="1.25"/><circle cx="218.5" cy="141.8" r="1.25"/><circle cx="96.7" cy="170.6" r="1.25"/><circle cx="100.5" cy="212.4" r="1.25"/><circle cx="207.6" cy="154.5" r="1.25"/><circle cx="119.9" cy="172.8" r="1.25"/><circle cx="203.8" cy="167.5" r="1.25"/><circle cx="31.7" cy="221.6" r="1.25"/><circle cx="174.1" cy="185.6" r="1.25"/><circle cx="55.8" cy="145.9" r="1.25"/><circle cx="169.8" cy="177.7" r="1.25"/><circle cx="53.0" cy="168.6" r="1.25"/><circle cx="79.0" cy="231.7" r="1.25"/><circle cx="124.5" cy="183.5" r="1.25"/><circle cx="109.3" cy="214.5" r="1.25"/><circle cx="175.7" cy="202.5" r="1.25"/><circle cx="65.9" cy="161.1" r="1.25"/><circle cx="84.2" cy="187.9" r="1.25"/><circle cx="198.6" cy="177.0" r="1.25"/><circle cx="148.4" cy="188.7" r="1.25"/><circle cx="58.7" cy="175.0" r="1.25"/><circle cx="53.5" cy="156.9" r="1.25"/><circle cx="71.6" cy="230.0" r="1.25"/><circle cx="137.5" cy="188.1" r="1.25"/><circle cx="165.8" cy="193.9" r="1.25"/><circle cx="73.6" cy="189.2" r="1.25"/><circle cx="61.0" cy="220.0" r="1.25"/><circle cx="79.2" cy="161.9" r="1.25"/><circle cx="109.2" cy="229.4" r="1.25"/><circle cx="95.3" cy="196.8" r="1.25"/><circle cx="199.0" cy="153.2" r="1.25"/><circle cx="156.9" cy="153.0" r="1.25"/><circle cx="198.7" cy="162.7" r="1.25"/><circle cx="219.2" cy="160.1" r="1.25"/><circle cx="140.9" cy="206.0" r="1.25"/><circle cx="113.0" cy="154.1" r="1.25"/><circle cx="190.9" cy="189.4" r="1.25"/><circle cx="85.3" cy="177.6" r="1.25"/><circle cx="117.9" cy="209.9" r="1.25"/><circle cx="109.0" cy="174.7" r="1.25"/><circle cx="64.6" cy="188.5" r="1.25"/><circle cx="49.5" cy="226.8" r="1.25"/><circle cx="98.5" cy="229.6" r="1.25"/><circle cx="206.0" cy="145.7" r="1.25"/><circle cx="101.2" cy="175.4" r="1.25"/><circle cx="155.3" cy="194.4" r="1.25"/><circle cx="47.7" cy="238.1" r="1.25"/><circle cx="88.9" cy="161.2" r="1.25"/><circle cx="91.2" cy="217.8" r="1.25"/><circle cx="132.5" cy="181.4" r="1.25"/><circle cx="85.6" cy="200.4" r="1.25"/><circle cx="112.8" cy="185.6" r="1.25"/><circle cx="74.9" cy="175.5" r="1.25"/><circle cx="73.0" cy="206.5" r="1.25"/><circle cx="148.8" cy="177.8" r="1.25"/><circle cx="134.2" cy="159.4" r="1.25"/><circle cx="60.9" cy="234.1" r="1.25"/><circle cx="53.8" cy="217.1" r="1.25"/><circle cx="102.2" cy="201.2" r="1.25"/><circle cx="52.8" cy="199.9" r="1.25"/><circle cx="61.7" cy="181.4" r="1.25"/><circle cx="83.4" cy="220.6" r="1.25"/><circle cx="173.8" cy="164.8" r="1.25"/><circle cx="29.1" cy="234.8" r="1.25"/><circle cx="194.0" cy="199.1" r="1.25"/><circle cx="148.1" cy="205.9" r="1.25"/><circle cx="120.9" cy="217.3" r="1.25"/><circle cx="186.9" cy="198.9" r="1.25"/><circle cx="70.0" cy="166.9" r="1.25"/><circle cx="149.4" cy="153.2" r="1.25"/><circle cx="184.7" cy="186.8" r="1.25"/><circle cx="211.7" cy="168.5" r="1.25"/><circle cx="124.5" cy="158.6" r="1.25"/><circle cx="44.6" cy="214.6" r="1.25"/><circle cx="60.8" cy="209.3" r="1.25"/><circle cx="84.7" cy="235.4" r="1.25"/><circle cx="189.8" cy="161.9" r="1.25"/><circle cx="208.0" cy="178.1" r="1.25"/><circle cx="42.8" cy="207.2" r="1.25"/><circle cx="106.3" cy="163.9" r="1.25"/><circle cx="123.9" cy="147.8" r="1.25"/><circle cx="62.9" cy="148.6" r="1.25"/><circle cx="37.4" cy="228.6" r="1.25"/><circle cx="79.2" cy="197.7" r="1.25"/><circle cx="89.2" cy="210.2" r="1.25"/><circle cx="167.6" cy="202.8" r="1.25"/><circle cx="95.5" cy="187.2" r="1.25"/><circle cx="160.1" cy="184.4" r="1.25"/><circle cx="136.1" cy="198.1" r="1.25"/><circle cx="116.9" cy="200.3" r="1.25"/><circle cx="37.7" cy="238.5" r="1.25"/><circle cx="116.0" cy="164.6" r="1.25"/><circle cx="79.8" cy="213.3" r="1.25"/><circle cx="176.3" cy="210.7" r="1.25"/><circle cx="185.6" cy="207.8" r="1.25"/><circle cx="177.4" cy="171.6" r="1.25"/><circle cx="55.2" cy="229.7" r="1.25"/><circle cx="91.5" cy="227.6" r="1.25"/><circle cx="91.4" cy="239.3" r="1.25"/><circle cx="104.8" cy="188.7" r="1.25"/><circle cx="129.7" cy="206.5" r="1.25"/><circle cx="146.1" cy="162.7" r="1.25"/><circle cx="192.1" cy="170.2" r="1.25"/><circle cx="65.9" cy="238.9" r="1.25"/><circle cx="22.0" cy="182.0" r="1.25"/><circle cx="14.0" cy="146.0" r="1.25"/><circle cx="36.0" cy="160.0" r="1.25"/><circle cx="30.0" cy="232.0" r="1.25"/><circle cx="48.0" cy="196.0" r="1.25"/><circle cx="12.0" cy="176.0" r="1.25"/><circle cx="12.0" cy="160.0" r="1.25"/><circle cx="30.0" cy="172.0" r="1.25"/><circle cx="25.0" cy="130.0" r="1.25"/><circle cx="10.0" cy="120.0" r="1.25"/><circle cx="44.0" cy="138.0" r="1.25"/><circle cx="52.0" cy="212.0" r="1.25"/><circle cx="28.0" cy="150.0" r="1.25"/><circle cx="8.0" cy="195.0" r="1.25"/><circle cx="16.0" cy="205.0" r="1.25"/><circle cx="40.0" cy="190.0" r="1.25"/><circle cx="20.0" cy="222.0" r="1.25"/><circle cx="60.0" cy="228.0" r="1.25"/><circle cx="8.0" cy="232.0" r="1.25"/><circle cx="45.0" cy="170.0" r="1.25"/><circle cx="35.0" cy="205.0" r="1.25"/><circle cx="225.0" cy="120.0" r="1.25"/><circle cx="232.0" cy="150.0" r="1.25"/><circle cx="222.0" cy="175.0" r="1.25"/><circle cx="234.0" cy="200.0" r="1.25"/><circle cx="215.0" cy="200.0" r="1.25"/><circle cx="228.0" cy="95.0" r="1.25"/><circle cx="236.0" cy="70.0" r="1.25"/><circle cx="205.0" cy="170.0" r="1.25"/><circle cx="196.0" cy="195.0" r="1.25"/><circle cx="226.0" cy="232.0" r="1.25"/><circle cx="150.0" cy="225.0" r="1.25"/><circle cx="128.0" cy="225.0" r="1.25"/><circle cx="160.0" cy="235.0" r="1.25"/></g>
</g></svg>
<svg style="left:0;top:0;" width="1548" height="750" viewBox="0 0 1548 750"><rect x="853.3" y="474" width="243.6" height="196.1" fill="#fff"/><rect x="854.5" y="485" width="239.4" height="171.2" fill="#555" opacity="0.7" filter="url(#sh)"/><defs><filter id="sh" x="-5%" y="-5%" width="110%" height="110%"><feGaussianBlur stdDeviation="0.9"/></filter></defs></svg>
<div class="t" style="left:848px;width:245px;text-align:center;top:472.2px;font-size:9.6px;font-weight:bold;color:#111;">Bovine Pulmonary Artery Epithelial Cells</div>
<div class="t" style="left:850.5px;width:245px;text-align:center;top:659px;font-size:9.6px;font-weight:bold;color:#111;">Figure 1</div>
<svg style="left:853.5px;top:484px;" width="239.4" height="171.2" viewBox="0 0 995 710" preserveAspectRatio="none" overflow="hidden">
<defs><filter id="g2" x="-5%" y="-5%" width="110%" height="110%"><feGaussianBlur stdDeviation="1.8"/></filter><filter id="g3" x="-20%" y="-20%" width="140%" height="140%"><feGaussianBlur stdDeviation="3"/></filter><filter id="g8" x="-10%" y="-10%" width="120%" height="120%"><feGaussianBlur stdDeviation="9"/></filter><filter id="g12" x="-20%" y="-20%" width="140%" height="140%"><feGaussianBlur stdDeviation="16"/></filter><radialGradient id="n1" cx="45%" cy="45%" r="60%"><stop offset="0" stop-color="#4a50ff"/><stop offset="0.7" stop-color="#2a28f0"/><stop offset="1" stop-color="#7a40d0"/></radialGradient><radialGradient id="n2" cx="50%" cy="50%" r="60%"><stop offset="0" stop-color="#6848f0"/><stop offset="0.7" stop-color="#5030e0"/><stop offset="1" stop-color="#a040c0"/></radialGradient><clipPath id="c2"><rect x="0" y="0" width="995" height="710"/></clipPath></defs>
<g clip-path="url(#c2)">
<rect x="0" y="0" width="995" height="710" fill="#07400c"/>
<g filter="url(#g8)"><path d="M185 7L505 2L685 22L745 2L995 2L995 312L885 312L815 402L685 452L585 402L465 312L405 262L285 182L205 102Z" fill="#0f7a22" opacity="0.85"/><path d="M0 182L285 242L465 402L585 542L685 710L0 710Z" fill="#0c6418" opacity="0.85"/><path d="M675 42L785 32L825 182L785 402L715 452L675 362L685 182Z" fill="#2cd060" opacity="0.55"/><path d="M185 12L405 12L425 62L315 92L205 72Z" fill="#24b840" opacity="0.5"/><path d="M545 542L745 582L925 592L885 662L685 710L545 710Z" fill="#158a2c" opacity="0.8"/><path d="M0 542L105 582L185 710L0 710Z" fill="#188a2a" opacity="0.75"/><path d="M0 0L50 0L80 67L57 157L0 132Z" fill="#000"/><path d="M115 12L175 7L190 82L135 92Z" fill="#021a04" opacity="0.9"/><path d="M820 402L865 344L945 322L995 337L995 594L947 622L890 582L917 544L865 482L807 452Z" fill="#000"/><path d="M580 482L675 452L755 502L785 572L685 582L595 542Z" fill="#021204" opacity="0.9"/><path d="M485 317L585 327L625 382L545 387Z" fill="#04280a" opacity="0.85"/><path d="M685 92L745 77L760 152L705 162Z" fill="#063a10" opacity="0.8"/><path d="M0 622L35 602L55 710L0 710Z" fill="#021a04" opacity="0.8"/><path d="M595 622L675 632L685 672L615 672Z" fill="#021204" opacity="0.85"/><path d="M405 232L505 282L585 312L545 332L415 282Z" fill="#032008" opacity="0.8"/><path d="M45 232L165 312L145 362L25 282Z" fill="#053010" opacity="0.6"/><path d="M435 502L545 582L525 622L415 552Z" fill="#042408" opacity="0.7"/></g>
<g fill="none" stroke-linecap="round" filter="url(#g2)"><path d="M266 454Q368 570 488 668" stroke="#052a08" stroke-width="2.6" opacity="0.51"/><path d="M291 620Q395 646 494 685" stroke="#30e040" stroke-width="3.5" opacity="0.39"/><path d="M304 319Q446 358 581 417" stroke="#063a0a" stroke-width="2.9" opacity="0.63"/><path d="M-68 592Q-6 647 70 679" stroke="#30e040" stroke-width="4.7" opacity="0.45"/><path d="M196 442Q329 519 457 606" stroke="#30e040" stroke-width="4.9" opacity="0.66"/><path d="M161 194Q217 230 276 262" stroke="#60ff70" stroke-width="4.5" opacity="0.56"/><path d="M157 256Q205 320 273 361" stroke="#063a0a" stroke-width="4.3" opacity="0.37"/><path d="M-30 522Q24 555 58 609" stroke="#063a0a" stroke-width="3.4" opacity="0.55"/><path d="M-26 178Q32 233 82 295" stroke="#30e040" stroke-width="4.8" opacity="0.68"/><path d="M163 387Q205 445 266 484" stroke="#60ff70" stroke-width="4.6" opacity="0.36"/><path d="M-61 231Q63 320 171 427" stroke="#60ff70" stroke-width="3.2" opacity="0.60"/><path d="M314 239Q423 298 516 379" stroke="#60ff70" stroke-width="5.0" opacity="0.41"/><path d="M521 405Q595 444 673 476" stroke="#052a08" stroke-width="3.4" opacity="0.44"/><path d="M-18 606Q84 703 194 789" stroke="#60ff70" stroke-width="4.6" opacity="0.40"/><path d="M517 456Q576 494 633 537" stroke="#063a0a" stroke-width="3.4" opacity="0.37"/><path d="M27 615Q81 670 144 715" stroke="#052a08" stroke-width="3.6" opacity="0.52"/><path d="M229 256Q295 292 350 344" stroke="#063a0a" stroke-width="4.6" opacity="0.54"/><path d="M464 597Q568 630 670 670" stroke="#052a08" stroke-width="4.5" opacity="0.65"/><path d="M369 512Q479 574 582 648" stroke="#60ff70" stroke-width="3.4" opacity="0.60"/><path d="M227 517Q304 566 360 637" stroke="#60ff70" stroke-width="4.1" opacity="0.55"/><path d="M251 207Q334 273 411 347" stroke="#052a08" stroke-width="4.1" opacity="0.63"/><path d="M313 503Q381 570 467 614" stroke="#30e040" stroke-width="4.7" opacity="0.59"/><path d="M511 395Q576 437 646 468" stroke="#60ff70" stroke-width="4.8" opacity="0.52"/><path d="M305 509Q437 549 566 600" stroke="#052a08" stroke-width="3.8" opacity="0.68"/><path d="M201 545Q332 637 468 721" stroke="#30e040" stroke-width="2.9" opacity="0.50"/><path d="M84 487Q125 537 181 570" stroke="#063a0a" stroke-width="4.9" opacity="0.41"/><path d="M-24 621Q65 694 158 762" stroke="#063a0a" stroke-width="3.7" opacity="0.48"/><path d="M315 226Q349 277 399 313" stroke="#063a0a" stroke-width="4.9" opacity="0.65"/><path d="M328 376Q420 445 506 521" stroke="#60ff70" stroke-width="2.7" opacity="0.54"/><path d="M279 615Q359 678 424 757" stroke="#052a08" stroke-width="4.1" opacity="0.48"/><path d="M254 343Q357 461 467 573" stroke="#052a08" stroke-width="2.7" opacity="0.64"/><path d="M152 238Q234 318 310 403" stroke="#60ff70" stroke-width="4.1" opacity="0.66"/><path d="M131 175Q267 254 392 350" stroke="#063a0a" stroke-width="3.5" opacity="0.65"/><path d="M289 513Q359 560 430 608" stroke="#40ff50" stroke-width="3.3" opacity="0.69"/><path d="M68 346Q179 398 279 470" stroke="#063a0a" stroke-width="3.1" opacity="0.36"/><path d="M172 356Q242 404 303 463" stroke="#063a0a" stroke-width="4.5" opacity="0.44"/><path d="M-7 636Q87 713 194 771" stroke="#063a0a" stroke-width="3.8" opacity="0.65"/><path d="M-14 214Q73 299 166 377" stroke="#052a08" stroke-width="2.6" opacity="0.47"/><path d="M-51 405Q-4 459 55 499" stroke="#052a08" stroke-width="3.0" opacity="0.50"/><path d="M275 439Q355 535 445 622" stroke="#063a0a" stroke-width="3.7" opacity="0.59"/><path d="M469 350Q547 396 619 451" stroke="#40ff50" stroke-width="4.2" opacity="0.50"/><path d="M370 624Q472 659 575 693" stroke="#052a08" stroke-width="4.7" opacity="0.69"/><path d="M141 380Q255 449 374 509" stroke="#60ff70" stroke-width="4.5" opacity="0.63"/><path d="M-92 432Q22 544 123 668" stroke="#063a0a" stroke-width="2.6" opacity="0.64"/><path d="M329 643Q396 674 452 722" stroke="#60ff70" stroke-width="4.3" opacity="0.50"/><path d="M41 556Q118 584 183 635" stroke="#052a08" stroke-width="2.8" opacity="0.48"/><path d="M-74 364Q31 469 143 565" stroke="#30e040" stroke-width="2.5" opacity="0.38"/><path d="M182 237Q294 339 410 436" stroke="#30e040" stroke-width="4.2" opacity="0.40"/><path d="M211 581Q300 666 401 735" stroke="#60ff70" stroke-width="2.7" opacity="0.43"/><path d="M66 594Q167 700 276 798" stroke="#063a0a" stroke-width="4.3" opacity="0.41"/><path d="M-49 395Q75 476 200 555" stroke="#063a0a" stroke-width="4.9" opacity="0.39"/><path d="M219 245Q336 346 437 463" stroke="#063a0a" stroke-width="4.2" opacity="0.43"/><path d="M528 473Q592 511 649 559" stroke="#052a08" stroke-width="3.4" opacity="0.64"/><path d="M483 484Q564 538 643 596" stroke="#60ff70" stroke-width="4.1" opacity="0.63"/><path d="M413 373Q522 419 617 489" stroke="#30e040" stroke-width="3.5" opacity="0.38"/><path d="M488 376Q531 421 588 444" stroke="#063a0a" stroke-width="3.3" opacity="0.68"/><path d="M89 333Q190 409 302 465" stroke="#40ff50" stroke-width="3.4" opacity="0.48"/><path d="M29 237Q85 289 155 321" stroke="#60ff70" stroke-width="4.2" opacity="0.36"/><path d="M154 530Q201 578 263 604" stroke="#40ff50" stroke-width="4.2" opacity="0.52"/><path d="M-35 447Q70 520 177 589" stroke="#30e040" stroke-width="2.6" opacity="0.60"/><path d="M294 409Q405 479 500 569" stroke="#60ff70" stroke-width="3.0" opacity="0.48"/><path d="M537 359Q602 401 665 446" stroke="#30e040" stroke-width="4.9" opacity="0.58"/><path d="M-15 544Q36 584 89 621" stroke="#052a08" stroke-width="4.6" opacity="0.64"/><path d="M437 496Q571 539 699 596" stroke="#40ff50" stroke-width="4.8" opacity="0.37"/><path d="M-44 320Q25 371 105 403" stroke="#063a0a" stroke-width="3.6" opacity="0.57"/><path d="M342 474Q416 516 499 530" stroke="#60ff70" stroke-width="4.5" opacity="0.38"/><path d="M8 93Q97 177 188 258" stroke="#063a0a" stroke-width="3.8" opacity="0.52"/><path d="M116 391Q218 504 339 596" stroke="#60ff70" stroke-width="4.2" opacity="0.66"/><path d="M209 528Q297 576 376 638" stroke="#30e040" stroke-width="2.8" opacity="0.38"/><path d="M-14 326Q47 384 116 434" stroke="#40ff50" stroke-width="3.7" opacity="0.44"/><path d="M428 602Q491 630 535 683" stroke="#60ff70" stroke-width="3.4" opacity="0.62"/><path d="M119 643Q166 687 227 708" stroke="#30e040" stroke-width="4.5" opacity="0.58"/><path d="M309 485Q443 532 572 589" stroke="#063a0a" stroke-width="3.9" opacity="0.46"/><path d="M31 384Q91 408 135 456" stroke="#052a08" stroke-width="4.4" opacity="0.55"/><path d="M-89 123Q37 198 150 291" stroke="#052a08" stroke-width="2.5" opacity="0.53"/><path d="M18 276Q121 340 226 402" stroke="#30e040" stroke-width="4.3" opacity="0.38"/><path d="M-19 450Q96 552 227 634" stroke="#063a0a" stroke-width="2.8" opacity="0.46"/><path d="M169 301Q277 385 388 465" stroke="#30e040" stroke-width="3.8" opacity="0.69"/><path d="M10 564Q63 602 115 641" stroke="#40ff50" stroke-width="2.6" opacity="0.55"/><path d="M451 328Q531 366 616 390" stroke="#30e040" stroke-width="3.3" opacity="0.53"/><path d="M360 262Q481 335 591 425" stroke="#40ff50" stroke-width="4.0" opacity="0.49"/><path d="M429 394Q500 427 577 436" stroke="#40ff50" stroke-width="4.4" opacity="0.45"/><path d="M386 520Q484 565 577 617" stroke="#052a08" stroke-width="4.1" opacity="0.63"/><path d="M-54 378Q4 430 66 478" stroke="#063a0a" stroke-width="2.6" opacity="0.59"/><path d="M210 341Q303 432 411 503" stroke="#063a0a" stroke-width="5.0" opacity="0.64"/><path d="M296 453Q415 526 542 586" stroke="#60ff70" stroke-width="4.9" opacity="0.36"/><path d="M4 232Q122 303 246 363" stroke="#052a08" stroke-width="4.0" opacity="0.62"/><path d="M76 596Q178 681 295 742" stroke="#40ff50" stroke-width="2.6" opacity="0.38"/><path d="M72 229Q182 335 292 442" stroke="#052a08" stroke-width="4.0" opacity="0.42"/><path d="M535 421Q589 447 644 472" stroke="#063a0a" stroke-width="3.4" opacity="0.61"/><path d="M49 471Q130 517 202 576" stroke="#052a08" stroke-width="4.2" opacity="0.69"/><path d="M-40 205Q58 305 161 399" stroke="#40ff50" stroke-width="4.7" opacity="0.41"/><path d="M-67 355Q37 460 143 563" stroke="#063a0a" stroke-width="3.5" opacity="0.50"/><path d="M116 424Q169 483 223 540" stroke="#40ff50" stroke-width="2.9" opacity="0.45"/><path d="M283 343Q341 382 399 423" stroke="#60ff70" stroke-width="4.3" opacity="0.37"/><path d="M371 629Q503 691 638 742" stroke="#063a0a" stroke-width="4.8" opacity="0.43"/><path d="M433 384Q510 404 584 431" stroke="#30e040" stroke-width="2.8" opacity="0.47"/><path d="M377 424Q454 477 543 505" stroke="#30e040" stroke-width="4.3" opacity="0.67"/><path d="M317 655Q383 681 439 725" stroke="#40ff50" stroke-width="3.0" opacity="0.46"/><path d="M469 656Q531 715 609 750" stroke="#052a08" stroke-width="3.7" opacity="0.35"/><path d="M-108 276Q5 347 112 429" stroke="#063a0a" stroke-width="4.4" opacity="0.60"/><path d="M-39 332Q71 409 180 486" stroke="#60ff70" stroke-width="3.5" opacity="0.45"/><path d="M344 544Q423 586 500 632" stroke="#60ff70" stroke-width="4.9" opacity="0.37"/><path d="M23 629Q134 701 243 775" stroke="#30e040" stroke-width="3.2" opacity="0.38"/><path d="M456 381Q601 434 735 509" stroke="#40ff50" stroke-width="3.6" opacity="0.40"/><path d="M293 637Q351 675 388 733" stroke="#30e040" stroke-width="3.0" opacity="0.63"/><path d="M204 592Q316 682 424 777" stroke="#063a0a" stroke-width="3.8" opacity="0.37"/><path d="M341 309Q478 371 601 458" stroke="#052a08" stroke-width="4.1" opacity="0.36"/><path d="M352 285Q472 363 580 456" stroke="#063a0a" stroke-width="2.5" opacity="0.64"/><path d="M83 232Q206 305 327 383" stroke="#40ff50" stroke-width="5.0" opacity="0.43"/><path d="M59 333Q171 393 269 474" stroke="#40ff50" stroke-width="4.4" opacity="0.62"/><path d="M311 522Q386 575 474 606" stroke="#063a0a" stroke-width="2.8" opacity="0.43"/><path d="M-1 306Q115 375 225 454" stroke="#60ff70" stroke-width="3.3" opacity="0.43"/><path d="M465 605Q544 644 620 691" stroke="#40ff50" stroke-width="4.1" opacity="0.48"/><path d="M232 406Q300 458 346 530" stroke="#052a08" stroke-width="2.9" opacity="0.36"/><path d="M184 226Q233 269 282 313" stroke="#40ff50" stroke-width="4.4" opacity="0.50"/><path d="M273 537Q365 598 465 644" stroke="#40ff50" stroke-width="4.2" opacity="0.66"/><path d="M275 350Q336 388 400 422" stroke="#60ff70" stroke-width="3.9" opacity="0.45"/><path d="M242 274Q360 356 477 442" stroke="#052a08" stroke-width="4.8" opacity="0.38"/><path d="M307 374Q447 435 584 501" stroke="#60ff70" stroke-width="4.5" opacity="0.48"/><path d="M-47 418Q5 455 52 499" stroke="#40ff50" stroke-width="2.8" opacity="0.66"/><path d="M147 558Q204 606 265 649" stroke="#40ff50" stroke-width="3.2" opacity="0.64"/><path d="M163 449Q234 498 308 542" stroke="#063a0a" stroke-width="4.8" opacity="0.64"/><path d="M283 612Q342 653 401 695" stroke="#063a0a" stroke-width="2.6" opacity="0.64"/><path d="M365 444Q435 488 507 527" stroke="#40ff50" stroke-width="4.3" opacity="0.60"/><path d="M-67 483Q23 549 119 609" stroke="#052a08" stroke-width="4.3" opacity="0.37"/><path d="M366 -47Q433 -8 482 52" stroke="#0a4a14" stroke-width="3.7" opacity="0.35"/><path d="M350 298Q395 292 442 293" stroke="#70ffa0" stroke-width="5.0" opacity="0.49"/><path d="M496 132Q600 128 703 117" stroke="#38e858" stroke-width="4.2" opacity="0.43"/><path d="M840 45Q915 43 989 49" stroke="#38e858" stroke-width="3.9" opacity="0.50"/><path d="M765 258Q812 262 860 264" stroke="#70ffa0" stroke-width="3.6" opacity="0.55"/><path d="M480 244Q576 228 669 200" stroke="#50ff70" stroke-width="3.3" opacity="0.33"/><path d="M757 212Q864 195 964 153" stroke="#0a4a14" stroke-width="2.9" opacity="0.40"/><path d="M226 220Q251 280 304 316" stroke="#70ffa0" stroke-width="4.3" opacity="0.42"/><path d="M130 106Q234 82 341 85" stroke="#0a4a14" stroke-width="2.8" opacity="0.42"/><path d="M159 174Q207 175 254 180" stroke="#70ffa0" stroke-width="4.8" opacity="0.58"/><path d="M191 255Q266 234 343 226" stroke="#50ff70" stroke-width="4.1" opacity="0.50"/><path d="M183 70Q271 117 370 124" stroke="#50ff70" stroke-width="3.0" opacity="0.45"/><path d="M453 148Q473 212 528 249" stroke="#50ff70" stroke-width="2.8" opacity="0.32"/><path d="M510 75Q568 132 606 204" stroke="#70ffa0" stroke-width="3.2" opacity="0.52"/><path d="M518 214Q555 249 605 261" stroke="#38e858" stroke-width="3.6" opacity="0.59"/><path d="M456 75Q541 83 626 75" stroke="#0a4a14" stroke-width="3.1" opacity="0.44"/><path d="M725 145Q826 154 928 158" stroke="#70ffa0" stroke-width="4.2" opacity="0.46"/><path d="M284 -23Q348 14 416 42" stroke="#0a4a14" stroke-width="4.7" opacity="0.46"/><path d="M593 16Q670 1 746 24" stroke="#70ffa0" stroke-width="3.5" opacity="0.59"/><path d="M678 212Q704 243 741 261" stroke="#38e858" stroke-width="3.3" opacity="0.56"/><path d="M469 226Q513 274 574 297" stroke="#70ffa0" stroke-width="4.3" opacity="0.48"/><path d="M223 188Q313 157 402 123" stroke="#0a4a14" stroke-width="4.6" opacity="0.31"/><path d="M460 46Q567 19 676 32" stroke="#38e858" stroke-width="4.2" opacity="0.42"/><path d="M430 215Q513 280 608 324" stroke="#38e858" stroke-width="4.1" opacity="0.47"/><path d="M497 130Q587 152 679 144" stroke="#70ffa0" stroke-width="3.9" opacity="0.47"/><path d="M764 167Q832 212 861 287" stroke="#50ff70" stroke-width="2.9" opacity="0.32"/><path d="M730 15Q805 12 866 55" stroke="#0a4a14" stroke-width="3.7" opacity="0.46"/><path d="M736 191Q809 261 907 289" stroke="#38e858" stroke-width="2.6" opacity="0.57"/><path d="M299 17Q347 17 393 28" stroke="#70ffa0" stroke-width="4.7" opacity="0.35"/><path d="M111 29Q214 40 312 11" stroke="#0a4a14" stroke-width="2.9" opacity="0.59"/><path d="M666 54Q736 70 806 84" stroke="#0a4a14" stroke-width="4.9" opacity="0.38"/><path d="M306 172Q335 225 386 258" stroke="#50ff70" stroke-width="4.7" opacity="0.58"/><path d="M432 152Q516 210 604 261" stroke="#0a4a14" stroke-width="4.3" opacity="0.36"/><path d="M664 298Q759 276 851 243" stroke="#38e858" stroke-width="3.4" opacity="0.33"/><path d="M434 44Q474 59 515 49" stroke="#38e858" stroke-width="4.3" opacity="0.58"/><path d="M675 72Q728 164 817 221" stroke="#50ff70" stroke-width="3.7" opacity="0.41"/><path d="M726 71Q745 131 800 162" stroke="#0a4a14" stroke-width="4.7" opacity="0.40"/><path d="M416 79Q508 138 613 169" stroke="#50ff70" stroke-width="3.1" opacity="0.39"/><path d="M155 172Q242 164 328 165" stroke="#70ffa0" stroke-width="2.7" opacity="0.52"/><path d="M396 226Q433 277 487 309" stroke="#50ff70" stroke-width="4.8" opacity="0.57"/><path d="M810 230Q881 210 954 196" stroke="#0a4a14" stroke-width="3.0" opacity="0.39"/><path d="M637 115Q696 168 719 244" stroke="#70ffa0" stroke-width="4.6" opacity="0.48"/><path d="M403 141Q484 116 569 120" stroke="#0a4a14" stroke-width="2.7" opacity="0.40"/><path d="M632 166Q733 155 829 124" stroke="#70ffa0" stroke-width="2.6" opacity="0.59"/><path d="M891 138Q936 182 968 234" stroke="#0a4a14" stroke-width="4.6" opacity="0.45"/><path d="M716 50Q715 217 774 374" stroke="#58ff90" stroke-width="7.0" opacity="0.70"/><path d="M728 154Q725 285 682 410" stroke="#58ff90" stroke-width="7.0" opacity="0.70"/><path d="M725 28Q763 144 845 236" stroke="#58ff90" stroke-width="7.0" opacity="0.70"/><path d="M525 338Q619 430 725 506" stroke="#58ff90" stroke-width="7.0" opacity="0.70"/><path d="M432 247Q550 303 658 377" stroke="#58ff90" stroke-width="7.0" opacity="0.70"/><path d="M544 491Q680 556 826 593" stroke="#58ff90" stroke-width="7.0" opacity="0.70"/><path d="M650 663Q800 603 960 581" stroke="#58ff90" stroke-width="7.0" opacity="0.70"/><path d="M337 46Q483 82 633 98" stroke="#58ff90" stroke-width="7.0" opacity="0.70"/><path d="M175 32Q286 34 395 52" stroke="#58ff90" stroke-width="7.0" opacity="0.70"/><path d="M838 207Q856 285 892 357" stroke="#58ff90" stroke-width="7.0" opacity="0.70"/><path d="M374 239Q432 286 496 325" stroke="#58ff90" stroke-width="7.0" opacity="0.70"/></g>
<g filter="url(#g12)"><ellipse cx="455" cy="97" rx="115" ry="62" fill="#d88a18" opacity="0.55" transform="rotate(10 455 97)"/><ellipse cx="605" cy="227" rx="110" ry="58" fill="#e09018" opacity="0.6" transform="rotate(15 605 227)"/><ellipse cx="900" cy="132" rx="100" ry="105" fill="#e04818" opacity="0.7"/><ellipse cx="285" cy="432" rx="150" ry="120" fill="#e08a18" opacity="0.7" transform="rotate(-20 285 432)"/><ellipse cx="235" cy="542" rx="90" ry="70" fill="#d09020" opacity="0.45" transform="rotate(-30 235 542)"/><ellipse cx="95" cy="482" rx="90" ry="30" fill="#d07018" opacity="0.45" transform="rotate(5 95 482)"/><ellipse cx="945" cy="652" rx="70" ry="30" fill="#e05018" opacity="0.8" transform="rotate(-20 945 652)"/><ellipse cx="915" cy="232" rx="60" ry="60" fill="#c89020" opacity="0.35"/></g>
<g fill="none" stroke-linecap="round" filter="url(#g2)"><path d="M342 84Q333 84 320 81" stroke="#ffc040" stroke-width="4.1"/><path d="M503 112Q513 114 514 118" stroke="#e86010" stroke-width="2.7"/><path d="M526 89Q539 89 549 83" stroke="#ff9a20" stroke-width="2.6"/><path d="M549 117Q555 118 575 121" stroke="#ffb030" stroke-width="3.7"/><path d="M332 73Q322 70 312 68" stroke="#ff9a20" stroke-width="2.8"/><path d="M382 95Q381 92 368 94" stroke="#f07818" stroke-width="4.1"/><path d="M538 68Q549 76 572 75" stroke="#e86010" stroke-width="3.3"/><path d="M448 127Q446 140 447 160" stroke="#e86010" stroke-width="2.8"/><path d="M539 57Q539 43 547 39" stroke="#ffc040" stroke-width="2.9"/><path d="M361 87Q350 84 330 87" stroke="#f07818" stroke-width="3.1"/><path d="M392 145Q386 153 394 161" stroke="#ffb030" stroke-width="2.6"/><path d="M481 163Q478 164 476 180" stroke="#ff9a20" stroke-width="3.8"/><path d="M543 128Q561 133 575 130" stroke="#e86010" stroke-width="4.1"/><path d="M518 28Q516 14 521 13" stroke="#ffb030" stroke-width="2.9"/><path d="M575 71Q581 66 597 75" stroke="#e86010" stroke-width="2.9"/><path d="M428 55Q413 38 414 32" stroke="#ff9a20" stroke-width="4.1"/><path d="M429 127Q429 124 422 137" stroke="#f07818" stroke-width="3.4"/><path d="M415 123Q413 137 409 153" stroke="#ff9a20" stroke-width="3.5"/><path d="M499 157Q496 162 502 171" stroke="#e86010" stroke-width="2.9"/><path d="M496 54Q504 52 509 45" stroke="#e86010" stroke-width="3.3"/><path d="M531 43Q532 39 543 36" stroke="#e86010" stroke-width="3.6"/><path d="M414 32Q416 9 403 1" stroke="#ff9a20" stroke-width="3.5"/><path d="M378 49Q369 47 361 42" stroke="#f07818" stroke-width="2.7"/><path d="M368 106Q371 104 359 117" stroke="#ffc040" stroke-width="2.8"/><path d="M393 75Q391 66 379 64" stroke="#f07818" stroke-width="3.0"/><path d="M516 116Q531 126 537 141" stroke="#f07818" stroke-width="2.6"/><path d="M359 134Q355 153 337 157" stroke="#ff9a20" stroke-width="3.8"/><path d="M557 71Q566 58 570 51" stroke="#ffb030" stroke-width="3.1"/><path d="M385 46Q379 36 367 19" stroke="#ffb030" stroke-width="3.5"/><path d="M483 26Q480 9 479 -7" stroke="#ffb030" stroke-width="3.8"/><path d="M337 102Q333 103 314 109" stroke="#ffb030" stroke-width="4.1"/><path d="M558 121Q571 135 575 138" stroke="#ffb030" stroke-width="2.5"/><path d="M426 27Q413 26 415 18" stroke="#ffc040" stroke-width="3.2"/><path d="M486 122Q498 135 513 133" stroke="#e86010" stroke-width="3.6"/><path d="M532 38Q543 40 555 36" stroke="#e86010" stroke-width="3.0"/><path d="M472 28Q457 15 452 1" stroke="#f07818" stroke-width="3.0"/><path d="M425 153Q428 173 428 180" stroke="#ffc040" stroke-width="2.9"/><path d="M399 109Q396 110 384 120" stroke="#f07818" stroke-width="3.8"/><path d="M536 70Q545 63 550 57" stroke="#ff9a20" stroke-width="3.4"/><path d="M420 62Q406 45 406 34" stroke="#ffb030" stroke-width="3.4"/><path d="M515 53Q528 52 528 52" stroke="#ff9a20" stroke-width="2.7"/><path d="M508 38Q504 29 513 25" stroke="#e86010" stroke-width="3.3"/><path d="M564 47Q572 29 578 17" stroke="#ff9a20" stroke-width="3.2"/><path d="M514 79Q536 69 541 72" stroke="#e86010" stroke-width="3.8"/><path d="M463 139Q476 148 474 153" stroke="#e86010" stroke-width="2.8"/><path d="M418 39Q417 24 410 24" stroke="#e86010" stroke-width="3.2"/><path d="M565 91Q571 89 582 88" stroke="#ffb030" stroke-width="2.9"/><path d="M386 90Q382 97 363 101" stroke="#ffc040" stroke-width="2.6"/><path d="M556 39Q561 41 568 33" stroke="#e86010" stroke-width="2.8"/><path d="M397 138Q383 151 378 149" stroke="#ffc040" stroke-width="3.5"/><path d="M518 47Q513 37 521 27" stroke="#ff9a20" stroke-width="4.2"/><path d="M405 154Q395 156 378 172" stroke="#f07818" stroke-width="3.6"/><path d="M406 121Q394 135 386 141" stroke="#ffb030" stroke-width="3.1"/><path d="M375 119Q359 123 351 138" stroke="#ff9a20" stroke-width="3.1"/><path d="M569 106Q576 121 582 123" stroke="#ff9a20" stroke-width="3.2"/><path d="M484 127Q497 138 495 135" stroke="#f07818" stroke-width="2.8"/><path d="M402 148Q395 164 397 167" stroke="#ff9a20" stroke-width="3.8"/><path d="M431 120Q417 129 415 149" stroke="#f07818" stroke-width="3.4"/><path d="M354 92Q337 99 322 96" stroke="#e86010" stroke-width="4.0"/><path d="M573 98Q584 101 587 103" stroke="#e86010" stroke-width="3.1"/><path d="M458 121Q465 130 476 141" stroke="#ff9a20" stroke-width="3.7"/><path d="M485 163Q495 169 501 182" stroke="#ffb030" stroke-width="3.5"/><path d="M444 49Q448 44 449 31" stroke="#f07818" stroke-width="3.7"/><path d="M437 119Q438 134 436 139" stroke="#ffb030" stroke-width="2.9"/><path d="M516 104Q534 114 537 119" stroke="#f07818" stroke-width="4.2"/><path d="M373 88Q367 90 353 90" stroke="#ff9a20" stroke-width="3.9"/><path d="M574 83Q589 87 590 85" stroke="#ffc040" stroke-width="2.7"/><path d="M450 39Q444 32 431 16" stroke="#ffc040" stroke-width="2.7"/><path d="M402 99Q385 99 382 92" stroke="#ff9a20" stroke-width="3.5"/><path d="M485 29Q496 24 499 21" stroke="#e86010" stroke-width="3.3"/><path d="M511 112Q521 124 526 124" stroke="#ff9a20" stroke-width="3.6"/><path d="M401 50Q387 37 376 39" stroke="#ffb030" stroke-width="4.2"/><path d="M385 58Q371 58 366 48" stroke="#ffc040" stroke-width="3.8"/><path d="M423 40Q424 39 425 28" stroke="#ff9a20" stroke-width="2.8"/><path d="M493 34Q504 31 510 24" stroke="#ff9a20" stroke-width="3.1"/><path d="M411 112Q410 109 398 117" stroke="#ffb030" stroke-width="4.0"/><path d="M537 62Q549 57 557 63" stroke="#ffb030" stroke-width="2.6"/><path d="M393 22Q387 22 383 13" stroke="#ffc040" stroke-width="2.9"/><path d="M362 39Q352 35 352 27" stroke="#ff9a20" stroke-width="3.9"/><path d="M409 26Q403 9 399 5" stroke="#f07818" stroke-width="2.8"/><path d="M480 54Q478 48 491 47" stroke="#ff9a20" stroke-width="3.9"/><path d="M339 99Q324 94 317 90" stroke="#ff9a20" stroke-width="3.7"/><path d="M415 114Q401 115 389 123" stroke="#f07818" stroke-width="4.1"/><path d="M369 63Q368 69 353 63" stroke="#ff9a20" stroke-width="3.7"/><path d="M391 122Q385 121 375 130" stroke="#ffb030" stroke-width="2.5"/><path d="M458 12Q459 -2 447 -5" stroke="#e86010" stroke-width="2.7"/><path d="M408 158Q413 176 402 187" stroke="#ffb030" stroke-width="3.8"/><path d="M445 33Q455 34 450 20" stroke="#e86010" stroke-width="3.0"/><path d="M458 126Q457 136 470 144" stroke="#f07818" stroke-width="3.8"/><path d="M422 114Q421 129 404 139" stroke="#ffc040" stroke-width="3.8"/><path d="M621 253Q633 268 639 278" stroke="#ffb030" stroke-width="3.7"/><path d="M570 230Q560 239 555 245" stroke="#ff9a20" stroke-width="3.7"/><path d="M606 164Q607 147 597 142" stroke="#f07818" stroke-width="3.8"/><path d="M534 229Q525 221 512 219" stroke="#e86010" stroke-width="3.3"/><path d="M727 192Q735 192 757 206" stroke="#f07818" stroke-width="3.2"/><path d="M534 270Q534 282 525 302" stroke="#ff9a20" stroke-width="2.8"/><path d="M661 265Q677 278 688 279" stroke="#e86010" stroke-width="3.7"/><path d="M606 264Q614 273 608 284" stroke="#ff9a20" stroke-width="2.7"/><path d="M688 210Q695 208 710 218" stroke="#f07818" stroke-width="3.2"/><path d="M697 192Q704 179 710 178" stroke="#ffc040" stroke-width="3.9"/><path d="M579 165Q578 144 573 135" stroke="#e86010" stroke-width="3.0"/><path d="M709 227Q715 221 721 229" stroke="#f07818" stroke-width="3.1"/><path d="M622 273Q621 281 621 291" stroke="#f07818" stroke-width="4.0"/><path d="M555 254Q540 259 534 271" stroke="#ffb030" stroke-width="3.7"/><path d="M649 259Q660 271 655 286" stroke="#e86010" stroke-width="2.6"/><path d="M678 264Q689 277 691 275" stroke="#ffb030" stroke-width="3.9"/><path d="M706 205Q721 204 728 219" stroke="#ffc040" stroke-width="2.9"/><path d="M677 160Q683 148 695 147" stroke="#e86010" stroke-width="3.7"/><path d="M719 213Q732 222 740 218" stroke="#ffc040" stroke-width="3.3"/><path d="M529 186Q527 178 516 184" stroke="#ff9a20" stroke-width="3.7"/><path d="M542 238Q537 253 523 260" stroke="#ffc040" stroke-width="3.9"/><path d="M714 245Q715 254 731 247" stroke="#ffb030" stroke-width="2.5"/><path d="M653 183Q667 179 677 176" stroke="#e86010" stroke-width="3.1"/><path d="M529 228Q524 219 505 219" stroke="#ffc040" stroke-width="3.2"/><path d="M659 275Q667 283 664 291" stroke="#ff9a20" stroke-width="4.2"/><path d="M575 263Q570 279 565 279" stroke="#f07818" stroke-width="3.0"/><path d="M578 166Q568 160 562 145" stroke="#ffc040" stroke-width="3.5"/><path d="M694 170Q688 168 694 151" stroke="#f07818" stroke-width="3.2"/><path d="M622 284Q615 291 614 299" stroke="#ffb030" stroke-width="3.4"/><path d="M561 169Q560 154 558 141" stroke="#ff9a20" stroke-width="3.6"/><path d="M599 278Q599 296 602 309" stroke="#ff9a20" stroke-width="3.7"/><path d="M616 173Q618 157 606 156" stroke="#f07818" stroke-width="4.1"/><path d="M655 195Q649 176 657 171" stroke="#e86010" stroke-width="3.7"/><path d="M525 234Q514 229 505 239" stroke="#f07818" stroke-width="3.7"/><path d="M666 239Q676 253 677 259" stroke="#ffb030" stroke-width="3.5"/><path d="M672 238Q680 256 687 262" stroke="#f07818" stroke-width="2.6"/><path d="M652 188Q660 178 656 174" stroke="#e86010" stroke-width="2.8"/><path d="M559 231Q553 227 536 224" stroke="#ffc040" stroke-width="3.4"/><path d="M593 181Q604 160 604 150" stroke="#e86010" stroke-width="3.9"/><path d="M586 265Q575 266 567 278" stroke="#ffb030" stroke-width="4.2"/><path d="M556 181Q549 173 537 164" stroke="#ff9a20" stroke-width="3.8"/><path d="M600 158Q589 144 586 140" stroke="#ffb030" stroke-width="2.8"/><path d="M585 249Q575 253 576 267" stroke="#f07818" stroke-width="3.7"/><path d="M553 246Q554 257 541 268" stroke="#ff9a20" stroke-width="3.3"/><path d="M616 277Q614 287 610 290" stroke="#ffb030" stroke-width="3.7"/><path d="M679 176Q692 175 691 159" stroke="#ffb030" stroke-width="2.8"/><path d="M528 234Q527 239 519 250" stroke="#ffc040" stroke-width="3.5"/><path d="M721 241Q724 257 734 266" stroke="#ff9a20" stroke-width="2.7"/><path d="M729 198Q730 196 745 204" stroke="#e86010" stroke-width="2.8"/><path d="M587 247Q584 269 595 279" stroke="#ffc040" stroke-width="3.0"/><path d="M708 218Q723 207 733 212" stroke="#f07818" stroke-width="3.7"/><path d="M649 187Q653 166 663 157" stroke="#ffb030" stroke-width="3.9"/><path d="M654 190Q665 184 664 177" stroke="#f07818" stroke-width="3.1"/><path d="M523 224Q513 221 502 208" stroke="#e86010" stroke-width="3.5"/><path d="M623 154Q629 146 644 133" stroke="#f07818" stroke-width="3.1"/><path d="M697 205Q710 200 717 195" stroke="#ffc040" stroke-width="3.8"/><path d="M583 169Q576 164 575 146" stroke="#ffb030" stroke-width="3.7"/><path d="M574 179Q568 185 557 175" stroke="#ffc040" stroke-width="3.9"/><path d="M656 151Q649 148 654 136" stroke="#ffb030" stroke-width="3.0"/><path d="M604 168Q598 158 596 143" stroke="#ff9a20" stroke-width="3.4"/><path d="M710 227Q727 228 737 233" stroke="#ffc040" stroke-width="3.1"/><path d="M694 230Q705 228 717 217" stroke="#f07818" stroke-width="3.7"/><path d="M565 269Q565 275 554 282" stroke="#e86010" stroke-width="4.1"/><path d="M521 207Q522 209 509 202" stroke="#ffc040" stroke-width="3.4"/><path d="M553 269Q548 281 553 285" stroke="#ffc040" stroke-width="3.2"/><path d="M579 250Q576 251 558 263" stroke="#ffc040" stroke-width="4.2"/><path d="M504 197Q502 183 493 178" stroke="#ff9a20" stroke-width="3.9"/><path d="M539 239Q523 233 511 237" stroke="#e86010" stroke-width="3.0"/><path d="M609 256Q611 270 599 281" stroke="#ffc040" stroke-width="3.8"/><path d="M666 230Q671 237 689 242" stroke="#e86010" stroke-width="2.5"/><path d="M606 171Q605 154 618 143" stroke="#f07818" stroke-width="3.5"/><path d="M725 214Q732 225 747 230" stroke="#ffc040" stroke-width="2.7"/><path d="M690 268Q698 280 711 279" stroke="#ffb030" stroke-width="3.5"/><path d="M677 242Q681 250 692 261" stroke="#ff9a20" stroke-width="3.4"/><path d="M665 196Q676 175 672 169" stroke="#ffc040" stroke-width="4.0"/><path d="M677 239Q686 243 683 251" stroke="#f07818" stroke-width="4.0"/><path d="M538 214Q531 226 522 224" stroke="#e86010" stroke-width="4.1"/><path d="M571 234Q557 235 557 249" stroke="#ff9a20" stroke-width="4.0"/><path d="M651 241Q648 244 651 257" stroke="#ffb030" stroke-width="2.6"/><path d="M621 177Q631 168 639 156" stroke="#e86010" stroke-width="4.0"/><path d="M676 180Q672 171 682 153" stroke="#f07818" stroke-width="4.1"/><path d="M618 150Q607 145 606 126" stroke="#f07818" stroke-width="2.8"/><path d="M532 202Q526 192 516 191" stroke="#e86010" stroke-width="2.6"/><path d="M692 180Q694 168 711 166" stroke="#e86010" stroke-width="2.9"/><path d="M696 263Q702 273 712 271" stroke="#ff9a20" stroke-width="4.0"/><path d="M546 205Q542 208 533 201" stroke="#e86010" stroke-width="3.6"/><path d="M638 178Q648 171 645 164" stroke="#ffb030" stroke-width="2.9"/><path d="M656 184Q674 180 678 181" stroke="#ffc040" stroke-width="3.0"/><path d="M600 270Q603 278 608 296" stroke="#ff9a20" stroke-width="3.9"/><path d="M634 179Q635 171 629 168" stroke="#ffc040" stroke-width="3.1"/><path d="M802 218Q798 223 793 242" stroke="#ff9a20" stroke-width="4.0"/><path d="M908 61Q902 43 902 28" stroke="#e83010" stroke-width="3.3"/><path d="M784 65Q780 70 768 64" stroke="#f03810" stroke-width="4.0"/><path d="M900 34Q898 35 909 24" stroke="#ffb030" stroke-width="2.7"/><path d="M955 110Q957 98 963 100" stroke="#f03810" stroke-width="3.7"/><path d="M870 189Q871 207 881 209" stroke="#f03810" stroke-width="4.1"/><path d="M809 148Q799 154 795 170" stroke="#e83010" stroke-width="4.1"/><path d="M853 68Q852 68 845 54" stroke="#ffb030" stroke-width="4.1"/><path d="M801 84Q789 83 774 75" stroke="#e83010" stroke-width="3.2"/><path d="M822 229Q817 240 812 242" stroke="#e83010" stroke-width="3.0"/><path d="M880 62Q890 46 892 43" stroke="#ff9a20" stroke-width="3.8"/><path d="M968 29Q981 12 983 8" stroke="#ff4a18" stroke-width="3.1"/><path d="M955 86Q966 70 967 57" stroke="#ffb030" stroke-width="4.0"/><path d="M815 94Q795 95 787 94" stroke="#ff6a20" stroke-width="3.2"/><path d="M1013 110Q1031 120 1035 119" stroke="#ff9a20" stroke-width="3.0"/><path d="M829 35Q831 33 825 23" stroke="#ff6a20" stroke-width="4.1"/><path d="M797 79Q787 83 778 75" stroke="#f03810" stroke-width="3.9"/><path d="M844 222Q832 231 833 228" stroke="#ff9a20" stroke-width="3.4"/><path d="M925 79Q924 79 925 64" stroke="#f03810" stroke-width="3.3"/><path d="M1014 136Q1027 138 1029 126" stroke="#ffb030" stroke-width="3.8"/><path d="M775 77Q762 72 763 60" stroke="#ff6a20" stroke-width="3.7"/><path d="M770 102Q760 98 755 85" stroke="#ff4a18" stroke-width="3.3"/><path d="M879 222Q878 237 875 237" stroke="#f03810" stroke-width="3.6"/><path d="M826 26Q825 11 816 10" stroke="#ff9a20" stroke-width="3.6"/><path d="M983 204Q995 217 1009 224" stroke="#f03810" stroke-width="2.8"/><path d="M829 67Q814 59 814 43" stroke="#e83010" stroke-width="2.7"/><path d="M996 173Q1013 188 1017 191" stroke="#ff4a18" stroke-width="3.5"/><path d="M921 247Q927 250 925 267" stroke="#ff6a20" stroke-width="3.9"/><path d="M881 220Q898 233 900 242" stroke="#e83010" stroke-width="4.2"/><path d="M927 45Q920 30 930 13" stroke="#ff6a20" stroke-width="2.6"/><path d="M795 77Q782 69 775 77" stroke="#e83010" stroke-width="3.4"/><path d="M910 6Q929 -12 932 -15" stroke="#ff6a20" stroke-width="3.7"/><path d="M902 58Q899 51 902 32" stroke="#e83010" stroke-width="3.4"/><path d="M939 15Q945 10 952 7" stroke="#ff6a20" stroke-width="2.7"/><path d="M981 175Q988 184 985 187" stroke="#e83010" stroke-width="3.9"/><path d="M858 189Q845 200 838 211" stroke="#ff9a20" stroke-width="3.7"/><path d="M830 183Q820 183 822 196" stroke="#ffb030" stroke-width="3.8"/><path d="M988 186Q1005 200 1008 202" stroke="#ffb030" stroke-width="4.0"/><path d="M961 51Q971 43 993 49" stroke="#f03810" stroke-width="3.3"/><path d="M935 54Q953 42 959 37" stroke="#ff9a20" stroke-width="3.4"/><path d="M897 64Q891 61 900 43" stroke="#ff4a18" stroke-width="3.2"/><path d="M813 70Q803 72 799 59" stroke="#ff4a18" stroke-width="2.9"/><path d="M962 62Q961 64 974 51" stroke="#e83010" stroke-width="2.8"/><path d="M936 66Q936 61 936 47" stroke="#ff9a20" stroke-width="3.5"/><path d="M854 60Q853 45 855 42" stroke="#e83010" stroke-width="2.7"/><path d="M908 13Q893 3 894 -13" stroke="#ff9a20" stroke-width="2.7"/><path d="M854 46Q849 32 860 20" stroke="#f03810" stroke-width="3.6"/><path d="M864 188Q859 188 866 203" stroke="#ff6a20" stroke-width="3.8"/><path d="M832 87Q812 82 799 81" stroke="#ff6a20" stroke-width="3.8"/><path d="M930 75Q944 75 956 73" stroke="#e83010" stroke-width="3.9"/><path d="M835 87Q833 88 820 78" stroke="#ff9a20" stroke-width="4.0"/><path d="M886 57Q888 52 878 31" stroke="#ff6a20" stroke-width="2.8"/><path d="M846 207Q843 214 844 235" stroke="#ff9a20" stroke-width="2.7"/><path d="M909 207Q911 220 922 218" stroke="#e83010" stroke-width="2.5"/><path d="M830 194Q835 210 828 225" stroke="#ff9a20" stroke-width="4.0"/><path d="M834 217Q826 241 826 248" stroke="#f03810" stroke-width="3.6"/><path d="M927 31Q924 16 926 -3" stroke="#e83010" stroke-width="3.4"/><path d="M935 46Q945 41 942 32" stroke="#ffb030" stroke-width="3.9"/><path d="M788 99Q777 91 764 92" stroke="#ff9a20" stroke-width="3.4"/><path d="M818 21Q808 11 807 -11" stroke="#ffb030" stroke-width="3.5"/><path d="M824 87Q824 86 811 89" stroke="#ff9a20" stroke-width="4.0"/><path d="M814 55Q795 57 790 52" stroke="#f03810" stroke-width="2.9"/><path d="M833 165Q828 159 814 169" stroke="#f03810" stroke-width="2.7"/><path d="M912 221Q919 223 923 229" stroke="#ff9a20" stroke-width="3.1"/><path d="M844 78Q834 70 824 65" stroke="#e83010" stroke-width="2.5"/><path d="M943 89Q950 77 966 70" stroke="#e83010" stroke-width="3.2"/><path d="M963 197Q978 203 977 214" stroke="#ff9a20" stroke-width="3.8"/><path d="M907 203Q904 214 909 233" stroke="#ff9a20" stroke-width="2.6"/><path d="M945 169Q954 164 958 166" stroke="#ff4a18" stroke-width="2.5"/><path d="M994 152Q1003 144 1013 140" stroke="#ff6a20" stroke-width="3.8"/><path d="M818 167Q816 163 803 170" stroke="#ff9a20" stroke-width="2.7"/><path d="M927 182Q932 184 946 199" stroke="#ff6a20" stroke-width="2.7"/><path d="M823 200Q816 204 823 214" stroke="#ff9a20" stroke-width="3.9"/><path d="M819 140Q806 133 797 126" stroke="#f03810" stroke-width="2.8"/><path d="M977 132Q983 140 997 148" stroke="#ff6a20" stroke-width="3.9"/><path d="M956 24Q969 14 977 3" stroke="#ff6a20" stroke-width="3.8"/><path d="M781 126Q770 129 758 124" stroke="#ff9a20" stroke-width="2.7"/><path d="M780 119Q778 122 764 112" stroke="#e83010" stroke-width="3.5"/><path d="M965 198Q972 213 971 226" stroke="#f03810" stroke-width="2.8"/><path d="M890 219Q881 224 876 245" stroke="#ff9a20" stroke-width="3.1"/><path d="M906 191Q918 192 929 208" stroke="#ff4a18" stroke-width="3.9"/><path d="M992 140Q1003 143 1017 132" stroke="#ff9a20" stroke-width="4.1"/><path d="M837 49Q840 33 845 18" stroke="#ff9a20" stroke-width="3.9"/><path d="M792 184Q783 195 788 198" stroke="#e83010" stroke-width="3.7"/><path d="M968 52Q987 33 991 28" stroke="#f03810" stroke-width="2.5"/><path d="M974 110Q989 102 998 89" stroke="#f03810" stroke-width="2.7"/><path d="M942 230Q956 243 955 258" stroke="#f03810" stroke-width="3.3"/><path d="M811 107Q798 113 779 111" stroke="#ff4a18" stroke-width="3.0"/><path d="M915 183Q928 193 926 191" stroke="#ff6a20" stroke-width="3.2"/><path d="M921 41Q910 29 913 15" stroke="#f03810" stroke-width="4.2"/><path d="M439 510Q438 525 451 525" stroke="#ffc040" stroke-width="2.6"/><path d="M171 340Q160 338 162 332" stroke="#e86010" stroke-width="3.6"/><path d="M460 395Q472 385 493 388" stroke="#ffc040" stroke-width="3.2"/><path d="M255 516Q259 523 250 543" stroke="#e86010" stroke-width="3.8"/><path d="M353 284Q352 267 345 261" stroke="#f07818" stroke-width="3.4"/><path d="M214 310Q210 299 199 300" stroke="#ffb030" stroke-width="3.9"/><path d="M454 307Q457 303 474 292" stroke="#ffc040" stroke-width="3.1"/><path d="M244 363Q241 348 240 342" stroke="#f07818" stroke-width="4.1"/><path d="M194 466Q187 482 177 488" stroke="#ff9a20" stroke-width="3.3"/><path d="M381 490Q400 491 409 501" stroke="#ffd850" stroke-width="4.1"/><path d="M335 512Q325 521 330 526" stroke="#e86010" stroke-width="3.3"/><path d="M222 443Q216 438 208 449" stroke="#ffc040" stroke-width="3.4"/><path d="M421 345Q435 335 451 332" stroke="#ffc040" stroke-width="4.2"/><path d="M427 513Q426 514 433 528" stroke="#f07818" stroke-width="2.6"/><path d="M393 287Q405 278 407 283" stroke="#ff9a20" stroke-width="3.6"/><path d="M205 410Q196 411 181 414" stroke="#ffd850" stroke-width="3.6"/><path d="M459 394Q472 397 472 392" stroke="#ffb030" stroke-width="4.1"/><path d="M408 492Q422 500 428 512" stroke="#ff9a20" stroke-width="3.7"/><path d="M413 284Q425 283 428 275" stroke="#ff9a20" stroke-width="3.1"/><path d="M427 466Q426 476 438 487" stroke="#ff9a20" stroke-width="2.6"/><path d="M459 475Q461 474 473 486" stroke="#ff9a20" stroke-width="3.0"/><path d="M466 455Q475 453 482 455" stroke="#e86010" stroke-width="3.5"/><path d="M398 322Q402 324 421 319" stroke="#ffd850" stroke-width="3.3"/><path d="M201 436Q179 437 169 439" stroke="#ff9a20" stroke-width="3.0"/><path d="M366 521Q366 535 356 547" stroke="#ffb030" stroke-width="3.3"/><path d="M428 363Q445 364 454 360" stroke="#ffd850" stroke-width="4.1"/><path d="M466 418Q467 421 474 426" stroke="#ffb030" stroke-width="2.9"/><path d="M389 365Q398 350 407 348" stroke="#f07818" stroke-width="3.6"/><path d="M260 349Q259 338 258 336" stroke="#ffc040" stroke-width="2.9"/><path d="M380 474Q392 481 408 482" stroke="#ffd850" stroke-width="2.9"/><path d="M351 343Q356 341 354 328" stroke="#ffc040" stroke-width="3.3"/><path d="M147 355Q129 359 116 361" stroke="#ffd850" stroke-width="4.0"/><path d="M371 333Q366 322 375 308" stroke="#f07818" stroke-width="3.3"/><path d="M194 446Q177 441 167 450" stroke="#f07818" stroke-width="3.0"/><path d="M355 458Q365 463 364 470" stroke="#ffc040" stroke-width="4.1"/><path d="M236 437Q235 429 223 437" stroke="#ff9a20" stroke-width="3.2"/><path d="M140 452Q129 441 110 439" stroke="#f07818" stroke-width="3.9"/><path d="M288 274Q291 263 293 259" stroke="#f07818" stroke-width="4.0"/><path d="M176 397Q163 398 149 404" stroke="#ffc040" stroke-width="3.1"/><path d="M274 331Q276 320 276 302" stroke="#ffd850" stroke-width="3.1"/><path d="M341 507Q345 519 345 521" stroke="#e86010" stroke-width="4.0"/><path d="M455 485Q466 495 464 497" stroke="#ffb030" stroke-width="3.2"/><path d="M360 469Q369 471 367 481" stroke="#ffb030" stroke-width="4.1"/><path d="M379 323Q380 315 384 301" stroke="#ff9a20" stroke-width="3.7"/><path d="M236 399Q226 401 219 398" stroke="#e86010" stroke-width="4.0"/><path d="M122 410Q108 417 104 415" stroke="#e86010" stroke-width="4.2"/><path d="M138 366Q133 368 116 364" stroke="#ffc040" stroke-width="4.2"/><path d="M474 475Q475 486 478 487" stroke="#ffd850" stroke-width="3.4"/><path d="M408 350Q417 344 421 348" stroke="#ffd850" stroke-width="3.4"/><path d="M233 545Q241 558 232 574" stroke="#e86010" stroke-width="2.9"/><path d="M215 501Q204 503 196 511" stroke="#e86010" stroke-width="3.4"/><path d="M350 344Q344 334 350 324" stroke="#ff9a20" stroke-width="2.7"/><path d="M206 536Q203 549 183 547" stroke="#ffb030" stroke-width="4.0"/><path d="M130 407Q122 418 99 418" stroke="#ffd850" stroke-width="3.7"/><path d="M271 343Q277 341 270 329" stroke="#ffb030" stroke-width="3.8"/><path d="M282 526Q281 540 277 557" stroke="#ffd850" stroke-width="3.3"/><path d="M417 362Q428 347 426 337" stroke="#ffb030" stroke-width="2.7"/><path d="M224 402Q207 399 202 390" stroke="#ffd850" stroke-width="2.6"/><path d="M294 300Q304 291 310 272" stroke="#ffb030" stroke-width="2.8"/><path d="M401 471Q408 487 412 490" stroke="#e86010" stroke-width="3.6"/><path d="M244 296Q246 292 244 278" stroke="#ffd850" stroke-width="3.8"/><path d="M126 451Q115 454 104 451" stroke="#e86010" stroke-width="4.1"/><path d="M150 333Q137 337 137 328" stroke="#ff9a20" stroke-width="2.6"/><path d="M478 341Q487 342 504 340" stroke="#ffb030" stroke-width="3.1"/><path d="M311 518Q308 533 297 539" stroke="#ff9a20" stroke-width="2.8"/><path d="M141 415Q132 417 116 432" stroke="#ffc040" stroke-width="3.9"/><path d="M287 343Q279 329 268 318" stroke="#ffd850" stroke-width="3.4"/><path d="M382 348Q383 345 399 337" stroke="#e86010" stroke-width="3.9"/><path d="M436 315Q438 307 439 288" stroke="#f07818" stroke-width="3.0"/><path d="M394 419Q404 432 405 428" stroke="#f07818" stroke-width="3.3"/><path d="M356 546Q360 557 364 555" stroke="#ffc040" stroke-width="3.4"/><path d="M429 434Q440 435 455 438" stroke="#e86010" stroke-width="3.9"/><path d="M307 522Q307 533 322 539" stroke="#ffc040" stroke-width="2.7"/><path d="M235 461Q230 469 223 481" stroke="#e86010" stroke-width="3.2"/><path d="M232 395Q226 396 219 397" stroke="#ffb030" stroke-width="3.0"/><path d="M349 348Q363 351 372 340" stroke="#ffc040" stroke-width="3.4"/><path d="M254 530Q241 545 231 549" stroke="#ffb030" stroke-width="4.1"/><path d="M343 556Q337 572 342 586" stroke="#ff9a20" stroke-width="4.1"/><path d="M248 272Q231 258 226 260" stroke="#ffc040" stroke-width="3.0"/><path d="M278 310Q266 304 269 301" stroke="#ffd850" stroke-width="2.6"/><path d="M440 366Q454 367 455 357" stroke="#ffd850" stroke-width="2.7"/><path d="M460 342Q459 341 465 331" stroke="#f07818" stroke-width="3.0"/><path d="M415 539Q422 553 419 557" stroke="#f07818" stroke-width="3.1"/><path d="M176 458Q170 451 163 457" stroke="#ffb030" stroke-width="4.2"/><path d="M435 444Q432 459 444 460" stroke="#e86010" stroke-width="3.8"/><path d="M393 533Q387 540 392 556" stroke="#ff9a20" stroke-width="3.6"/><path d="M259 470Q260 482 258 484" stroke="#ff9a20" stroke-width="3.6"/><path d="M427 527Q429 534 442 537" stroke="#e86010" stroke-width="2.7"/><path d="M229 516Q226 516 227 531" stroke="#ff9a20" stroke-width="3.1"/><path d="M136 475Q119 469 116 477" stroke="#ffc040" stroke-width="4.2"/><path d="M333 536Q319 554 320 561" stroke="#e86010" stroke-width="3.3"/><path d="M307 347Q311 343 313 336" stroke="#ff9a20" stroke-width="3.2"/><path d="M397 498Q400 507 412 506" stroke="#ff9a20" stroke-width="2.6"/><path d="M299 303Q306 287 300 283" stroke="#ffd850" stroke-width="4.1"/><path d="M245 368Q231 363 225 345" stroke="#ffb030" stroke-width="3.4"/><path d="M236 447Q235 454 221 455" stroke="#ff9a20" stroke-width="3.3"/><path d="M201 430Q203 442 189 440" stroke="#ffb030" stroke-width="3.2"/><path d="M293 498Q274 514 268 517" stroke="#f07818" stroke-width="3.4"/><path d="M303 560Q306 570 299 578" stroke="#ffd850" stroke-width="3.7"/><path d="M190 369Q173 361 170 361" stroke="#ffb030" stroke-width="2.9"/><path d="M463 391Q468 402 479 401" stroke="#ffd850" stroke-width="3.0"/><path d="M387 392Q388 383 398 382" stroke="#f07818" stroke-width="3.7"/><path d="M381 357Q385 358 398 355" stroke="#ffb030" stroke-width="3.2"/><path d="M141 338Q127 337 115 331" stroke="#e86010" stroke-width="3.2"/><path d="M357 551Q357 558 349 572" stroke="#ff9a20" stroke-width="3.3"/><path d="M312 279Q315 268 313 256" stroke="#e86010" stroke-width="3.1"/><path d="M307 310Q318 300 317 286" stroke="#f07818" stroke-width="2.7"/><path d="M493 437Q505 426 516 422" stroke="#ffc040" stroke-width="3.1"/><path d="M242 511Q238 524 228 541" stroke="#e86010" stroke-width="3.6"/><path d="M318 540Q311 547 312 568" stroke="#f07818" stroke-width="3.3"/><path d="M375 299Q378 287 372 277" stroke="#e86010" stroke-width="2.7"/><path d="M399 475Q412 488 425 496" stroke="#f07818" stroke-width="4.2"/><path d="M155 498Q134 497 127 512" stroke="#ffc040" stroke-width="3.2"/><path d="M266 493Q257 503 258 506" stroke="#ffd850" stroke-width="3.5"/><path d="M223 359Q207 359 199 350" stroke="#ffc040" stroke-width="3.6"/><path d="M360 483Q362 486 368 503" stroke="#ffc040" stroke-width="3.2"/><path d="M478 340Q495 348 511 347" stroke="#f07818" stroke-width="3.7"/><path d="M309 527Q306 535 301 551" stroke="#f07818" stroke-width="2.6"/><path d="M333 529Q343 540 349 554" stroke="#e86010" stroke-width="4.0"/><path d="M378 360Q373 348 384 345" stroke="#e86010" stroke-width="4.0"/><path d="M202 355Q188 347 185 328" stroke="#ff9a20" stroke-width="2.6"/><path d="M415 504Q429 518 435 523" stroke="#ffd850" stroke-width="2.7"/><path d="M198 451Q181 455 176 471" stroke="#e86010" stroke-width="3.5"/><path d="M399 397Q408 394 412 391" stroke="#ffc040" stroke-width="3.1"/><path d="M213 330Q208 327 199 320" stroke="#f07818" stroke-width="3.3"/><path d="M216 456Q207 464 198 457" stroke="#f07818" stroke-width="3.4"/><path d="M368 326Q365 317 376 316" stroke="#ffd850" stroke-width="3.3"/><path d="M166 440Q155 445 153 453" stroke="#f07818" stroke-width="3.2"/><path d="M431 441Q437 440 440 454" stroke="#ff9a20" stroke-width="3.5"/><path d="M444 441Q456 447 462 458" stroke="#ffc040" stroke-width="3.0"/><path d="M454 448Q463 459 468 465" stroke="#ffc040" stroke-width="2.6"/><path d="M209 371Q200 362 188 345" stroke="#ffb030" stroke-width="4.2"/><path d="M402 482Q408 491 423 502" stroke="#ff9a20" stroke-width="4.1"/><path d="M447 404Q459 401 462 392" stroke="#ff9a20" stroke-width="3.6"/><path d="M210 412Q196 420 188 422" stroke="#ffb030" stroke-width="2.7"/><path d="M347 262Q356 258 369 244" stroke="#ffb030" stroke-width="3.6"/><path d="M390 552Q406 562 416 564" stroke="#ffc040" stroke-width="3.4"/><path d="M476 382Q489 386 504 389" stroke="#ffb030" stroke-width="3.0"/><path d="M232 292Q226 280 206 283" stroke="#f07818" stroke-width="3.2"/><path d="M413 365Q422 354 436 352" stroke="#ffd850" stroke-width="4.1"/><path d="M209 271Q201 258 200 254" stroke="#ff9a20" stroke-width="3.5"/><path d="M384 534Q385 546 377 560" stroke="#ffb030" stroke-width="3.3"/><path d="M320 506Q320 521 330 520" stroke="#ffb030" stroke-width="2.9"/><path d="M346 470Q355 477 347 494" stroke="#f07818" stroke-width="3.4"/><path d="M241 306Q236 301 240 285" stroke="#ffd850" stroke-width="2.7"/><path d="M274 289Q265 276 268 258" stroke="#ff9a20" stroke-width="3.0"/><path d="M442 388Q442 382 456 375" stroke="#ff9a20" stroke-width="3.0"/><path d="M257 323Q242 314 240 300" stroke="#ffc040" stroke-width="2.8"/><path d="M223 462Q219 473 219 493" stroke="#ffc040" stroke-width="2.8"/><path d="M202 312Q198 305 195 301" stroke="#ffb030" stroke-width="2.7"/><path d="M406 315Q419 307 418 292" stroke="#ff9a20" stroke-width="3.1"/><path d="M253 461Q252 473 238 472" stroke="#ff9a20" stroke-width="3.8"/><path d="M332 328Q327 317 328 301" stroke="#ffc040" stroke-width="3.1"/><path d="M252 256Q259 246 251 234" stroke="#ffd850" stroke-width="2.5"/><path d="M448 324Q454 319 451 312" stroke="#ffd850" stroke-width="3.1"/><path d="M208 345Q207 343 192 334" stroke="#ff9a20" stroke-width="2.9"/><path d="M197 381Q194 381 181 385" stroke="#f07818" stroke-width="3.4"/><path d="M258 312Q256 300 252 288" stroke="#ffb030" stroke-width="3.8"/><path d="M260 486Q259 491 260 500" stroke="#ffd850" stroke-width="2.9"/><path d="M247 363Q252 355 242 351" stroke="#f07818" stroke-width="3.4"/><path d="M383 373Q387 364 406 360" stroke="#ffd850" stroke-width="3.8"/><path d="M225 388Q216 392 208 384" stroke="#ffb030" stroke-width="3.1"/><path d="M297 293Q302 286 293 274" stroke="#ffb030" stroke-width="3.3"/><path d="M375 336Q372 312 374 303" stroke="#ffb030" stroke-width="4.1"/><path d="M483 460Q484 454 498 458" stroke="#ffd850" stroke-width="3.3"/><path d="M380 474Q389 488 397 493" stroke="#ffc040" stroke-width="2.7"/><path d="M349 356Q355 350 372 344" stroke="#ffd850" stroke-width="3.7"/><path d="M271 340Q263 335 258 335" stroke="#ff9a20" stroke-width="2.7"/><path d="M230 344Q221 339 201 336" stroke="#ffc040" stroke-width="3.3"/><path d="M346 531Q354 545 367 547" stroke="#ffb030" stroke-width="4.1"/><path d="M391 451Q404 461 413 467" stroke="#ffd850" stroke-width="4.1"/><path d="M342 522Q336 539 344 541" stroke="#ff9a20" stroke-width="3.9"/><path d="M212 335Q204 338 200 327" stroke="#e86010" stroke-width="3.9"/><path d="M315 485Q323 484 320 498" stroke="#e86010" stroke-width="3.1"/><path d="M445 400Q444 396 460 396" stroke="#e86010" stroke-width="3.6"/><path d="M369 456Q373 460 382 469" stroke="#ffb030" stroke-width="3.1"/><path d="M266 322Q256 316 241 305" stroke="#ffd850" stroke-width="3.3"/><path d="M453 439Q467 437 468 431" stroke="#ffb030" stroke-width="4.1"/><path d="M166 317Q147 309 143 300" stroke="#ffd850" stroke-width="3.2"/><path d="M402 484Q410 503 407 515" stroke="#ffd850" stroke-width="4.0"/><path d="M457 426Q466 434 470 439" stroke="#ffc040" stroke-width="3.4"/><path d="M416 316Q421 316 442 313" stroke="#ffd850" stroke-width="2.8"/><path d="M308 471Q305 478 298 487" stroke="#e86010" stroke-width="2.7"/><path d="M188 422Q171 421 158 412" stroke="#ffc040" stroke-width="3.8"/><path d="M249 486Q252 495 247 498" stroke="#ffb030" stroke-width="3.3"/><path d="M383 330Q391 319 404 308" stroke="#f07818" stroke-width="3.1"/><path d="M410 333Q420 336 439 334" stroke="#ff9a20" stroke-width="4.0"/><path d="M258 452Q257 448 246 456" stroke="#ff9a20" stroke-width="2.7"/><path d="M382 361Q379 355 390 351" stroke="#ff9a20" stroke-width="3.9"/><path d="M252 272Q250 266 245 251" stroke="#ffb030" stroke-width="3.8"/><path d="M362 447Q371 450 378 450" stroke="#f07818" stroke-width="2.6"/><path d="M169 400Q156 390 144 393" stroke="#f07818" stroke-width="2.5"/><path d="M308 482Q316 494 309 497" stroke="#ff9a20" stroke-width="2.7"/><path d="M346 497Q346 510 349 523" stroke="#ffb030" stroke-width="3.8"/><path d="M377 432Q387 433 398 432" stroke="#ff9a20" stroke-width="4.1"/><path d="M300 512Q302 526 302 528" stroke="#ffb030" stroke-width="3.5"/><path d="M421 488Q429 486 440 494" stroke="#ffb030" stroke-width="3.8"/><path d="M167 322Q153 313 138 310" stroke="#ff9a20" stroke-width="3.9"/><path d="M254 522Q248 536 231 547" stroke="#ff9a20" stroke-width="3.9"/><path d="M438 301Q444 307 462 301" stroke="#ffb030" stroke-width="3.6"/><path d="M341 263Q330 263 335 247" stroke="#ffc040" stroke-width="3.7"/><path d="M396 361Q406 353 424 348" stroke="#ffc040" stroke-width="3.2"/><path d="M189 350Q178 341 157 339" stroke="#e86010" stroke-width="3.2"/><path d="M331 332Q343 322 343 304" stroke="#ffc040" stroke-width="3.3"/><path d="M234 422Q224 423 210 437" stroke="#e86010" stroke-width="4.0"/><path d="M403 298Q404 288 409 281" stroke="#ff9a20" stroke-width="3.5"/><path d="M280 350Q275 331 282 322" stroke="#f07818" stroke-width="3.3"/><path d="M269 525Q263 539 254 544" stroke="#e86010" stroke-width="3.6"/><path d="M266 521Q250 531 247 536" stroke="#f07818" stroke-width="2.7"/><path d="M243 484Q235 495 223 505" stroke="#ffc040" stroke-width="3.1"/><path d="M227 287Q212 277 212 263" stroke="#ffd850" stroke-width="3.6"/><path d="M219 528Q204 532 197 540" stroke="#ffc040" stroke-width="2.9"/><path d="M269 352Q268 349 262 341" stroke="#ff9a20" stroke-width="3.6"/><path d="M310 327Q325 313 328 304" stroke="#e86010" stroke-width="2.6"/><path d="M364 345Q369 344 385 340" stroke="#ff9a20" stroke-width="3.9"/><path d="M425 398Q433 410 451 407" stroke="#ffc040" stroke-width="2.8"/><path d="M358 484Q364 495 359 515" stroke="#ffc040" stroke-width="2.8"/><path d="M395 479Q412 499 417 504" stroke="#ffc040" stroke-width="3.9"/><path d="M309 271Q319 261 327 250" stroke="#e86010" stroke-width="3.0"/><path d="M175 511Q161 518 161 513" stroke="#ff9a20" stroke-width="2.8"/><path d="M353 509Q341 517 342 541" stroke="#ffb030" stroke-width="3.4"/><path d="M218 428Q196 421 186 428" stroke="#ffb030" stroke-width="3.9"/><path d="M234 374Q221 384 212 379" stroke="#ff9a20" stroke-width="3.5"/><path d="M218 427Q217 439 209 443" stroke="#e86010" stroke-width="3.1"/><path d="M432 368Q429 371 442 360" stroke="#ff9a20" stroke-width="3.5"/><path d="M355 481Q367 486 386 493" stroke="#ffb030" stroke-width="3.1"/><path d="M176 434Q167 438 153 450" stroke="#ffd850" stroke-width="2.6"/><path d="M255 313Q260 301 261 280" stroke="#ffd850" stroke-width="2.7"/><path d="M350 284Q359 274 360 269" stroke="#e86010" stroke-width="3.9"/><path d="M331 566Q325 565 325 578" stroke="#e86010" stroke-width="3.4"/><path d="M276 604Q275 614 290 620" stroke="#ffb030" stroke-width="4.0"/><path d="M190 595Q189 604 188 608" stroke="#e86010" stroke-width="3.0"/><path d="M298 513Q298 506 312 493" stroke="#ffb030" stroke-width="3.9"/><path d="M207 544Q198 535 185 542" stroke="#f07818" stroke-width="3.1"/><path d="M218 547Q222 533 211 518" stroke="#e86010" stroke-width="4.1"/><path d="M178 510Q181 505 173 494" stroke="#ff9a20" stroke-width="4.1"/><path d="M284 604Q286 610 286 616" stroke="#ffc040" stroke-width="2.7"/><path d="M185 543Q174 537 164 540" stroke="#ffb030" stroke-width="3.1"/><path d="M293 525Q292 517 305 511" stroke="#ffb030" stroke-width="3.3"/><path d="M224 560Q219 560 208 557" stroke="#f07818" stroke-width="2.7"/><path d="M210 600Q205 602 200 618" stroke="#ffc040" stroke-width="3.7"/><path d="M201 562Q196 562 181 548" stroke="#f07818" stroke-width="3.0"/><path d="M248 568Q249 579 264 584" stroke="#ff9a20" stroke-width="3.6"/><path d="M205 579Q211 593 201 596" stroke="#ffb030" stroke-width="3.7"/><path d="M210 501Q203 496 209 481" stroke="#e86010" stroke-width="3.1"/><path d="M206 583Q199 585 192 602" stroke="#e86010" stroke-width="3.4"/><path d="M203 530Q195 518 202 513" stroke="#ff9a20" stroke-width="2.8"/><path d="M271 527Q291 527 300 514" stroke="#ffc040" stroke-width="3.0"/><path d="M164 604Q155 602 142 611" stroke="#ffb030" stroke-width="3.3"/><path d="M305 568Q323 573 338 566" stroke="#ffb030" stroke-width="3.0"/><path d="M241 555Q254 545 257 543" stroke="#ff9a20" stroke-width="2.8"/><path d="M282 615Q286 636 291 643" stroke="#f07818" stroke-width="3.9"/><path d="M263 498Q254 486 257 469" stroke="#f07818" stroke-width="3.5"/><path d="M169 515Q160 512 147 515" stroke="#ff9a20" stroke-width="2.9"/><path d="M246 569Q259 584 265 596" stroke="#e86010" stroke-width="3.8"/><path d="M296 559Q313 548 324 540" stroke="#ffc040" stroke-width="2.8"/><path d="M260 620Q270 629 268 636" stroke="#f07818" stroke-width="4.1"/><path d="M266 534Q260 520 268 508" stroke="#ffc040" stroke-width="3.9"/><path d="M211 503Q203 495 199 494" stroke="#ff9a20" stroke-width="3.9"/><path d="M224 558Q206 554 194 558" stroke="#e86010" stroke-width="3.7"/><path d="M233 534Q231 516 227 505" stroke="#ff9a20" stroke-width="4.0"/><path d="M213 596Q208 594 196 606" stroke="#ffb030" stroke-width="3.4"/><path d="M232 548Q228 540 225 529" stroke="#ffc040" stroke-width="3.4"/><path d="M276 603Q283 617 283 621" stroke="#ffc040" stroke-width="2.5"/><path d="M222 521Q221 511 221 504" stroke="#ffc040" stroke-width="4.2"/><path d="M222 564Q218 566 202 583" stroke="#ffc040" stroke-width="2.8"/><path d="M225 591Q225 604 221 612" stroke="#ffc040" stroke-width="3.5"/><path d="M167 545Q155 544 137 558" stroke="#ff9a20" stroke-width="2.7"/><path d="M246 609Q247 620 238 629" stroke="#ff9a20" stroke-width="2.7"/><path d="M254 563Q261 566 282 562" stroke="#ffb030" stroke-width="3.2"/><path d="M972 638Q977 618 975 614" stroke="#f03810" stroke-width="3.3"/><path d="M944 661Q941 677 938 693" stroke="#ff6a20" stroke-width="3.8"/><path d="M934 669Q927 687 933 697" stroke="#f03810" stroke-width="3.5"/><path d="M966 660Q977 663 973 676" stroke="#f03810" stroke-width="3.7"/><path d="M994 647Q1010 633 1019 631" stroke="#e83010" stroke-width="4.0"/><path d="M938 661Q939 678 936 692" stroke="#ff6a20" stroke-width="3.0"/><path d="M1006 653Q1022 656 1025 645" stroke="#ff6a20" stroke-width="3.7"/><path d="M927 663Q922 672 912 682" stroke="#ff4a18" stroke-width="4.0"/><path d="M987 670Q1000 668 1004 680" stroke="#f03810" stroke-width="2.9"/><path d="M988 630Q996 625 1009 605" stroke="#e83010" stroke-width="3.6"/><path d="M942 656Q930 665 922 675" stroke="#f03810" stroke-width="3.1"/><path d="M938 617Q932 608 915 598" stroke="#ff6a20" stroke-width="3.1"/><path d="M961 656Q967 660 975 680" stroke="#f03810" stroke-width="2.7"/><path d="M976 666Q983 676 974 691" stroke="#e83010" stroke-width="2.7"/><path d="M934 646Q924 640 909 641" stroke="#ff6a20" stroke-width="4.2"/><path d="M917 661Q899 667 891 678" stroke="#ff4a18" stroke-width="3.6"/><path d="M995 666Q1003 665 1024 675" stroke="#ff6a20" stroke-width="3.1"/><path d="M933 654Q921 650 915 662" stroke="#ff6a20" stroke-width="4.0"/><path d="M1012 658Q1019 659 1035 672" stroke="#e83010" stroke-width="3.2"/><path d="M983 638Q987 627 989 624" stroke="#e83010" stroke-width="4.0"/><path d="M984 638Q995 622 992 618" stroke="#ff6a20" stroke-width="4.0"/><path d="M984 643Q999 637 1008 629" stroke="#ff4a18" stroke-width="3.5"/><path d="M1010 670Q1019 677 1024 697" stroke="#ff6a20" stroke-width="3.2"/><path d="M974 668Q977 667 983 677" stroke="#e83010" stroke-width="3.9"/><path d="M945 634Q952 616 953 613" stroke="#e83010" stroke-width="3.8"/><circle cx="181" cy="169" r="3.6" fill="#f03810" stroke="none"/><circle cx="152" cy="140" r="5.2" fill="#f03810" stroke="none"/><circle cx="96" cy="116" r="5.3" fill="#f03810" stroke="none"/><circle cx="72" cy="135" r="3.6" fill="#e83010" stroke="none"/><circle cx="182" cy="167" r="3.2" fill="#ff4a18" stroke="none"/><circle cx="104" cy="142" r="4.5" fill="#ff4a18" stroke="none"/><circle cx="109" cy="151" r="4.7" fill="#f03810" stroke="none"/><circle cx="93" cy="131" r="5.0" fill="#e83010" stroke="none"/><circle cx="152" cy="142" r="4.6" fill="#ff4a18" stroke="none"/><circle cx="94" cy="146" r="4.6" fill="#ff4a18" stroke="none"/><circle cx="170" cy="178" r="3.9" fill="#f03810" stroke="none"/><circle cx="87" cy="132" r="4.3" fill="#e83010" stroke="none"/><circle cx="194" cy="165" r="5.4" fill="#ff6a20" stroke="none"/><circle cx="138" cy="139" r="3.5" fill="#ff6a20" stroke="none"/><circle cx="87" cy="137" r="3.8" fill="#ff6a20" stroke="none"/><circle cx="196" cy="183" r="4.5" fill="#ff6a20" stroke="none"/><circle cx="52" cy="218" r="3.7" fill="#ff4a18" stroke="none"/><circle cx="26" cy="204" r="4.7" fill="#e83010" stroke="none"/><circle cx="17" cy="176" r="4.3" fill="#ff4a18" stroke="none"/><circle cx="26" cy="197" r="4.1" fill="#ff6a20" stroke="none"/><circle cx="75" cy="235" r="3.5" fill="#ff4a18" stroke="none"/><circle cx="29" cy="199" r="4.0" fill="#f03810" stroke="none"/><circle cx="75" cy="240" r="4.6" fill="#ff6a20" stroke="none"/><circle cx="39" cy="207" r="3.9" fill="#ff6a20" stroke="none"/><circle cx="39" cy="178" r="5.4" fill="#f03810" stroke="none"/><circle cx="51" cy="209" r="5.3" fill="#e83010" stroke="none"/><circle cx="623" cy="474" r="4.9" fill="#e83010" stroke="none"/><circle cx="649" cy="508" r="5.3" fill="#ff6a20" stroke="none"/><circle cx="592" cy="478" r="4.7" fill="#f03810" stroke="none"/><circle cx="634" cy="488" r="4.1" fill="#ff6a20" stroke="none"/><circle cx="601" cy="490" r="5.3" fill="#ff4a18" stroke="none"/><circle cx="630" cy="470" r="4.9" fill="#ff6a20" stroke="none"/><circle cx="625" cy="483" r="4.1" fill="#f03810" stroke="none"/><circle cx="679" cy="522" r="3.1" fill="#ff4a18" stroke="none"/><circle cx="620" cy="478" r="4.5" fill="#e83010" stroke="none"/><circle cx="594" cy="471" r="5.3" fill="#f03810" stroke="none"/><circle cx="596" cy="463" r="5.3" fill="#e83010" stroke="none"/><circle cx="692" cy="540" r="3.9" fill="#ff4a18" stroke="none"/><circle cx="635" cy="493" r="4.0" fill="#f03810" stroke="none"/><circle cx="648" cy="504" r="5.2" fill="#ff4a18" stroke="none"/><circle cx="800" cy="593" r="3.2" fill="#ff6a20" stroke="none"/><circle cx="803" cy="569" r="4.9" fill="#f03810" stroke="none"/><circle cx="762" cy="559" r="5.3" fill="#ff4a18" stroke="none"/><circle cx="818" cy="595" r="3.9" fill="#f03810" stroke="none"/><circle cx="775" cy="576" r="3.4" fill="#ff4a18" stroke="none"/><circle cx="804" cy="582" r="3.1" fill="#f03810" stroke="none"/><circle cx="838" cy="575" r="4.2" fill="#e83010" stroke="none"/><circle cx="801" cy="583" r="5.0" fill="#ff6a20" stroke="none"/><circle cx="473" cy="663" r="3.8" fill="#ff4a18" stroke="none"/><circle cx="422" cy="630" r="3.8" fill="#ff6a20" stroke="none"/><circle cx="508" cy="686" r="3.5" fill="#f03810" stroke="none"/><circle cx="529" cy="682" r="3.5" fill="#e83010" stroke="none"/><circle cx="497" cy="657" r="4.9" fill="#f03810" stroke="none"/><circle cx="555" cy="685" r="4.8" fill="#f03810" stroke="none"/><circle cx="472" cy="666" r="5.0" fill="#e83010" stroke="none"/><circle cx="531" cy="680" r="5.2" fill="#ff4a18" stroke="none"/><circle cx="447" cy="639" r="4.3" fill="#ff6a20" stroke="none"/><circle cx="522" cy="676" r="4.0" fill="#e83010" stroke="none"/><circle cx="491" cy="646" r="5.3" fill="#e83010" stroke="none"/><circle cx="434" cy="642" r="3.5" fill="#ff4a18" stroke="none"/><circle cx="457" cy="660" r="4.7" fill="#f03810" stroke="none"/><circle cx="455" cy="643" r="4.7" fill="#ff6a20" stroke="none"/><circle cx="324" cy="684" r="3.8" fill="#f03810" stroke="none"/><circle cx="277" cy="660" r="4.4" fill="#ff6a20" stroke="none"/><circle cx="275" cy="661" r="4.9" fill="#ff6a20" stroke="none"/><circle cx="208" cy="635" r="4.5" fill="#f03810" stroke="none"/><circle cx="276" cy="664" r="5.4" fill="#f03810" stroke="none"/><circle cx="291" cy="687" r="5.4" fill="#ff4a18" stroke="none"/><circle cx="305" cy="686" r="4.0" fill="#f03810" stroke="none"/><circle cx="265" cy="650" r="4.6" fill="#f03810" stroke="none"/><circle cx="278" cy="666" r="5.4" fill="#e83010" stroke="none"/><circle cx="274" cy="648" r="5.5" fill="#ff6a20" stroke="none"/><circle cx="278" cy="668" r="5.3" fill="#e83010" stroke="none"/><circle cx="266" cy="667" r="4.7" fill="#e83010" stroke="none"/><circle cx="646" cy="416" r="3.8" fill="#f03810" stroke="none"/><circle cx="604" cy="392" r="3.4" fill="#ff4a18" stroke="none"/><circle cx="607" cy="411" r="5.0" fill="#ff4a18" stroke="none"/><circle cx="598" cy="409" r="4.1" fill="#f03810" stroke="none"/><circle cx="658" cy="409" r="4.5" fill="#ff4a18" stroke="none"/><circle cx="625" cy="410" r="4.8" fill="#e83010" stroke="none"/><circle cx="590" cy="397" r="3.5" fill="#f03810" stroke="none"/><circle cx="631" cy="406" r="4.1" fill="#ff4a18" stroke="none"/><circle cx="233" cy="201" r="5.0" fill="#ff6a20" stroke="none"/><circle cx="288" cy="244" r="4.1" fill="#ff4a18" stroke="none"/><circle cx="213" cy="198" r="4.0" fill="#ff4a18" stroke="none"/><circle cx="306" cy="222" r="5.1" fill="#ff6a20" stroke="none"/><circle cx="238" cy="212" r="3.9" fill="#ff4a18" stroke="none"/><circle cx="236" cy="214" r="3.5" fill="#ff6a20" stroke="none"/><circle cx="227" cy="199" r="5.4" fill="#f03810" stroke="none"/><circle cx="265" cy="214" r="4.9" fill="#e83010" stroke="none"/><circle cx="139" cy="488" r="5.1" fill="#ff6a20" stroke="none"/><circle cx="161" cy="487" r="4.3" fill="#ff4a18" stroke="none"/><circle cx="109" cy="480" r="4.7" fill="#ff4a18" stroke="none"/><circle cx="96" cy="465" r="4.6" fill="#ff6a20" stroke="none"/><circle cx="132" cy="485" r="4.7" fill="#f03810" stroke="none"/><circle cx="135" cy="467" r="5.5" fill="#e83010" stroke="none"/><circle cx="23" cy="461" r="5.5" fill="#ff4a18" stroke="none"/><circle cx="61" cy="454" r="3.4" fill="#ff6a20" stroke="none"/><circle cx="88" cy="471" r="4.4" fill="#f03810" stroke="none"/><circle cx="101" cy="467" r="4.0" fill="#e83010" stroke="none"/><circle cx="30" cy="470" r="4.1" fill="#e83010" stroke="none"/><circle cx="147" cy="471" r="5.1" fill="#ff4a18" stroke="none"/><circle cx="42" cy="458" r="4.5" fill="#f03810" stroke="none"/><circle cx="159" cy="497" r="3.6" fill="#ff4a18" stroke="none"/></g>
<g filter="url(#g3)"><ellipse cx="460" cy="85" rx="55" ry="41" fill="url(#n1)" transform="rotate(8 460 85)"/><ellipse cx="615" cy="214" rx="47" ry="39" fill="url(#n1)" transform="rotate(10 615 214)"/><ellipse cx="885" cy="122" rx="60" ry="66" fill="url(#n2)" transform="rotate(-15 885 122)"/><ellipse cx="307" cy="400" rx="70" ry="58" fill="url(#n1)" transform="rotate(10 307 400)"/><ellipse cx="988" cy="637" rx="22" ry="36" fill="url(#n2)" transform="rotate(0 988 637)"/></g>
</g></svg>
<svg style="left:0;top:0;" width="1548" height="750" viewBox="0 0 1548 750" fill="none">
<g stroke="#d4dee9" stroke-width="1.1"><path d="M1180.0 358.8H1481.6"/><path d="M1180.0 337.1H1481.6"/><path d="M1180.0 315.5H1481.6"/><path d="M1180.0 293.8H1481.6"/><path d="M1180.0 272.2H1481.6"/><path d="M1180.0 250.5H1481.6"/><path d="M1180.0 228.8H1481.6"/><path d="M1180.0 207.2H1481.6"/><path d="M1193.3 187.8V367.2"/><path d="M1272.2 187.8V367.2"/><path d="M1351.0 187.8V367.2"/><path d="M1429.8 187.8V367.2"/></g>
<path d="M1180.0 355.4L1184.0 355.2L1188.0 355.0L1192.0 354.8L1196.0 354.6L1200.0 354.3L1204.0 354.0L1208.0 353.7L1212.0 353.3L1216.0 352.8L1220.0 352.3L1224.0 351.7L1228.0 351.1L1232.0 350.4L1236.0 349.6L1240.0 348.7L1244.0 347.7L1248.0 346.6L1252.0 345.4L1256.0 344.0L1260.0 342.5L1264.0 340.9L1268.0 339.1L1272.0 337.1L1276.0 335.0L1280.0 332.7L1284.0 330.3L1288.0 327.7L1292.0 324.9L1296.0 322.0L1300.0 319.0L1304.0 315.8L1308.0 312.6L1312.0 309.3L1316.0 305.9L1320.0 302.6L1324.0 299.2L1328.0 295.9L1332.0 292.7L1336.0 289.6L1340.0 286.5L1344.0 283.6L1348.0 280.9L1352.0 278.3L1356.0 275.9L1360.0 273.6L1364.0 271.5L1368.0 269.5L1372.0 267.7L1376.0 266.1L1380.0 264.6L1384.0 263.3L1388.0 262.1L1392.0 261.0L1396.0 260.0L1400.0 259.1L1404.0 258.3L1408.0 257.6L1412.0 257.0L1416.0 256.4L1420.0 255.9L1424.0 255.5L1428.0 255.1L1432.0 254.7L1436.0 254.4L1440.0 254.2L1444.0 253.9L1448.0 253.7L1452.0 253.5L1456.0 253.3L1460.0 253.2L1464.0 253.1L1468.0 253.0L1472.0 252.9L1476.0 252.8L1480.0 252.7" stroke="#555a55" stroke-width="2.4" stroke-linejoin="round"/>
<path d="M1180.0 355.4L1184.0 355.2L1188.0 355.0L1192.0 354.8L1196.0 354.6L1200.0 354.3L1204.0 354.0L1208.0 353.7L1212.0 353.3L1216.0 352.8L1220.0 352.3L1224.0 351.7L1228.0 351.1L1232.0 350.4L1236.0 349.6L1240.0 348.7L1244.0 347.7L1248.0 346.6L1252.0 345.4L1256.0 344.0L1260.0 342.5L1264.0 340.9L1268.0 339.1L1272.0 337.1L1276.0 335.0L1280.0 332.7L1284.0 330.3L1288.0 327.7L1292.0 324.9L1296.0 322.0L1300.0 319.0L1304.0 315.8L1308.0 312.6L1312.0 309.3L1316.0 305.9L1320.0 302.6L1324.0 299.2L1328.0 295.9L1332.0 292.7L1336.0 289.6L1340.0 286.5L1344.0 283.6L1348.0 280.9L1352.0 278.3L1356.0 275.9L1360.0 273.6L1364.0 271.5L1368.0 269.5L1372.0 267.7L1376.0 266.1L1380.0 264.6L1384.0 263.3L1388.0 262.1L1392.0 261.0L1396.0 260.0L1400.0 259.1L1404.0 258.3L1408.0 257.6L1412.0 257.0L1416.0 256.4L1420.0 255.9L1424.0 255.5L1428.0 255.1L1432.0 254.7L1436.0 254.4L1440.0 254.2L1444.0 253.9L1448.0 253.7L1452.0 253.5L1456.0 253.3L1460.0 253.2L1464.0 253.1L1468.0 253.0L1472.0 252.9L1476.0 252.8L1480.0 252.7" stroke="#4d5a22" stroke-width="1.4" stroke-linejoin="round"/>
<path d="M1269.4 323.1H1275.0" stroke="#111" stroke-width="1.6"/><path d="M1270.6 326.9H1273.8" stroke="#e03030" stroke-width="1.6"/><path d="M1270.6 334.4H1273.8" stroke="#e03030" stroke-width="1.6"/><path d="M1270.2 336.6H1274.2" stroke="#2a2a2a" stroke-width="1.6"/><path d="M1191.5 344.5H1195.1" stroke="#555" stroke-width="1.6"/><path d="M1192.1 350.1H1194.5" stroke="#c04040" stroke-width="1.6"/><path d="M1229.5 360.4H1232.3" stroke="#666" stroke-width="1.6"/><path d="M1308.2 311.7H1311.4" stroke="#777" stroke-width="1.6"/>
<circle cx="1193.3" cy="348.0" r="2.6" fill="#5c7d0e"/><circle cx="1230.9" cy="363.1" r="2.6" fill="#5c7d0e"/><circle cx="1272.2" cy="330.6" r="2.6" fill="#5c7d0e"/><circle cx="1309.8" cy="313.9" r="2.6" fill="#5c7d0e"/><circle cx="1351.0" cy="277.6" r="2.6" fill="#5c7d0e"/><circle cx="1388.6" cy="261.3" r="2.6" fill="#5c7d0e"/><circle cx="1429.8" cy="254.3" r="2.6" fill="#5c7d0e"/><circle cx="1467.5" cy="252.7" r="2.6" fill="#5c7d0e"/>
<path d="M1180.0 187.8V367.2H1481.6" stroke="#444" stroke-width="1.9"/>
<g stroke="#444" stroke-width="1.7"><path d="M1173.5 358.8H1180.0"/><path d="M1173.5 337.1H1180.0"/><path d="M1173.5 315.5H1180.0"/><path d="M1173.5 293.8H1180.0"/><path d="M1173.5 272.2H1180.0"/><path d="M1173.5 250.5H1180.0"/><path d="M1173.5 228.8H1180.0"/><path d="M1173.5 207.2H1180.0"/><path d="M1193.3 367.2V374.8"/><path d="M1272.2 367.2V374.8"/><path d="M1351.0 367.2V374.8"/><path d="M1429.8 367.2V374.8"/></g>
<g font-family="Liberation Sans, sans-serif" font-size="11" fill="#6a6a6a" text-anchor="end"><text x="1172.5" y="362.0" transform="rotate(-30 1172.5 358.8)">0</text><text x="1172.5" y="340.3" transform="rotate(-30 1172.5 337.1)">20</text><text x="1172.5" y="318.7" transform="rotate(-30 1172.5 315.5)">40</text><text x="1172.5" y="297.0" transform="rotate(-30 1172.5 293.8)">60</text><text x="1172.5" y="275.4" transform="rotate(-30 1172.5 272.2)">80</text><text x="1172.5" y="253.7" transform="rotate(-30 1172.5 250.5)">100</text><text x="1172.5" y="232.0" transform="rotate(-30 1172.5 228.8)">120</text><text x="1172.5" y="210.4" transform="rotate(-30 1172.5 207.2)">140</text></g>
<g font-family="Liberation Sans, sans-serif" font-size="10.8" fill="#444" text-anchor="middle"><text x="1193.3" y="386.6">0.01</text><text x="1272.2" y="386.6">0.1</text><text x="1351.0" y="386.6">1</text><text x="1429.8" y="386.6">10</text></g>
<text x="1330.4" y="405.8" font-family="Liberation Sans, sans-serif" font-size="12" font-weight="bold" fill="#333" text-anchor="middle">Concentration (uM)</text>
<text x="1120.3" y="278.6" font-family="Liberation Sans, sans-serif" font-size="12" font-weight="bold" fill="#333" text-anchor="middle" textLength="88" lengthAdjust="spacingAndGlyphs" transform="rotate(-90 1120.3 278.6)">% inhibition (%)</text>
</svg>
<svg style="left:0;top:0;" width="1548" height="750" viewBox="0 0 1548 750" fill="none">
<g stroke="#d4dee9" stroke-width="1.1"><path d="M1180.0 642.7H1481.6"/><path d="M1180.0 621.0H1481.6"/><path d="M1180.0 599.4H1481.6"/><path d="M1180.0 577.7H1481.6"/><path d="M1180.0 556.1H1481.6"/><path d="M1180.0 534.4H1481.6"/><path d="M1180.0 512.7H1481.6"/><path d="M1180.0 491.1H1481.6"/><path d="M1193.3 471.7V651.0999999999999"/><path d="M1272.2 471.7V651.0999999999999"/><path d="M1351.0 471.7V651.0999999999999"/><path d="M1429.8 471.7V651.0999999999999"/></g>
<path d="M1180.0 637.5L1184.0 637.4L1188.0 637.2L1192.0 637.0L1196.0 636.8L1200.0 636.6L1204.0 636.3L1208.0 636.0L1212.0 635.6L1216.0 635.2L1220.0 634.7L1224.0 634.1L1228.0 633.5L1232.0 632.8L1236.0 631.9L1240.0 631.0L1244.0 630.0L1248.0 628.8L1252.0 627.4L1256.0 625.9L1260.0 624.2L1264.0 622.3L1268.0 620.3L1272.0 618.0L1276.0 615.5L1280.0 612.8L1284.0 609.9L1288.0 606.9L1292.0 603.6L1296.0 600.2L1300.0 596.7L1304.0 593.1L1308.0 589.4L1312.0 585.7L1316.0 582.0L1320.0 578.4L1324.0 574.9L1328.0 571.5L1332.0 568.3L1336.0 565.2L1340.0 562.3L1344.0 559.7L1348.0 557.2L1352.0 555.0L1356.0 552.9L1360.0 551.1L1364.0 549.4L1368.0 547.9L1372.0 546.6L1376.0 545.4L1380.0 544.3L1384.0 543.4L1388.0 542.6L1392.0 541.9L1396.0 541.3L1400.0 540.7L1404.0 540.3L1408.0 539.8L1412.0 539.5L1416.0 539.2L1420.0 538.9L1424.0 538.6L1428.0 538.4L1432.0 538.3L1436.0 538.1L1440.0 538.0L1444.0 537.9L1448.0 537.8L1452.0 537.7L1456.0 537.6L1460.0 537.5L1464.0 537.5L1468.0 537.4L1472.0 537.4L1476.0 537.3L1480.0 537.3" stroke="#4a7a80" stroke-width="1.4" stroke-linejoin="round"/>
<path d="M1180.0 638.5L1184.0 638.4L1188.0 638.2L1192.0 638.0L1196.0 637.8L1200.0 637.5L1204.0 637.3L1208.0 636.9L1212.0 636.6L1216.0 636.1L1220.0 635.7L1224.0 635.1L1228.0 634.5L1232.0 633.8L1236.0 633.0L1240.0 632.1L1244.0 631.1L1248.0 629.9L1252.0 628.7L1256.0 627.2L1260.0 625.6L1264.0 623.9L1268.0 621.9L1272.0 619.8L1276.0 617.5L1280.0 615.0L1284.0 612.3L1288.0 609.4L1292.0 606.3L1296.0 603.1L1300.0 599.8L1304.0 596.3L1308.0 592.8L1312.0 589.2L1316.0 585.6L1320.0 582.1L1324.0 578.6L1328.0 575.2L1332.0 571.9L1336.0 568.7L1340.0 565.8L1344.0 563.0L1348.0 560.3L1352.0 557.9L1356.0 555.7L1360.0 553.7L1364.0 551.8L1368.0 550.1L1372.0 548.6L1376.0 547.3L1380.0 546.0L1384.0 545.0L1388.0 544.0L1392.0 543.2L1396.0 542.4L1400.0 541.7L1404.0 541.2L1408.0 540.7L1412.0 540.2L1416.0 539.8L1420.0 539.5L1424.0 539.2L1428.0 538.9L1432.0 538.7L1436.0 538.5L1440.0 538.3L1444.0 538.1L1448.0 538.0L1452.0 537.9L1456.0 537.8L1460.0 537.7L1464.0 537.6L1468.0 537.6L1472.0 537.5L1476.0 537.4L1480.0 537.4" stroke="#555a55" stroke-width="2.2" stroke-linejoin="round"/>
<path d="M1180.0 638.7L1184.0 638.6L1188.0 638.5L1192.0 638.4L1196.0 638.2L1200.0 638.0L1204.0 637.8L1208.0 637.5L1212.0 637.2L1216.0 636.9L1220.0 636.5L1224.0 636.0L1228.0 635.5L1232.0 634.9L1236.0 634.2L1240.0 633.4L1244.0 632.6L1248.0 631.6L1252.0 630.4L1256.0 629.2L1260.0 627.7L1264.0 626.1L1268.0 624.3L1272.0 622.4L1276.0 620.2L1280.0 617.8L1284.0 615.2L1288.0 612.4L1292.0 609.4L1296.0 606.2L1300.0 602.8L1304.0 599.3L1308.0 595.7L1312.0 592.0L1316.0 588.3L1320.0 584.6L1324.0 580.9L1328.0 577.3L1332.0 573.8L1336.0 570.4L1340.0 567.2L1344.0 564.2L1348.0 561.4L1352.0 558.8L1356.0 556.4L1360.0 554.2L1364.0 552.2L1368.0 550.5L1372.0 548.8L1376.0 547.4L1380.0 546.1L1384.0 545.0L1388.0 544.0L1392.0 543.1L1396.0 542.3L1400.0 541.7L1404.0 541.1L1408.0 540.6L1412.0 540.1L1416.0 539.7L1420.0 539.4L1424.0 539.1L1428.0 538.8L1432.0 538.6L1436.0 538.4L1440.0 538.2L1444.0 538.1L1448.0 537.9L1452.0 537.8L1456.0 537.7L1460.0 537.6L1464.0 537.6L1468.0 537.5L1472.0 537.5L1476.0 537.4L1480.0 537.4" stroke="#4d5a22" stroke-width="1.4" stroke-linejoin="round"/>
<path d="M1180.0 636.6L1184.0 636.4L1188.0 636.2L1192.0 636.0L1196.0 635.7L1200.0 635.5L1204.0 635.1L1208.0 634.7L1212.0 634.3L1216.0 633.8L1220.0 633.3L1224.0 632.7L1228.0 632.0L1232.0 631.2L1236.0 630.3L1240.0 629.3L1244.0 628.2L1248.0 627.0L1252.0 625.6L1256.0 624.1L1260.0 622.4L1264.0 620.5L1268.0 618.5L1272.0 616.4L1276.0 614.0L1280.0 611.5L1284.0 608.8L1288.0 605.9L1292.0 602.9L1296.0 599.8L1300.0 596.6L1304.0 593.3L1308.0 589.9L1312.0 586.5L1316.0 583.2L1320.0 579.8L1324.0 576.6L1328.0 573.4L1332.0 570.3L1336.0 567.4L1340.0 564.6L1344.0 562.0L1348.0 559.6L1352.0 557.3L1356.0 555.3L1360.0 553.3L1364.0 551.6L1368.0 550.0L1372.0 548.6L1376.0 547.3L1380.0 546.1L1384.0 545.1L1388.0 544.1L1392.0 543.3L1396.0 542.6L1400.0 541.9L1404.0 541.3L1408.0 540.8L1412.0 540.4L1416.0 540.0L1420.0 539.6L1424.0 539.3L1428.0 539.0L1432.0 538.8L1436.0 538.6L1440.0 538.4L1444.0 538.2L1448.0 538.1L1452.0 538.0L1456.0 537.9L1460.0 537.8L1464.0 537.7L1468.0 537.6L1472.0 537.6L1476.0 537.5L1480.0 537.5" stroke="#9a6a6a" stroke-width="1.0" stroke-linejoin="round"/>
<path d="M1190.5 624.8H1196.1" stroke="#111" stroke-width="1.6"/><path d="M1190.8 627.5H1195.8" stroke="#2a6a30" stroke-width="1.6"/><path d="M1191.8 631.9H1194.8" stroke="#c04040" stroke-width="1.6"/><path d="M1228.3 638.9H1233.5" stroke="#111" stroke-width="1.6"/><path d="M1228.9 641.6H1232.9" stroke="#4a8a80" stroke-width="1.6"/><path d="M1229.1 648.7H1232.7" stroke="#d04040" stroke-width="1.6"/><path d="M1269.4 609.1H1275.0" stroke="#111" stroke-width="1.6"/><path d="M1269.8 611.3H1274.6" stroke="#4a8a80" stroke-width="1.6"/><path d="M1270.2 614.5H1274.2" stroke="#d04040" stroke-width="1.6"/><path d="M1270.2 620.0H1274.2" stroke="#4a8a80" stroke-width="1.6"/><path d="M1270.6 624.3H1273.8" stroke="#c04040" stroke-width="1.6"/><path d="M1307.2 579.3H1312.4" stroke="#111" stroke-width="1.6"/><path d="M1307.6 582.1H1312.0" stroke="#223" stroke-width="1.6"/><path d="M1307.8 585.3H1311.8" stroke="#d04040" stroke-width="1.6"/><path d="M1307.8 589.6H1311.8" stroke="#4a8a80" stroke-width="1.6"/><path d="M1308.2 596.1H1311.4" stroke="#c04040" stroke-width="1.6"/><path d="M1349.4 556.6H1352.6" stroke="#888" stroke-width="1.6"/><path d="M1349.6 560.9H1352.4" stroke="#c08080" stroke-width="1.6"/>
<circle cx="1193.3" cy="629.7" r="2.6" fill="#5c7d0e"/><circle cx="1230.9" cy="645.9" r="2.6" fill="#5c7d0e"/><circle cx="1272.2" cy="627.5" r="2.6" fill="#5c7d0e"/><circle cx="1309.8" cy="594.0" r="2.6" fill="#5c7d0e"/><circle cx="1351.0" cy="559.3" r="2.6" fill="#5c7d0e"/><circle cx="1388.6" cy="543.1" r="2.6" fill="#5c7d0e"/><circle cx="1429.8" cy="536.6" r="2.6" fill="#5c7d0e"/><circle cx="1467.5" cy="535.5" r="2.6" fill="#5c7d0e"/>
<path d="M1180.0 471.7V651.0999999999999H1481.6" stroke="#444" stroke-width="1.9"/>
<g stroke="#444" stroke-width="1.7"><path d="M1173.5 642.7H1180.0"/><path d="M1173.5 621.0H1180.0"/><path d="M1173.5 599.4H1180.0"/><path d="M1173.5 577.7H1180.0"/><path d="M1173.5 556.1H1180.0"/><path d="M1173.5 534.4H1180.0"/><path d="M1173.5 512.7H1180.0"/><path d="M1173.5 491.1H1180.0"/><path d="M1193.3 651.0999999999999V658.7"/><path d="M1272.2 651.0999999999999V658.7"/><path d="M1351.0 651.0999999999999V658.7"/><path d="M1429.8 651.0999999999999V658.7"/></g>
<g font-family="Liberation Sans, sans-serif" font-size="11" fill="#6a6a6a" text-anchor="end"><text x="1172.5" y="645.9" transform="rotate(-30 1172.5 642.7)">0</text><text x="1172.5" y="624.2" transform="rotate(-30 1172.5 621.0)">20</text><text x="1172.5" y="602.6" transform="rotate(-30 1172.5 599.4)">40</text><text x="1172.5" y="580.9" transform="rotate(-30 1172.5 577.7)">60</text><text x="1172.5" y="559.3" transform="rotate(-30 1172.5 556.1)">80</text><text x="1172.5" y="537.6" transform="rotate(-30 1172.5 534.4)">100</text><text x="1172.5" y="515.9" transform="rotate(-30 1172.5 512.7)">120</text><text x="1172.5" y="494.3" transform="rotate(-30 1172.5 491.1)">140</text></g>
<g font-family="Liberation Sans, sans-serif" font-size="10.8" fill="#444" text-anchor="middle"><text x="1193.3" y="670.5">0.01</text><text x="1272.2" y="670.5">0.1</text><text x="1351.0" y="670.5">1</text><text x="1429.8" y="670.5">10</text></g>
<text x="1330.4" y="689.7" font-family="Liberation Sans, sans-serif" font-size="12" font-weight="bold" fill="#333" text-anchor="middle">Concentration (uM)</text>
<text x="1120.3" y="562.5" font-family="Liberation Sans, sans-serif" font-size="12" font-weight="bold" fill="#333" text-anchor="middle" textLength="88" lengthAdjust="spacingAndGlyphs" transform="rotate(-90 1120.3 562.5)">% inhibition (%)</text>
</svg>
<!-- callout -->
<svg style="left:0;top:0;" width="1548" height="750" viewBox="0 0 1548 750" fill="none">
<rect x="284.1" y="245.95" width="401.9" height="197.05" fill="#fff" stroke="#e97132" stroke-width="3.85" stroke-linejoin="round"/>
<rect x="851" y="430.1" width="245.2" height="26.9" rx="5.5" stroke="#e97132" stroke-width="3.8"/>
<path d="M686.5 345.5L842 438" stroke="#e97132" stroke-width="3.8"/>
<path d="M849.6 442.7L836.8 442.6L843.4 431.6Z" fill="#e97132"/>
</svg>
<div class="abs" style="left:286px;top:248px;width:398px;height:190px;text-align:center;color:#e97132;font-weight:bold;font-size:35.3px;line-height:45px;white-space:nowrap;-webkit-text-stroke:0.3px #e97132;">
<div style="position:absolute;left:0;width:398px;top:5.5px;letter-spacing:0.5px;word-spacing:-3px;">Carousel through</div>
<div style="position:absolute;left:0;width:398px;top:50.5px;letter-spacing:0.78px;word-spacing:-2px;">image replicates</div>
<div style="position:absolute;left:0;width:398px;top:95.6px;letter-spacing:0.5px;word-spacing:-2px;">using the left and</div>
<div style="position:absolute;left:0;width:398px;top:140.7px;letter-spacing:0.25px;">right arrows</div>
</div>
</body></html>
